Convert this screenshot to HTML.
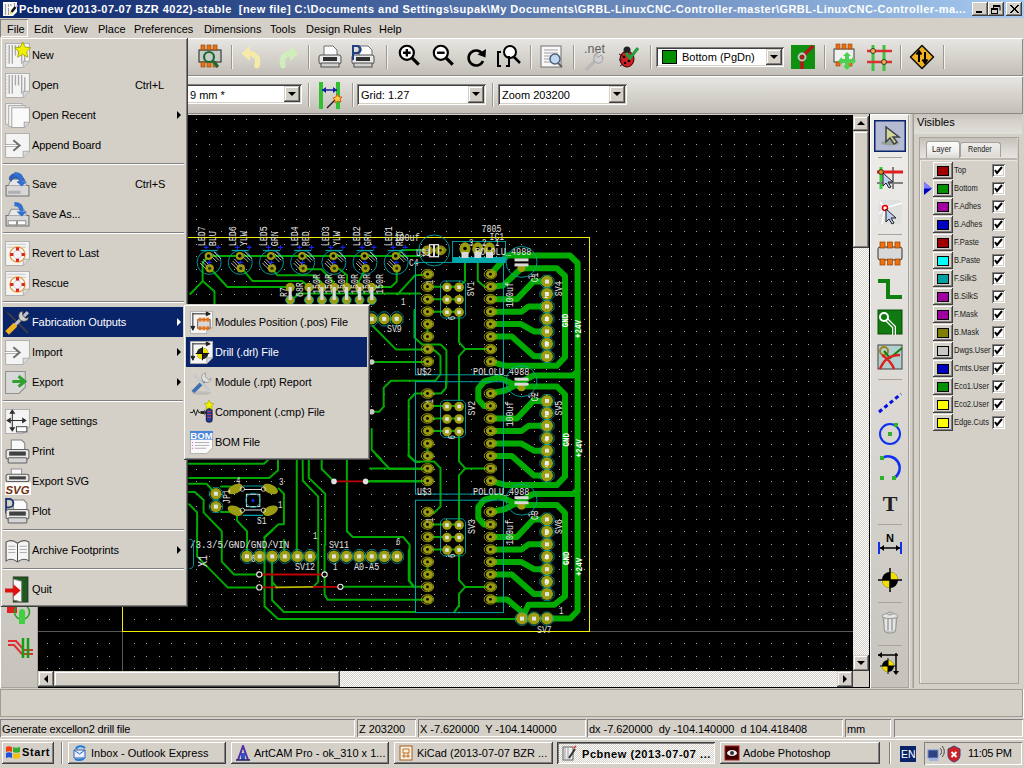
<!DOCTYPE html><html><head><meta charset="utf-8"><style>

*{box-sizing:border-box}
body{margin:0;width:1024px;height:768px;position:relative;overflow:hidden;background:#d4d0c8;font-family:"Liberation Sans",sans-serif;font-size:11px;color:#000}
.a{position:absolute}
.t{position:absolute;white-space:pre;line-height:13px}
.raised{box-shadow:inset -1px -1px #404040,inset 1px 1px #fff,inset -2px -2px #808080}
.menuf{background:#d4d0c8;box-shadow:inset 1px 1px #d4d0c8,inset -1px -1px #404040,inset 2px 2px #fff,inset -2px -2px #808080}
.sunk{box-shadow:inset 1px 1px #808080,inset -1px -1px #fff,inset 2px 2px #404040,inset -2px -2px #d4d0c8}
.tb{position:absolute;left:0;width:1023px;height:38px;background:linear-gradient(#ecebe7 0px,#e6e4e0 2px,#d6d3cd 19px,#c4c0b9 36px);box-shadow:inset 0 1px #fff,inset 0 -1px #8c8984,inset -1px 0 #8c8984}
.sep{position:absolute;width:1px;height:24px;background:#9c9891;box-shadow:1px 0 #f4f3f0}
.combo{position:absolute;background:#fff;box-shadow:inset 1px 1px #808080,inset -1px -1px #fff,inset 2px 2px #404040,inset -2px -2px #d4d0c8}
.cbtn{position:absolute;top:2px;right:2px;width:16px;bottom:2px;background:#d4d0c8;box-shadow:inset -1px -1px #404040,inset 1px 1px #d4d0c8,inset -2px -2px #808080,inset 2px 2px #fff}
.cbtn:after{content:"";position:absolute;left:4px;top:6px;border-left:4px solid transparent;border-right:4px solid transparent;border-top:4px solid #000}
.mi{position:absolute;left:3px;width:180px;height:30px}
.mt{position:absolute;left:29px;top:9px;white-space:pre;line-height:13px;letter-spacing:-0.1px}
.hl{background:#0a246a;color:#fff}
.msep{position:absolute;left:3px;height:2px;width:181px;box-shadow:inset 0 1px #808080, inset 0 -1px #fff}
.arr{position:absolute;width:0;height:0;border-top:4px solid transparent;border-bottom:4px solid transparent;border-left:4px solid #000}
.ic{position:absolute}
.sp{position:absolute;height:18px;box-shadow:inset 1px 1px #808080,inset -1px -1px #fff}
.tbtn{position:absolute;top:3px;height:23px;background:#d4d0c8;box-shadow:inset -1px -1px #404040,inset 1px 1px #fff,inset -2px -2px #808080,inset 2px 2px #d4d0c8}

</style></head><body>
<div class="a" style="left:0;top:0;width:1024px;height:18px;background:linear-gradient(90deg,#0a246a,#a6caf0)"></div>
<svg class="a" style="left:0;top:0" width="18" height="18" viewBox="0 0 18 18">
<path d="M3 2h14v10l-4 4H3z" fill="#fafafa"/><path d="M5.5 4v11M8.5 4v3M8.5 8v7M11 4v2M14.5 3v6" stroke="#a0a0a0" stroke-width="1.2"/>
<path d="M15.5 7L11.5 12" stroke="#101010" stroke-width="2.6"/><circle cx="11" cy="13" r="1.2" fill="#e0e040"/><circle cx="17" cy="6" r="0.9" fill="#f080f0"/></svg>
<div class="t" style="left:19px;top:3px;color:#fff;font-weight:bold;letter-spacing:0.455px">Pcbnew (2013-07-07 BZR 4022)-stable  [new file] C:\Documents and Settings\supak\My Documents\GRBL-LinuxCNC-Controller-master\GRBL-LinuxCNC-Controller-ma...</div>
<div class="a raised" style="left:972px;top:2px;width:16px;height:14px;background:#d4d0c8"></div>
<div class="a raised" style="left:988px;top:2px;width:16px;height:14px;background:#d4d0c8"></div>
<div class="a raised" style="left:1006px;top:2px;width:16px;height:14px;background:#d4d0c8"></div>
<div class="a" style="left:976px;top:11px;width:6px;height:2px;background:#000"></div>
<svg class="a" style="left:988px;top:2px" width="16" height="14"><path d="M6 3.5h6v5M5.5 3v3M6 4.5h6" stroke="#000" fill="none"/><rect x="3.5" y="6.5" width="6" height="5" fill="none" stroke="#000"/><path d="M3 7.5h7" stroke="#000"/></svg>
<svg class="a" style="left:1006px;top:2px" width="16" height="14"><path d="M4 3l8 8M5 3l8 8M12 3l-8 8M13 3l-8 8" stroke="#000" stroke-width="1"/></svg>
<div class="a" style="left:0;top:19px;width:28px;height:18px;box-shadow:inset 1px 1px #808080,inset -1px -1px #fff"></div>
<div class="t" style="left:7px;top:23px">File</div>
<div class="t" style="left:34px;top:23px">Edit</div>
<div class="t" style="left:64px;top:23px">View</div>
<div class="t" style="left:98px;top:23px">Place</div>
<div class="t" style="left:134px;top:23px">Preferences</div>
<div class="t" style="left:204px;top:23px">Dimensions</div>
<div class="t" style="left:270px;top:23px">Tools</div>
<div class="t" style="left:306px;top:23px">Design Rules</div>
<div class="t" style="left:379px;top:23px">Help</div>
<div class="tb" style="top:38px"></div>
<div class="tb" style="top:76px"></div>
<div class="sep" style="left:231px;top:45px"></div>
<div class="sep" style="left:308px;top:45px"></div>
<div class="sep" style="left:386px;top:45px"></div>
<div class="sep" style="left:530px;top:45px"></div>
<div class="sep" style="left:573px;top:45px"></div>
<div class="sep" style="left:650px;top:45px"></div>
<div class="sep" style="left:824px;top:45px"></div>
<div class="sep" style="left:900px;top:45px"></div>
<div class="sep" style="left:943px;top:45px"></div>
<div class="sep" style="left:308px;top:83px"></div>
<div class="sep" style="left:352px;top:83px"></div>
<div class="sep" style="left:492px;top:83px"></div>
<svg class="a" style="left:196px;top:43px" width="28" height="28" viewBox="0 0 28 28"><rect x="3" y="7" width="22" height="12" fill="#c8ccc8" stroke="#202020"/>
<g fill="#f07010" stroke="#804000" stroke-width="0.6"><rect x="5" y="2" width="4" height="5"/><rect x="11" y="2" width="4" height="5"/><rect x="17" y="2" width="4" height="5"/><rect x="5" y="19" width="4" height="5"/><rect x="11" y="19" width="4" height="5"/><rect x="17" y="19" width="4" height="5"/></g>
<circle cx="13" cy="14" r="5" fill="none" stroke="#1a6a30" stroke-width="2.2"/><path d="M17 18l5 6" stroke="#1a6a30" stroke-width="3"/></svg>
<svg class="a" style="left:240px;top:45px" width="24" height="24" viewBox="0 0 24 24"><path d="M1.5 8.5L10 1V16Z" fill="#f6eaa8"/><path d="M8 8.5C16 8.5 19 13 17 20.5" stroke="#f6eaa8" stroke-width="5.5" fill="none" stroke-linecap="round"/></svg>
<svg class="a" style="left:276px;top:45px" width="24" height="24" viewBox="0 0 24 24"><path d="M22.5 8.5L14 1V16Z" fill="#d0eebc"/><path d="M16 8.5C8 8.5 5 13 7 20.5" stroke="#d0eebc" stroke-width="5.5" fill="none" stroke-linecap="round"/></svg>
<svg class="a" style="left:317px;top:44px" width="26" height="26" viewBox="0 0 26 26"><path d="M7 2h9l4 4v7H7z" fill="#fafafa" stroke="#707070"/><rect x="2" y="11" width="22" height="9" rx="2" fill="#e8e8e8" stroke="#505050"/><rect x="6" y="13" width="14" height="4" fill="#303030"/><rect x="4" y="19" width="18" height="4" fill="#d0d0d0" stroke="#505050"/></svg>
<svg class="a" style="left:350px;top:44px" width="26" height="26" viewBox="0 0 26 26"><path d="M9 2h9l4 4v7H9z" fill="#fafafa" stroke="#707070"/><path d="M3 16V2h4a3.5 3.5 0 0 1 0 7H3" fill="none" stroke="#204080" stroke-width="2"/><rect x="2" y="11" width="22" height="9" rx="2" fill="#e8e8e8" stroke="#505050"/><rect x="6" y="13" width="14" height="4" fill="#303030"/><rect x="4" y="19" width="18" height="4" fill="#d0d0d0" stroke="#505050"/><path d="M3 16V2h4a3.5 3.5 0 0 1 0 7H3" fill="none" stroke="#204080" stroke-width="2"/></svg>
<svg class="a" style="left:397px;top:43px" width="24" height="26" viewBox="0 0 22 24"><circle cx="9" cy="9" r="6.5" fill="#fff" stroke="#000" stroke-width="2"/><path d="M14 14l6 6" stroke="#000" stroke-width="3"/><path d="M5.5 9h7M9 5.5v7" stroke="#000" stroke-width="2.2"/></svg>
<svg class="a" style="left:431px;top:43px" width="24" height="26" viewBox="0 0 22 24"><circle cx="9" cy="9" r="6.5" fill="#fff" stroke="#000" stroke-width="2"/><path d="M14 14l6 6" stroke="#000" stroke-width="3"/><path d="M5.5 9h7" stroke="#000" stroke-width="2.2"/></svg>
<svg class="a" style="left:464px;top:44px" width="24" height="26" viewBox="0 0 24 24"><path d="M18.5 9A7.5 7.5 0 1 0 19 16" fill="none" stroke="#000" stroke-width="2.6"/><path d="M13.5 9.5L21.5 12.5L22 4z" fill="#000"/></svg>
<svg class="a" style="left:496px;top:43px" width="26" height="27" viewBox="0 0 26 27"><circle cx="14" cy="9" r="6" fill="#fff" stroke="#000" stroke-width="2"/><path d="M18 14l6 6" stroke="#000" stroke-width="2.5"/><path d="M5 9h-3v14h3M10 23h3V13" fill="none" stroke="#000" stroke-width="2"/></svg>
<svg class="a" style="left:539px;top:43px" width="27" height="28" viewBox="0 0 27 28"><rect x="2" y="3" width="20" height="21" fill="#f8f8f8" stroke="#707070"/><path d="M5 7h14M5 10h14M5 13h8M5 16h8M5 19h8" stroke="#a0a0a0"/><circle cx="16" cy="16" r="5" fill="#c0d8f0" stroke="#506080" stroke-width="1.5"/><path d="M19 20l4 4" stroke="#606060" stroke-width="2"/></svg>
<svg class="a" style="left:582px;top:42px" width="26" height="30" viewBox="0 0 26 30"><text x="2" y="11" font-family="Liberation Sans" font-size="12.5" fill="#606060">.net</text><path d="M5 27l8-8" stroke="#b8b8b8" stroke-width="3.5" stroke-linecap="round"/><path d="M12 16a4.5 4.5 0 1 0 7 -3l-3 2.5-2-2 2.5-3a4.5 4.5 0 0 0 -4.5 5.5z" fill="#d0d0d0" stroke="#909090" stroke-width="0.8"/></svg>
<svg class="a" style="left:615px;top:42px" width="26" height="28" viewBox="0 0 26 28"><ellipse cx="12" cy="17" rx="7" ry="8" fill="#d02020" stroke="#300" /><circle cx="12" cy="8" r="3.5" fill="#202020"/><circle cx="9" cy="15" r="1.3" fill="#000"/><circle cx="14" cy="19" r="1.3" fill="#000"/><circle cx="10" cy="21" r="1.2" fill="#000"/><path d="M4 12l4 2M4 18h3M5 24l3-2M20 12l-4 2" stroke="#202020"/><path d="M11 11l4 5l8-10" stroke="#20a040" stroke-width="3" fill="none"/></svg>
<div class="combo" style="left:656px;top:47px;width:128px;height:20px"><div class="cbtn"></div><div class="a" style="left:6px;top:3px;width:15px;height:14px;background:#009000;border:1px solid #000"></div><div class="t" style="left:26px;top:4px">Bottom (PgDn)</div></div>
<svg class="a" style="left:790px;top:44px" width="26" height="26" viewBox="0 0 26 26"><rect x="1" y="1" width="24" height="24" fill="#109010"/><path d="M23 2L12 13V25" stroke="#b01818" stroke-width="3.5" fill="none"/><circle cx="12" cy="13" r="3.5" fill="none" stroke="#c8c8c8" stroke-width="1.8"/></svg>
<svg class="a" style="left:832px;top:43px" width="27" height="28" viewBox="0 0 27 28"><rect x="2" y="6" width="20" height="13" fill="#f0f0f0" stroke="#404040"/><g fill="#f07010" stroke="#904000" stroke-width="0.6"><rect x="4" y="1" width="4" height="5"/><rect x="10" y="1" width="4" height="5"/><rect x="16" y="1" width="4" height="5"/><rect x="4" y="19" width="4" height="4"/><rect x="16" y="19" width="4" height="4"/></g><path d="M15 9l4 4h-2v3h3v-2l4 4-4 4v-2h-3v3h2l-4 4-4-4h2v-3h-3v2l-4-4 4-4v2h3v-3h-2z" fill="#50d050"/></svg>
<svg class="a" style="left:866px;top:43px" width="27" height="28" viewBox="0 0 27 28"><path d="M7 2v26M18 2v26" stroke="#40c040" stroke-width="3"/><path d="M1 8h25M1 19h25" stroke="#d83030" stroke-width="2.5"/><circle cx="7" cy="8" r="2.5" fill="#f0b050" stroke="#202020" stroke-width="0.8"/><circle cx="18" cy="19" r="2.5" fill="#f0b050" stroke="#202020" stroke-width="0.8"/></svg>
<svg class="a" style="left:909px;top:44px" width="26" height="26" viewBox="0 0 26 26"><path d="M13 1.5L24.5 13L13 24.5L1.5 13Z" fill="#f0b020" stroke="#101010" stroke-width="1.6" stroke-linejoin="round"/><path d="M10 18V8M7.5 10.5L10 7l2.5 3.5M16 8v10M13.5 15.5L16 19l2.5-3.5" stroke="#000" stroke-width="2" fill="none"/></svg>
<div class="combo" style="left:120px;top:84px;width:182px;height:20px"><div class="cbtn"></div><div class="t" style="left:4px;top:4px"></div></div>
<div class="t" style="left:190px;top:89px">9 mm *</div>
<svg class="a" style="left:317px;top:80px" width="26" height="30" viewBox="0 0 26 30"><path d="M4 2v27M21 2v27" stroke="#30c030" stroke-width="4"/><path d="M5 10h15" stroke="#1020a0" stroke-width="1.5"/><path d="M5 10l4-3v6zM20 10l-4-3v6z" fill="#1020a0"/><path d="M10 28l9-9" stroke="#202020" stroke-width="1.5"/><path d="M20 14l2 3 3 0-2 2 1 3-3-1-3 2 0-3-2-2 3-1z" fill="#ffd040" stroke="#e04000" stroke-width="0.8"/></svg>
<div class="combo" style="left:357px;top:84px;width:129px;height:21px"><div class="cbtn"></div><div class="t" style="left:4px;top:5px">Grid: 1.27</div></div>
<div class="combo" style="left:498px;top:84px;width:129px;height:21px"><div class="cbtn"></div><div class="t" style="left:4px;top:5px">Zoom 203200</div></div>
<div class="a" style="left:0;top:114px;width:38px;height:574px;background:linear-gradient(#efeeeb,#dcd9d4 50%,#c6c3bc);box-shadow:inset 1px 0 #fff,inset -1px 0 #a8a49c,inset 0 -1px #a8a49c"></div>
<svg class="a" style="left:6px;top:600px" width="26" height="26" viewBox="0 0 26 26"><rect x="1" y="6" width="10" height="7" fill="#e02020"/><circle cx="16" cy="12" r="7.5" fill="none" stroke="#20a020" stroke-width="1.5"/><circle cx="16" cy="12" r="3" fill="#40d040"/><rect x="13" y="12" width="6" height="12" fill="#40d040"/></svg>
<svg class="a" style="left:7px;top:638px" width="26" height="30" viewBox="0 0 26 30"><path d="M1 3h8l8 9h13M1 7h6l8 9h15" stroke="#e03030" stroke-width="2" fill="none"/><path d="M16 0v20M21 0v20" stroke="#10a010" stroke-width="2.5"/></svg>
<svg class="a" style="left:38px;top:115px" width="815" height="556" viewBox="38 115 815 556">
<rect x="38" y="115" width="815" height="556" fill="#000"/>
<path d="M47 119h1v1h-1zM59 119h1v1h-1zM72 119h1v1h-1zM84 119h1v1h-1zM97 119h1v1h-1zM109 119h1v1h-1zM122 119h1v1h-1zM134 119h1v1h-1zM146 119h1v1h-1zM159 119h1v1h-1zM171 119h1v1h-1zM184 119h1v1h-1zM196 119h1v1h-1zM209 119h1v1h-1zM221 119h1v1h-1zM234 119h1v1h-1zM246 119h1v1h-1zM259 119h1v1h-1zM271 119h1v1h-1zM284 119h1v1h-1zM296 119h1v1h-1zM309 119h1v1h-1zM321 119h1v1h-1zM334 119h1v1h-1zM346 119h1v1h-1zM359 119h1v1h-1zM371 119h1v1h-1zM384 119h1v1h-1zM396 119h1v1h-1zM409 119h1v1h-1zM421 119h1v1h-1zM434 119h1v1h-1zM446 119h1v1h-1zM459 119h1v1h-1zM471 119h1v1h-1zM484 119h1v1h-1zM496 119h1v1h-1zM509 119h1v1h-1zM521 119h1v1h-1zM534 119h1v1h-1zM546 119h1v1h-1zM559 119h1v1h-1zM571 119h1v1h-1zM584 119h1v1h-1zM596 119h1v1h-1zM609 119h1v1h-1zM621 119h1v1h-1zM634 119h1v1h-1zM646 119h1v1h-1zM659 119h1v1h-1zM671 119h1v1h-1zM684 119h1v1h-1zM696 119h1v1h-1zM709 119h1v1h-1zM721 119h1v1h-1zM734 119h1v1h-1zM746 119h1v1h-1zM759 119h1v1h-1zM771 119h1v1h-1zM783 119h1v1h-1zM796 119h1v1h-1zM808 119h1v1h-1zM821 119h1v1h-1zM833 119h1v1h-1zM846 119h1v1h-1zM47 131h1v1h-1zM59 131h1v1h-1zM72 131h1v1h-1zM84 131h1v1h-1zM97 131h1v1h-1zM109 131h1v1h-1zM122 131h1v1h-1zM134 131h1v1h-1zM146 131h1v1h-1zM159 131h1v1h-1zM171 131h1v1h-1zM184 131h1v1h-1zM196 131h1v1h-1zM209 131h1v1h-1zM221 131h1v1h-1zM234 131h1v1h-1zM246 131h1v1h-1zM259 131h1v1h-1zM271 131h1v1h-1zM284 131h1v1h-1zM296 131h1v1h-1zM309 131h1v1h-1zM321 131h1v1h-1zM334 131h1v1h-1zM346 131h1v1h-1zM359 131h1v1h-1zM371 131h1v1h-1zM384 131h1v1h-1zM396 131h1v1h-1zM409 131h1v1h-1zM421 131h1v1h-1zM434 131h1v1h-1zM446 131h1v1h-1zM459 131h1v1h-1zM471 131h1v1h-1zM484 131h1v1h-1zM496 131h1v1h-1zM509 131h1v1h-1zM521 131h1v1h-1zM534 131h1v1h-1zM546 131h1v1h-1zM559 131h1v1h-1zM571 131h1v1h-1zM584 131h1v1h-1zM596 131h1v1h-1zM609 131h1v1h-1zM621 131h1v1h-1zM634 131h1v1h-1zM646 131h1v1h-1zM659 131h1v1h-1zM671 131h1v1h-1zM684 131h1v1h-1zM696 131h1v1h-1zM709 131h1v1h-1zM721 131h1v1h-1zM734 131h1v1h-1zM746 131h1v1h-1zM759 131h1v1h-1zM771 131h1v1h-1zM783 131h1v1h-1zM796 131h1v1h-1zM808 131h1v1h-1zM821 131h1v1h-1zM833 131h1v1h-1zM846 131h1v1h-1zM47 144h1v1h-1zM59 144h1v1h-1zM72 144h1v1h-1zM84 144h1v1h-1zM97 144h1v1h-1zM109 144h1v1h-1zM122 144h1v1h-1zM134 144h1v1h-1zM146 144h1v1h-1zM159 144h1v1h-1zM171 144h1v1h-1zM184 144h1v1h-1zM196 144h1v1h-1zM209 144h1v1h-1zM221 144h1v1h-1zM234 144h1v1h-1zM246 144h1v1h-1zM259 144h1v1h-1zM271 144h1v1h-1zM284 144h1v1h-1zM296 144h1v1h-1zM309 144h1v1h-1zM321 144h1v1h-1zM334 144h1v1h-1zM346 144h1v1h-1zM359 144h1v1h-1zM371 144h1v1h-1zM384 144h1v1h-1zM396 144h1v1h-1zM409 144h1v1h-1zM421 144h1v1h-1zM434 144h1v1h-1zM446 144h1v1h-1zM459 144h1v1h-1zM471 144h1v1h-1zM484 144h1v1h-1zM496 144h1v1h-1zM509 144h1v1h-1zM521 144h1v1h-1zM534 144h1v1h-1zM546 144h1v1h-1zM559 144h1v1h-1zM571 144h1v1h-1zM584 144h1v1h-1zM596 144h1v1h-1zM609 144h1v1h-1zM621 144h1v1h-1zM634 144h1v1h-1zM646 144h1v1h-1zM659 144h1v1h-1zM671 144h1v1h-1zM684 144h1v1h-1zM696 144h1v1h-1zM709 144h1v1h-1zM721 144h1v1h-1zM734 144h1v1h-1zM746 144h1v1h-1zM759 144h1v1h-1zM771 144h1v1h-1zM783 144h1v1h-1zM796 144h1v1h-1zM808 144h1v1h-1zM821 144h1v1h-1zM833 144h1v1h-1zM846 144h1v1h-1zM47 156h1v1h-1zM59 156h1v1h-1zM72 156h1v1h-1zM84 156h1v1h-1zM97 156h1v1h-1zM109 156h1v1h-1zM122 156h1v1h-1zM134 156h1v1h-1zM146 156h1v1h-1zM159 156h1v1h-1zM171 156h1v1h-1zM184 156h1v1h-1zM196 156h1v1h-1zM209 156h1v1h-1zM221 156h1v1h-1zM234 156h1v1h-1zM246 156h1v1h-1zM259 156h1v1h-1zM271 156h1v1h-1zM284 156h1v1h-1zM296 156h1v1h-1zM309 156h1v1h-1zM321 156h1v1h-1zM334 156h1v1h-1zM346 156h1v1h-1zM359 156h1v1h-1zM371 156h1v1h-1zM384 156h1v1h-1zM396 156h1v1h-1zM409 156h1v1h-1zM421 156h1v1h-1zM434 156h1v1h-1zM446 156h1v1h-1zM459 156h1v1h-1zM471 156h1v1h-1zM484 156h1v1h-1zM496 156h1v1h-1zM509 156h1v1h-1zM521 156h1v1h-1zM534 156h1v1h-1zM546 156h1v1h-1zM559 156h1v1h-1zM571 156h1v1h-1zM584 156h1v1h-1zM596 156h1v1h-1zM609 156h1v1h-1zM621 156h1v1h-1zM634 156h1v1h-1zM646 156h1v1h-1zM659 156h1v1h-1zM671 156h1v1h-1zM684 156h1v1h-1zM696 156h1v1h-1zM709 156h1v1h-1zM721 156h1v1h-1zM734 156h1v1h-1zM746 156h1v1h-1zM759 156h1v1h-1zM771 156h1v1h-1zM783 156h1v1h-1zM796 156h1v1h-1zM808 156h1v1h-1zM821 156h1v1h-1zM833 156h1v1h-1zM846 156h1v1h-1zM47 169h1v1h-1zM59 169h1v1h-1zM72 169h1v1h-1zM84 169h1v1h-1zM97 169h1v1h-1zM109 169h1v1h-1zM122 169h1v1h-1zM134 169h1v1h-1zM146 169h1v1h-1zM159 169h1v1h-1zM171 169h1v1h-1zM184 169h1v1h-1zM196 169h1v1h-1zM209 169h1v1h-1zM221 169h1v1h-1zM234 169h1v1h-1zM246 169h1v1h-1zM259 169h1v1h-1zM271 169h1v1h-1zM284 169h1v1h-1zM296 169h1v1h-1zM309 169h1v1h-1zM321 169h1v1h-1zM334 169h1v1h-1zM346 169h1v1h-1zM359 169h1v1h-1zM371 169h1v1h-1zM384 169h1v1h-1zM396 169h1v1h-1zM409 169h1v1h-1zM421 169h1v1h-1zM434 169h1v1h-1zM446 169h1v1h-1zM459 169h1v1h-1zM471 169h1v1h-1zM484 169h1v1h-1zM496 169h1v1h-1zM509 169h1v1h-1zM521 169h1v1h-1zM534 169h1v1h-1zM546 169h1v1h-1zM559 169h1v1h-1zM571 169h1v1h-1zM584 169h1v1h-1zM596 169h1v1h-1zM609 169h1v1h-1zM621 169h1v1h-1zM634 169h1v1h-1zM646 169h1v1h-1zM659 169h1v1h-1zM671 169h1v1h-1zM684 169h1v1h-1zM696 169h1v1h-1zM709 169h1v1h-1zM721 169h1v1h-1zM734 169h1v1h-1zM746 169h1v1h-1zM759 169h1v1h-1zM771 169h1v1h-1zM783 169h1v1h-1zM796 169h1v1h-1zM808 169h1v1h-1zM821 169h1v1h-1zM833 169h1v1h-1zM846 169h1v1h-1zM47 181h1v1h-1zM59 181h1v1h-1zM72 181h1v1h-1zM84 181h1v1h-1zM97 181h1v1h-1zM109 181h1v1h-1zM122 181h1v1h-1zM134 181h1v1h-1zM146 181h1v1h-1zM159 181h1v1h-1zM171 181h1v1h-1zM184 181h1v1h-1zM196 181h1v1h-1zM209 181h1v1h-1zM221 181h1v1h-1zM234 181h1v1h-1zM246 181h1v1h-1zM259 181h1v1h-1zM271 181h1v1h-1zM284 181h1v1h-1zM296 181h1v1h-1zM309 181h1v1h-1zM321 181h1v1h-1zM334 181h1v1h-1zM346 181h1v1h-1zM359 181h1v1h-1zM371 181h1v1h-1zM384 181h1v1h-1zM396 181h1v1h-1zM409 181h1v1h-1zM421 181h1v1h-1zM434 181h1v1h-1zM446 181h1v1h-1zM459 181h1v1h-1zM471 181h1v1h-1zM484 181h1v1h-1zM496 181h1v1h-1zM509 181h1v1h-1zM521 181h1v1h-1zM534 181h1v1h-1zM546 181h1v1h-1zM559 181h1v1h-1zM571 181h1v1h-1zM584 181h1v1h-1zM596 181h1v1h-1zM609 181h1v1h-1zM621 181h1v1h-1zM634 181h1v1h-1zM646 181h1v1h-1zM659 181h1v1h-1zM671 181h1v1h-1zM684 181h1v1h-1zM696 181h1v1h-1zM709 181h1v1h-1zM721 181h1v1h-1zM734 181h1v1h-1zM746 181h1v1h-1zM759 181h1v1h-1zM771 181h1v1h-1zM783 181h1v1h-1zM796 181h1v1h-1zM808 181h1v1h-1zM821 181h1v1h-1zM833 181h1v1h-1zM846 181h1v1h-1zM47 194h1v1h-1zM59 194h1v1h-1zM72 194h1v1h-1zM84 194h1v1h-1zM97 194h1v1h-1zM109 194h1v1h-1zM122 194h1v1h-1zM134 194h1v1h-1zM146 194h1v1h-1zM159 194h1v1h-1zM171 194h1v1h-1zM184 194h1v1h-1zM196 194h1v1h-1zM209 194h1v1h-1zM221 194h1v1h-1zM234 194h1v1h-1zM246 194h1v1h-1zM259 194h1v1h-1zM271 194h1v1h-1zM284 194h1v1h-1zM296 194h1v1h-1zM309 194h1v1h-1zM321 194h1v1h-1zM334 194h1v1h-1zM346 194h1v1h-1zM359 194h1v1h-1zM371 194h1v1h-1zM384 194h1v1h-1zM396 194h1v1h-1zM409 194h1v1h-1zM421 194h1v1h-1zM434 194h1v1h-1zM446 194h1v1h-1zM459 194h1v1h-1zM471 194h1v1h-1zM484 194h1v1h-1zM496 194h1v1h-1zM509 194h1v1h-1zM521 194h1v1h-1zM534 194h1v1h-1zM546 194h1v1h-1zM559 194h1v1h-1zM571 194h1v1h-1zM584 194h1v1h-1zM596 194h1v1h-1zM609 194h1v1h-1zM621 194h1v1h-1zM634 194h1v1h-1zM646 194h1v1h-1zM659 194h1v1h-1zM671 194h1v1h-1zM684 194h1v1h-1zM696 194h1v1h-1zM709 194h1v1h-1zM721 194h1v1h-1zM734 194h1v1h-1zM746 194h1v1h-1zM759 194h1v1h-1zM771 194h1v1h-1zM783 194h1v1h-1zM796 194h1v1h-1zM808 194h1v1h-1zM821 194h1v1h-1zM833 194h1v1h-1zM846 194h1v1h-1zM47 206h1v1h-1zM59 206h1v1h-1zM72 206h1v1h-1zM84 206h1v1h-1zM97 206h1v1h-1zM109 206h1v1h-1zM122 206h1v1h-1zM134 206h1v1h-1zM146 206h1v1h-1zM159 206h1v1h-1zM171 206h1v1h-1zM184 206h1v1h-1zM196 206h1v1h-1zM209 206h1v1h-1zM221 206h1v1h-1zM234 206h1v1h-1zM246 206h1v1h-1zM259 206h1v1h-1zM271 206h1v1h-1zM284 206h1v1h-1zM296 206h1v1h-1zM309 206h1v1h-1zM321 206h1v1h-1zM334 206h1v1h-1zM346 206h1v1h-1zM359 206h1v1h-1zM371 206h1v1h-1zM384 206h1v1h-1zM396 206h1v1h-1zM409 206h1v1h-1zM421 206h1v1h-1zM434 206h1v1h-1zM446 206h1v1h-1zM459 206h1v1h-1zM471 206h1v1h-1zM484 206h1v1h-1zM496 206h1v1h-1zM509 206h1v1h-1zM521 206h1v1h-1zM534 206h1v1h-1zM546 206h1v1h-1zM559 206h1v1h-1zM571 206h1v1h-1zM584 206h1v1h-1zM596 206h1v1h-1zM609 206h1v1h-1zM621 206h1v1h-1zM634 206h1v1h-1zM646 206h1v1h-1zM659 206h1v1h-1zM671 206h1v1h-1zM684 206h1v1h-1zM696 206h1v1h-1zM709 206h1v1h-1zM721 206h1v1h-1zM734 206h1v1h-1zM746 206h1v1h-1zM759 206h1v1h-1zM771 206h1v1h-1zM783 206h1v1h-1zM796 206h1v1h-1zM808 206h1v1h-1zM821 206h1v1h-1zM833 206h1v1h-1zM846 206h1v1h-1zM47 219h1v1h-1zM59 219h1v1h-1zM72 219h1v1h-1zM84 219h1v1h-1zM97 219h1v1h-1zM109 219h1v1h-1zM122 219h1v1h-1zM134 219h1v1h-1zM146 219h1v1h-1zM159 219h1v1h-1zM171 219h1v1h-1zM184 219h1v1h-1zM196 219h1v1h-1zM209 219h1v1h-1zM221 219h1v1h-1zM234 219h1v1h-1zM246 219h1v1h-1zM259 219h1v1h-1zM271 219h1v1h-1zM284 219h1v1h-1zM296 219h1v1h-1zM309 219h1v1h-1zM321 219h1v1h-1zM334 219h1v1h-1zM346 219h1v1h-1zM359 219h1v1h-1zM371 219h1v1h-1zM384 219h1v1h-1zM396 219h1v1h-1zM409 219h1v1h-1zM421 219h1v1h-1zM434 219h1v1h-1zM446 219h1v1h-1zM459 219h1v1h-1zM471 219h1v1h-1zM484 219h1v1h-1zM496 219h1v1h-1zM509 219h1v1h-1zM521 219h1v1h-1zM534 219h1v1h-1zM546 219h1v1h-1zM559 219h1v1h-1zM571 219h1v1h-1zM584 219h1v1h-1zM596 219h1v1h-1zM609 219h1v1h-1zM621 219h1v1h-1zM634 219h1v1h-1zM646 219h1v1h-1zM659 219h1v1h-1zM671 219h1v1h-1zM684 219h1v1h-1zM696 219h1v1h-1zM709 219h1v1h-1zM721 219h1v1h-1zM734 219h1v1h-1zM746 219h1v1h-1zM759 219h1v1h-1zM771 219h1v1h-1zM783 219h1v1h-1zM796 219h1v1h-1zM808 219h1v1h-1zM821 219h1v1h-1zM833 219h1v1h-1zM846 219h1v1h-1zM47 231h1v1h-1zM59 231h1v1h-1zM72 231h1v1h-1zM84 231h1v1h-1zM97 231h1v1h-1zM109 231h1v1h-1zM122 231h1v1h-1zM134 231h1v1h-1zM146 231h1v1h-1zM159 231h1v1h-1zM171 231h1v1h-1zM184 231h1v1h-1zM196 231h1v1h-1zM209 231h1v1h-1zM221 231h1v1h-1zM234 231h1v1h-1zM246 231h1v1h-1zM259 231h1v1h-1zM271 231h1v1h-1zM284 231h1v1h-1zM296 231h1v1h-1zM309 231h1v1h-1zM321 231h1v1h-1zM334 231h1v1h-1zM346 231h1v1h-1zM359 231h1v1h-1zM371 231h1v1h-1zM384 231h1v1h-1zM396 231h1v1h-1zM409 231h1v1h-1zM421 231h1v1h-1zM434 231h1v1h-1zM446 231h1v1h-1zM459 231h1v1h-1zM471 231h1v1h-1zM484 231h1v1h-1zM496 231h1v1h-1zM509 231h1v1h-1zM521 231h1v1h-1zM534 231h1v1h-1zM546 231h1v1h-1zM559 231h1v1h-1zM571 231h1v1h-1zM584 231h1v1h-1zM596 231h1v1h-1zM609 231h1v1h-1zM621 231h1v1h-1zM634 231h1v1h-1zM646 231h1v1h-1zM659 231h1v1h-1zM671 231h1v1h-1zM684 231h1v1h-1zM696 231h1v1h-1zM709 231h1v1h-1zM721 231h1v1h-1zM734 231h1v1h-1zM746 231h1v1h-1zM759 231h1v1h-1zM771 231h1v1h-1zM783 231h1v1h-1zM796 231h1v1h-1zM808 231h1v1h-1zM821 231h1v1h-1zM833 231h1v1h-1zM846 231h1v1h-1zM47 244h1v1h-1zM59 244h1v1h-1zM72 244h1v1h-1zM84 244h1v1h-1zM97 244h1v1h-1zM109 244h1v1h-1zM122 244h1v1h-1zM134 244h1v1h-1zM146 244h1v1h-1zM159 244h1v1h-1zM171 244h1v1h-1zM184 244h1v1h-1zM196 244h1v1h-1zM209 244h1v1h-1zM221 244h1v1h-1zM234 244h1v1h-1zM246 244h1v1h-1zM259 244h1v1h-1zM271 244h1v1h-1zM284 244h1v1h-1zM296 244h1v1h-1zM309 244h1v1h-1zM321 244h1v1h-1zM334 244h1v1h-1zM346 244h1v1h-1zM359 244h1v1h-1zM371 244h1v1h-1zM384 244h1v1h-1zM396 244h1v1h-1zM409 244h1v1h-1zM421 244h1v1h-1zM434 244h1v1h-1zM446 244h1v1h-1zM459 244h1v1h-1zM471 244h1v1h-1zM484 244h1v1h-1zM496 244h1v1h-1zM509 244h1v1h-1zM521 244h1v1h-1zM534 244h1v1h-1zM546 244h1v1h-1zM559 244h1v1h-1zM571 244h1v1h-1zM584 244h1v1h-1zM596 244h1v1h-1zM609 244h1v1h-1zM621 244h1v1h-1zM634 244h1v1h-1zM646 244h1v1h-1zM659 244h1v1h-1zM671 244h1v1h-1zM684 244h1v1h-1zM696 244h1v1h-1zM709 244h1v1h-1zM721 244h1v1h-1zM734 244h1v1h-1zM746 244h1v1h-1zM759 244h1v1h-1zM771 244h1v1h-1zM783 244h1v1h-1zM796 244h1v1h-1zM808 244h1v1h-1zM821 244h1v1h-1zM833 244h1v1h-1zM846 244h1v1h-1zM47 256h1v1h-1zM59 256h1v1h-1zM72 256h1v1h-1zM84 256h1v1h-1zM97 256h1v1h-1zM109 256h1v1h-1zM122 256h1v1h-1zM134 256h1v1h-1zM146 256h1v1h-1zM159 256h1v1h-1zM171 256h1v1h-1zM184 256h1v1h-1zM196 256h1v1h-1zM209 256h1v1h-1zM221 256h1v1h-1zM234 256h1v1h-1zM246 256h1v1h-1zM259 256h1v1h-1zM271 256h1v1h-1zM284 256h1v1h-1zM296 256h1v1h-1zM309 256h1v1h-1zM321 256h1v1h-1zM334 256h1v1h-1zM346 256h1v1h-1zM359 256h1v1h-1zM371 256h1v1h-1zM384 256h1v1h-1zM396 256h1v1h-1zM409 256h1v1h-1zM421 256h1v1h-1zM434 256h1v1h-1zM446 256h1v1h-1zM459 256h1v1h-1zM471 256h1v1h-1zM484 256h1v1h-1zM496 256h1v1h-1zM509 256h1v1h-1zM521 256h1v1h-1zM534 256h1v1h-1zM546 256h1v1h-1zM559 256h1v1h-1zM571 256h1v1h-1zM584 256h1v1h-1zM596 256h1v1h-1zM609 256h1v1h-1zM621 256h1v1h-1zM634 256h1v1h-1zM646 256h1v1h-1zM659 256h1v1h-1zM671 256h1v1h-1zM684 256h1v1h-1zM696 256h1v1h-1zM709 256h1v1h-1zM721 256h1v1h-1zM734 256h1v1h-1zM746 256h1v1h-1zM759 256h1v1h-1zM771 256h1v1h-1zM783 256h1v1h-1zM796 256h1v1h-1zM808 256h1v1h-1zM821 256h1v1h-1zM833 256h1v1h-1zM846 256h1v1h-1zM47 269h1v1h-1zM59 269h1v1h-1zM72 269h1v1h-1zM84 269h1v1h-1zM97 269h1v1h-1zM109 269h1v1h-1zM122 269h1v1h-1zM134 269h1v1h-1zM146 269h1v1h-1zM159 269h1v1h-1zM171 269h1v1h-1zM184 269h1v1h-1zM196 269h1v1h-1zM209 269h1v1h-1zM221 269h1v1h-1zM234 269h1v1h-1zM246 269h1v1h-1zM259 269h1v1h-1zM271 269h1v1h-1zM284 269h1v1h-1zM296 269h1v1h-1zM309 269h1v1h-1zM321 269h1v1h-1zM334 269h1v1h-1zM346 269h1v1h-1zM359 269h1v1h-1zM371 269h1v1h-1zM384 269h1v1h-1zM396 269h1v1h-1zM409 269h1v1h-1zM421 269h1v1h-1zM434 269h1v1h-1zM446 269h1v1h-1zM459 269h1v1h-1zM471 269h1v1h-1zM484 269h1v1h-1zM496 269h1v1h-1zM509 269h1v1h-1zM521 269h1v1h-1zM534 269h1v1h-1zM546 269h1v1h-1zM559 269h1v1h-1zM571 269h1v1h-1zM584 269h1v1h-1zM596 269h1v1h-1zM609 269h1v1h-1zM621 269h1v1h-1zM634 269h1v1h-1zM646 269h1v1h-1zM659 269h1v1h-1zM671 269h1v1h-1zM684 269h1v1h-1zM696 269h1v1h-1zM709 269h1v1h-1zM721 269h1v1h-1zM734 269h1v1h-1zM746 269h1v1h-1zM759 269h1v1h-1zM771 269h1v1h-1zM783 269h1v1h-1zM796 269h1v1h-1zM808 269h1v1h-1zM821 269h1v1h-1zM833 269h1v1h-1zM846 269h1v1h-1zM47 281h1v1h-1zM59 281h1v1h-1zM72 281h1v1h-1zM84 281h1v1h-1zM97 281h1v1h-1zM109 281h1v1h-1zM122 281h1v1h-1zM134 281h1v1h-1zM146 281h1v1h-1zM159 281h1v1h-1zM171 281h1v1h-1zM184 281h1v1h-1zM196 281h1v1h-1zM209 281h1v1h-1zM221 281h1v1h-1zM234 281h1v1h-1zM246 281h1v1h-1zM259 281h1v1h-1zM271 281h1v1h-1zM284 281h1v1h-1zM296 281h1v1h-1zM309 281h1v1h-1zM321 281h1v1h-1zM334 281h1v1h-1zM346 281h1v1h-1zM359 281h1v1h-1zM371 281h1v1h-1zM384 281h1v1h-1zM396 281h1v1h-1zM409 281h1v1h-1zM421 281h1v1h-1zM434 281h1v1h-1zM446 281h1v1h-1zM459 281h1v1h-1zM471 281h1v1h-1zM484 281h1v1h-1zM496 281h1v1h-1zM509 281h1v1h-1zM521 281h1v1h-1zM534 281h1v1h-1zM546 281h1v1h-1zM559 281h1v1h-1zM571 281h1v1h-1zM584 281h1v1h-1zM596 281h1v1h-1zM609 281h1v1h-1zM621 281h1v1h-1zM634 281h1v1h-1zM646 281h1v1h-1zM659 281h1v1h-1zM671 281h1v1h-1zM684 281h1v1h-1zM696 281h1v1h-1zM709 281h1v1h-1zM721 281h1v1h-1zM734 281h1v1h-1zM746 281h1v1h-1zM759 281h1v1h-1zM771 281h1v1h-1zM783 281h1v1h-1zM796 281h1v1h-1zM808 281h1v1h-1zM821 281h1v1h-1zM833 281h1v1h-1zM846 281h1v1h-1zM47 294h1v1h-1zM59 294h1v1h-1zM72 294h1v1h-1zM84 294h1v1h-1zM97 294h1v1h-1zM109 294h1v1h-1zM122 294h1v1h-1zM134 294h1v1h-1zM146 294h1v1h-1zM159 294h1v1h-1zM171 294h1v1h-1zM184 294h1v1h-1zM196 294h1v1h-1zM209 294h1v1h-1zM221 294h1v1h-1zM234 294h1v1h-1zM246 294h1v1h-1zM259 294h1v1h-1zM271 294h1v1h-1zM284 294h1v1h-1zM296 294h1v1h-1zM309 294h1v1h-1zM321 294h1v1h-1zM334 294h1v1h-1zM346 294h1v1h-1zM359 294h1v1h-1zM371 294h1v1h-1zM384 294h1v1h-1zM396 294h1v1h-1zM409 294h1v1h-1zM421 294h1v1h-1zM434 294h1v1h-1zM446 294h1v1h-1zM459 294h1v1h-1zM471 294h1v1h-1zM484 294h1v1h-1zM496 294h1v1h-1zM509 294h1v1h-1zM521 294h1v1h-1zM534 294h1v1h-1zM546 294h1v1h-1zM559 294h1v1h-1zM571 294h1v1h-1zM584 294h1v1h-1zM596 294h1v1h-1zM609 294h1v1h-1zM621 294h1v1h-1zM634 294h1v1h-1zM646 294h1v1h-1zM659 294h1v1h-1zM671 294h1v1h-1zM684 294h1v1h-1zM696 294h1v1h-1zM709 294h1v1h-1zM721 294h1v1h-1zM734 294h1v1h-1zM746 294h1v1h-1zM759 294h1v1h-1zM771 294h1v1h-1zM783 294h1v1h-1zM796 294h1v1h-1zM808 294h1v1h-1zM821 294h1v1h-1zM833 294h1v1h-1zM846 294h1v1h-1zM47 306h1v1h-1zM59 306h1v1h-1zM72 306h1v1h-1zM84 306h1v1h-1zM97 306h1v1h-1zM109 306h1v1h-1zM122 306h1v1h-1zM134 306h1v1h-1zM146 306h1v1h-1zM159 306h1v1h-1zM171 306h1v1h-1zM184 306h1v1h-1zM196 306h1v1h-1zM209 306h1v1h-1zM221 306h1v1h-1zM234 306h1v1h-1zM246 306h1v1h-1zM259 306h1v1h-1zM271 306h1v1h-1zM284 306h1v1h-1zM296 306h1v1h-1zM309 306h1v1h-1zM321 306h1v1h-1zM334 306h1v1h-1zM346 306h1v1h-1zM359 306h1v1h-1zM371 306h1v1h-1zM384 306h1v1h-1zM396 306h1v1h-1zM409 306h1v1h-1zM421 306h1v1h-1zM434 306h1v1h-1zM446 306h1v1h-1zM459 306h1v1h-1zM471 306h1v1h-1zM484 306h1v1h-1zM496 306h1v1h-1zM509 306h1v1h-1zM521 306h1v1h-1zM534 306h1v1h-1zM546 306h1v1h-1zM559 306h1v1h-1zM571 306h1v1h-1zM584 306h1v1h-1zM596 306h1v1h-1zM609 306h1v1h-1zM621 306h1v1h-1zM634 306h1v1h-1zM646 306h1v1h-1zM659 306h1v1h-1zM671 306h1v1h-1zM684 306h1v1h-1zM696 306h1v1h-1zM709 306h1v1h-1zM721 306h1v1h-1zM734 306h1v1h-1zM746 306h1v1h-1zM759 306h1v1h-1zM771 306h1v1h-1zM783 306h1v1h-1zM796 306h1v1h-1zM808 306h1v1h-1zM821 306h1v1h-1zM833 306h1v1h-1zM846 306h1v1h-1zM47 319h1v1h-1zM59 319h1v1h-1zM72 319h1v1h-1zM84 319h1v1h-1zM97 319h1v1h-1zM109 319h1v1h-1zM122 319h1v1h-1zM134 319h1v1h-1zM146 319h1v1h-1zM159 319h1v1h-1zM171 319h1v1h-1zM184 319h1v1h-1zM196 319h1v1h-1zM209 319h1v1h-1zM221 319h1v1h-1zM234 319h1v1h-1zM246 319h1v1h-1zM259 319h1v1h-1zM271 319h1v1h-1zM284 319h1v1h-1zM296 319h1v1h-1zM309 319h1v1h-1zM321 319h1v1h-1zM334 319h1v1h-1zM346 319h1v1h-1zM359 319h1v1h-1zM371 319h1v1h-1zM384 319h1v1h-1zM396 319h1v1h-1zM409 319h1v1h-1zM421 319h1v1h-1zM434 319h1v1h-1zM446 319h1v1h-1zM459 319h1v1h-1zM471 319h1v1h-1zM484 319h1v1h-1zM496 319h1v1h-1zM509 319h1v1h-1zM521 319h1v1h-1zM534 319h1v1h-1zM546 319h1v1h-1zM559 319h1v1h-1zM571 319h1v1h-1zM584 319h1v1h-1zM596 319h1v1h-1zM609 319h1v1h-1zM621 319h1v1h-1zM634 319h1v1h-1zM646 319h1v1h-1zM659 319h1v1h-1zM671 319h1v1h-1zM684 319h1v1h-1zM696 319h1v1h-1zM709 319h1v1h-1zM721 319h1v1h-1zM734 319h1v1h-1zM746 319h1v1h-1zM759 319h1v1h-1zM771 319h1v1h-1zM783 319h1v1h-1zM796 319h1v1h-1zM808 319h1v1h-1zM821 319h1v1h-1zM833 319h1v1h-1zM846 319h1v1h-1zM47 331h1v1h-1zM59 331h1v1h-1zM72 331h1v1h-1zM84 331h1v1h-1zM97 331h1v1h-1zM109 331h1v1h-1zM122 331h1v1h-1zM134 331h1v1h-1zM146 331h1v1h-1zM159 331h1v1h-1zM171 331h1v1h-1zM184 331h1v1h-1zM196 331h1v1h-1zM209 331h1v1h-1zM221 331h1v1h-1zM234 331h1v1h-1zM246 331h1v1h-1zM259 331h1v1h-1zM271 331h1v1h-1zM284 331h1v1h-1zM296 331h1v1h-1zM309 331h1v1h-1zM321 331h1v1h-1zM334 331h1v1h-1zM346 331h1v1h-1zM359 331h1v1h-1zM371 331h1v1h-1zM384 331h1v1h-1zM396 331h1v1h-1zM409 331h1v1h-1zM421 331h1v1h-1zM434 331h1v1h-1zM446 331h1v1h-1zM459 331h1v1h-1zM471 331h1v1h-1zM484 331h1v1h-1zM496 331h1v1h-1zM509 331h1v1h-1zM521 331h1v1h-1zM534 331h1v1h-1zM546 331h1v1h-1zM559 331h1v1h-1zM571 331h1v1h-1zM584 331h1v1h-1zM596 331h1v1h-1zM609 331h1v1h-1zM621 331h1v1h-1zM634 331h1v1h-1zM646 331h1v1h-1zM659 331h1v1h-1zM671 331h1v1h-1zM684 331h1v1h-1zM696 331h1v1h-1zM709 331h1v1h-1zM721 331h1v1h-1zM734 331h1v1h-1zM746 331h1v1h-1zM759 331h1v1h-1zM771 331h1v1h-1zM783 331h1v1h-1zM796 331h1v1h-1zM808 331h1v1h-1zM821 331h1v1h-1zM833 331h1v1h-1zM846 331h1v1h-1zM47 344h1v1h-1zM59 344h1v1h-1zM72 344h1v1h-1zM84 344h1v1h-1zM97 344h1v1h-1zM109 344h1v1h-1zM122 344h1v1h-1zM134 344h1v1h-1zM146 344h1v1h-1zM159 344h1v1h-1zM171 344h1v1h-1zM184 344h1v1h-1zM196 344h1v1h-1zM209 344h1v1h-1zM221 344h1v1h-1zM234 344h1v1h-1zM246 344h1v1h-1zM259 344h1v1h-1zM271 344h1v1h-1zM284 344h1v1h-1zM296 344h1v1h-1zM309 344h1v1h-1zM321 344h1v1h-1zM334 344h1v1h-1zM346 344h1v1h-1zM359 344h1v1h-1zM371 344h1v1h-1zM384 344h1v1h-1zM396 344h1v1h-1zM409 344h1v1h-1zM421 344h1v1h-1zM434 344h1v1h-1zM446 344h1v1h-1zM459 344h1v1h-1zM471 344h1v1h-1zM484 344h1v1h-1zM496 344h1v1h-1zM509 344h1v1h-1zM521 344h1v1h-1zM534 344h1v1h-1zM546 344h1v1h-1zM559 344h1v1h-1zM571 344h1v1h-1zM584 344h1v1h-1zM596 344h1v1h-1zM609 344h1v1h-1zM621 344h1v1h-1zM634 344h1v1h-1zM646 344h1v1h-1zM659 344h1v1h-1zM671 344h1v1h-1zM684 344h1v1h-1zM696 344h1v1h-1zM709 344h1v1h-1zM721 344h1v1h-1zM734 344h1v1h-1zM746 344h1v1h-1zM759 344h1v1h-1zM771 344h1v1h-1zM783 344h1v1h-1zM796 344h1v1h-1zM808 344h1v1h-1zM821 344h1v1h-1zM833 344h1v1h-1zM846 344h1v1h-1zM47 356h1v1h-1zM59 356h1v1h-1zM72 356h1v1h-1zM84 356h1v1h-1zM97 356h1v1h-1zM109 356h1v1h-1zM122 356h1v1h-1zM134 356h1v1h-1zM146 356h1v1h-1zM159 356h1v1h-1zM171 356h1v1h-1zM184 356h1v1h-1zM196 356h1v1h-1zM209 356h1v1h-1zM221 356h1v1h-1zM234 356h1v1h-1zM246 356h1v1h-1zM259 356h1v1h-1zM271 356h1v1h-1zM284 356h1v1h-1zM296 356h1v1h-1zM309 356h1v1h-1zM321 356h1v1h-1zM334 356h1v1h-1zM346 356h1v1h-1zM359 356h1v1h-1zM371 356h1v1h-1zM384 356h1v1h-1zM396 356h1v1h-1zM409 356h1v1h-1zM421 356h1v1h-1zM434 356h1v1h-1zM446 356h1v1h-1zM459 356h1v1h-1zM471 356h1v1h-1zM484 356h1v1h-1zM496 356h1v1h-1zM509 356h1v1h-1zM521 356h1v1h-1zM534 356h1v1h-1zM546 356h1v1h-1zM559 356h1v1h-1zM571 356h1v1h-1zM584 356h1v1h-1zM596 356h1v1h-1zM609 356h1v1h-1zM621 356h1v1h-1zM634 356h1v1h-1zM646 356h1v1h-1zM659 356h1v1h-1zM671 356h1v1h-1zM684 356h1v1h-1zM696 356h1v1h-1zM709 356h1v1h-1zM721 356h1v1h-1zM734 356h1v1h-1zM746 356h1v1h-1zM759 356h1v1h-1zM771 356h1v1h-1zM783 356h1v1h-1zM796 356h1v1h-1zM808 356h1v1h-1zM821 356h1v1h-1zM833 356h1v1h-1zM846 356h1v1h-1zM47 369h1v1h-1zM59 369h1v1h-1zM72 369h1v1h-1zM84 369h1v1h-1zM97 369h1v1h-1zM109 369h1v1h-1zM122 369h1v1h-1zM134 369h1v1h-1zM146 369h1v1h-1zM159 369h1v1h-1zM171 369h1v1h-1zM184 369h1v1h-1zM196 369h1v1h-1zM209 369h1v1h-1zM221 369h1v1h-1zM234 369h1v1h-1zM246 369h1v1h-1zM259 369h1v1h-1zM271 369h1v1h-1zM284 369h1v1h-1zM296 369h1v1h-1zM309 369h1v1h-1zM321 369h1v1h-1zM334 369h1v1h-1zM346 369h1v1h-1zM359 369h1v1h-1zM371 369h1v1h-1zM384 369h1v1h-1zM396 369h1v1h-1zM409 369h1v1h-1zM421 369h1v1h-1zM434 369h1v1h-1zM446 369h1v1h-1zM459 369h1v1h-1zM471 369h1v1h-1zM484 369h1v1h-1zM496 369h1v1h-1zM509 369h1v1h-1zM521 369h1v1h-1zM534 369h1v1h-1zM546 369h1v1h-1zM559 369h1v1h-1zM571 369h1v1h-1zM584 369h1v1h-1zM596 369h1v1h-1zM609 369h1v1h-1zM621 369h1v1h-1zM634 369h1v1h-1zM646 369h1v1h-1zM659 369h1v1h-1zM671 369h1v1h-1zM684 369h1v1h-1zM696 369h1v1h-1zM709 369h1v1h-1zM721 369h1v1h-1zM734 369h1v1h-1zM746 369h1v1h-1zM759 369h1v1h-1zM771 369h1v1h-1zM783 369h1v1h-1zM796 369h1v1h-1zM808 369h1v1h-1zM821 369h1v1h-1zM833 369h1v1h-1zM846 369h1v1h-1zM47 381h1v1h-1zM59 381h1v1h-1zM72 381h1v1h-1zM84 381h1v1h-1zM97 381h1v1h-1zM109 381h1v1h-1zM122 381h1v1h-1zM134 381h1v1h-1zM146 381h1v1h-1zM159 381h1v1h-1zM171 381h1v1h-1zM184 381h1v1h-1zM196 381h1v1h-1zM209 381h1v1h-1zM221 381h1v1h-1zM234 381h1v1h-1zM246 381h1v1h-1zM259 381h1v1h-1zM271 381h1v1h-1zM284 381h1v1h-1zM296 381h1v1h-1zM309 381h1v1h-1zM321 381h1v1h-1zM334 381h1v1h-1zM346 381h1v1h-1zM359 381h1v1h-1zM371 381h1v1h-1zM384 381h1v1h-1zM396 381h1v1h-1zM409 381h1v1h-1zM421 381h1v1h-1zM434 381h1v1h-1zM446 381h1v1h-1zM459 381h1v1h-1zM471 381h1v1h-1zM484 381h1v1h-1zM496 381h1v1h-1zM509 381h1v1h-1zM521 381h1v1h-1zM534 381h1v1h-1zM546 381h1v1h-1zM559 381h1v1h-1zM571 381h1v1h-1zM584 381h1v1h-1zM596 381h1v1h-1zM609 381h1v1h-1zM621 381h1v1h-1zM634 381h1v1h-1zM646 381h1v1h-1zM659 381h1v1h-1zM671 381h1v1h-1zM684 381h1v1h-1zM696 381h1v1h-1zM709 381h1v1h-1zM721 381h1v1h-1zM734 381h1v1h-1zM746 381h1v1h-1zM759 381h1v1h-1zM771 381h1v1h-1zM783 381h1v1h-1zM796 381h1v1h-1zM808 381h1v1h-1zM821 381h1v1h-1zM833 381h1v1h-1zM846 381h1v1h-1zM47 394h1v1h-1zM59 394h1v1h-1zM72 394h1v1h-1zM84 394h1v1h-1zM97 394h1v1h-1zM109 394h1v1h-1zM122 394h1v1h-1zM134 394h1v1h-1zM146 394h1v1h-1zM159 394h1v1h-1zM171 394h1v1h-1zM184 394h1v1h-1zM196 394h1v1h-1zM209 394h1v1h-1zM221 394h1v1h-1zM234 394h1v1h-1zM246 394h1v1h-1zM259 394h1v1h-1zM271 394h1v1h-1zM284 394h1v1h-1zM296 394h1v1h-1zM309 394h1v1h-1zM321 394h1v1h-1zM334 394h1v1h-1zM346 394h1v1h-1zM359 394h1v1h-1zM371 394h1v1h-1zM384 394h1v1h-1zM396 394h1v1h-1zM409 394h1v1h-1zM421 394h1v1h-1zM434 394h1v1h-1zM446 394h1v1h-1zM459 394h1v1h-1zM471 394h1v1h-1zM484 394h1v1h-1zM496 394h1v1h-1zM509 394h1v1h-1zM521 394h1v1h-1zM534 394h1v1h-1zM546 394h1v1h-1zM559 394h1v1h-1zM571 394h1v1h-1zM584 394h1v1h-1zM596 394h1v1h-1zM609 394h1v1h-1zM621 394h1v1h-1zM634 394h1v1h-1zM646 394h1v1h-1zM659 394h1v1h-1zM671 394h1v1h-1zM684 394h1v1h-1zM696 394h1v1h-1zM709 394h1v1h-1zM721 394h1v1h-1zM734 394h1v1h-1zM746 394h1v1h-1zM759 394h1v1h-1zM771 394h1v1h-1zM783 394h1v1h-1zM796 394h1v1h-1zM808 394h1v1h-1zM821 394h1v1h-1zM833 394h1v1h-1zM846 394h1v1h-1zM47 406h1v1h-1zM59 406h1v1h-1zM72 406h1v1h-1zM84 406h1v1h-1zM97 406h1v1h-1zM109 406h1v1h-1zM122 406h1v1h-1zM134 406h1v1h-1zM146 406h1v1h-1zM159 406h1v1h-1zM171 406h1v1h-1zM184 406h1v1h-1zM196 406h1v1h-1zM209 406h1v1h-1zM221 406h1v1h-1zM234 406h1v1h-1zM246 406h1v1h-1zM259 406h1v1h-1zM271 406h1v1h-1zM284 406h1v1h-1zM296 406h1v1h-1zM309 406h1v1h-1zM321 406h1v1h-1zM334 406h1v1h-1zM346 406h1v1h-1zM359 406h1v1h-1zM371 406h1v1h-1zM384 406h1v1h-1zM396 406h1v1h-1zM409 406h1v1h-1zM421 406h1v1h-1zM434 406h1v1h-1zM446 406h1v1h-1zM459 406h1v1h-1zM471 406h1v1h-1zM484 406h1v1h-1zM496 406h1v1h-1zM509 406h1v1h-1zM521 406h1v1h-1zM534 406h1v1h-1zM546 406h1v1h-1zM559 406h1v1h-1zM571 406h1v1h-1zM584 406h1v1h-1zM596 406h1v1h-1zM609 406h1v1h-1zM621 406h1v1h-1zM634 406h1v1h-1zM646 406h1v1h-1zM659 406h1v1h-1zM671 406h1v1h-1zM684 406h1v1h-1zM696 406h1v1h-1zM709 406h1v1h-1zM721 406h1v1h-1zM734 406h1v1h-1zM746 406h1v1h-1zM759 406h1v1h-1zM771 406h1v1h-1zM783 406h1v1h-1zM796 406h1v1h-1zM808 406h1v1h-1zM821 406h1v1h-1zM833 406h1v1h-1zM846 406h1v1h-1zM47 419h1v1h-1zM59 419h1v1h-1zM72 419h1v1h-1zM84 419h1v1h-1zM97 419h1v1h-1zM109 419h1v1h-1zM122 419h1v1h-1zM134 419h1v1h-1zM146 419h1v1h-1zM159 419h1v1h-1zM171 419h1v1h-1zM184 419h1v1h-1zM196 419h1v1h-1zM209 419h1v1h-1zM221 419h1v1h-1zM234 419h1v1h-1zM246 419h1v1h-1zM259 419h1v1h-1zM271 419h1v1h-1zM284 419h1v1h-1zM296 419h1v1h-1zM309 419h1v1h-1zM321 419h1v1h-1zM334 419h1v1h-1zM346 419h1v1h-1zM359 419h1v1h-1zM371 419h1v1h-1zM384 419h1v1h-1zM396 419h1v1h-1zM409 419h1v1h-1zM421 419h1v1h-1zM434 419h1v1h-1zM446 419h1v1h-1zM459 419h1v1h-1zM471 419h1v1h-1zM484 419h1v1h-1zM496 419h1v1h-1zM509 419h1v1h-1zM521 419h1v1h-1zM534 419h1v1h-1zM546 419h1v1h-1zM559 419h1v1h-1zM571 419h1v1h-1zM584 419h1v1h-1zM596 419h1v1h-1zM609 419h1v1h-1zM621 419h1v1h-1zM634 419h1v1h-1zM646 419h1v1h-1zM659 419h1v1h-1zM671 419h1v1h-1zM684 419h1v1h-1zM696 419h1v1h-1zM709 419h1v1h-1zM721 419h1v1h-1zM734 419h1v1h-1zM746 419h1v1h-1zM759 419h1v1h-1zM771 419h1v1h-1zM783 419h1v1h-1zM796 419h1v1h-1zM808 419h1v1h-1zM821 419h1v1h-1zM833 419h1v1h-1zM846 419h1v1h-1zM47 431h1v1h-1zM59 431h1v1h-1zM72 431h1v1h-1zM84 431h1v1h-1zM97 431h1v1h-1zM109 431h1v1h-1zM122 431h1v1h-1zM134 431h1v1h-1zM146 431h1v1h-1zM159 431h1v1h-1zM171 431h1v1h-1zM184 431h1v1h-1zM196 431h1v1h-1zM209 431h1v1h-1zM221 431h1v1h-1zM234 431h1v1h-1zM246 431h1v1h-1zM259 431h1v1h-1zM271 431h1v1h-1zM284 431h1v1h-1zM296 431h1v1h-1zM309 431h1v1h-1zM321 431h1v1h-1zM334 431h1v1h-1zM346 431h1v1h-1zM359 431h1v1h-1zM371 431h1v1h-1zM384 431h1v1h-1zM396 431h1v1h-1zM409 431h1v1h-1zM421 431h1v1h-1zM434 431h1v1h-1zM446 431h1v1h-1zM459 431h1v1h-1zM471 431h1v1h-1zM484 431h1v1h-1zM496 431h1v1h-1zM509 431h1v1h-1zM521 431h1v1h-1zM534 431h1v1h-1zM546 431h1v1h-1zM559 431h1v1h-1zM571 431h1v1h-1zM584 431h1v1h-1zM596 431h1v1h-1zM609 431h1v1h-1zM621 431h1v1h-1zM634 431h1v1h-1zM646 431h1v1h-1zM659 431h1v1h-1zM671 431h1v1h-1zM684 431h1v1h-1zM696 431h1v1h-1zM709 431h1v1h-1zM721 431h1v1h-1zM734 431h1v1h-1zM746 431h1v1h-1zM759 431h1v1h-1zM771 431h1v1h-1zM783 431h1v1h-1zM796 431h1v1h-1zM808 431h1v1h-1zM821 431h1v1h-1zM833 431h1v1h-1zM846 431h1v1h-1zM47 444h1v1h-1zM59 444h1v1h-1zM72 444h1v1h-1zM84 444h1v1h-1zM97 444h1v1h-1zM109 444h1v1h-1zM122 444h1v1h-1zM134 444h1v1h-1zM146 444h1v1h-1zM159 444h1v1h-1zM171 444h1v1h-1zM184 444h1v1h-1zM196 444h1v1h-1zM209 444h1v1h-1zM221 444h1v1h-1zM234 444h1v1h-1zM246 444h1v1h-1zM259 444h1v1h-1zM271 444h1v1h-1zM284 444h1v1h-1zM296 444h1v1h-1zM309 444h1v1h-1zM321 444h1v1h-1zM334 444h1v1h-1zM346 444h1v1h-1zM359 444h1v1h-1zM371 444h1v1h-1zM384 444h1v1h-1zM396 444h1v1h-1zM409 444h1v1h-1zM421 444h1v1h-1zM434 444h1v1h-1zM446 444h1v1h-1zM459 444h1v1h-1zM471 444h1v1h-1zM484 444h1v1h-1zM496 444h1v1h-1zM509 444h1v1h-1zM521 444h1v1h-1zM534 444h1v1h-1zM546 444h1v1h-1zM559 444h1v1h-1zM571 444h1v1h-1zM584 444h1v1h-1zM596 444h1v1h-1zM609 444h1v1h-1zM621 444h1v1h-1zM634 444h1v1h-1zM646 444h1v1h-1zM659 444h1v1h-1zM671 444h1v1h-1zM684 444h1v1h-1zM696 444h1v1h-1zM709 444h1v1h-1zM721 444h1v1h-1zM734 444h1v1h-1zM746 444h1v1h-1zM759 444h1v1h-1zM771 444h1v1h-1zM783 444h1v1h-1zM796 444h1v1h-1zM808 444h1v1h-1zM821 444h1v1h-1zM833 444h1v1h-1zM846 444h1v1h-1zM47 456h1v1h-1zM59 456h1v1h-1zM72 456h1v1h-1zM84 456h1v1h-1zM97 456h1v1h-1zM109 456h1v1h-1zM122 456h1v1h-1zM134 456h1v1h-1zM146 456h1v1h-1zM159 456h1v1h-1zM171 456h1v1h-1zM184 456h1v1h-1zM196 456h1v1h-1zM209 456h1v1h-1zM221 456h1v1h-1zM234 456h1v1h-1zM246 456h1v1h-1zM259 456h1v1h-1zM271 456h1v1h-1zM284 456h1v1h-1zM296 456h1v1h-1zM309 456h1v1h-1zM321 456h1v1h-1zM334 456h1v1h-1zM346 456h1v1h-1zM359 456h1v1h-1zM371 456h1v1h-1zM384 456h1v1h-1zM396 456h1v1h-1zM409 456h1v1h-1zM421 456h1v1h-1zM434 456h1v1h-1zM446 456h1v1h-1zM459 456h1v1h-1zM471 456h1v1h-1zM484 456h1v1h-1zM496 456h1v1h-1zM509 456h1v1h-1zM521 456h1v1h-1zM534 456h1v1h-1zM546 456h1v1h-1zM559 456h1v1h-1zM571 456h1v1h-1zM584 456h1v1h-1zM596 456h1v1h-1zM609 456h1v1h-1zM621 456h1v1h-1zM634 456h1v1h-1zM646 456h1v1h-1zM659 456h1v1h-1zM671 456h1v1h-1zM684 456h1v1h-1zM696 456h1v1h-1zM709 456h1v1h-1zM721 456h1v1h-1zM734 456h1v1h-1zM746 456h1v1h-1zM759 456h1v1h-1zM771 456h1v1h-1zM783 456h1v1h-1zM796 456h1v1h-1zM808 456h1v1h-1zM821 456h1v1h-1zM833 456h1v1h-1zM846 456h1v1h-1zM47 469h1v1h-1zM59 469h1v1h-1zM72 469h1v1h-1zM84 469h1v1h-1zM97 469h1v1h-1zM109 469h1v1h-1zM122 469h1v1h-1zM134 469h1v1h-1zM146 469h1v1h-1zM159 469h1v1h-1zM171 469h1v1h-1zM184 469h1v1h-1zM196 469h1v1h-1zM209 469h1v1h-1zM221 469h1v1h-1zM234 469h1v1h-1zM246 469h1v1h-1zM259 469h1v1h-1zM271 469h1v1h-1zM284 469h1v1h-1zM296 469h1v1h-1zM309 469h1v1h-1zM321 469h1v1h-1zM334 469h1v1h-1zM346 469h1v1h-1zM359 469h1v1h-1zM371 469h1v1h-1zM384 469h1v1h-1zM396 469h1v1h-1zM409 469h1v1h-1zM421 469h1v1h-1zM434 469h1v1h-1zM446 469h1v1h-1zM459 469h1v1h-1zM471 469h1v1h-1zM484 469h1v1h-1zM496 469h1v1h-1zM509 469h1v1h-1zM521 469h1v1h-1zM534 469h1v1h-1zM546 469h1v1h-1zM559 469h1v1h-1zM571 469h1v1h-1zM584 469h1v1h-1zM596 469h1v1h-1zM609 469h1v1h-1zM621 469h1v1h-1zM634 469h1v1h-1zM646 469h1v1h-1zM659 469h1v1h-1zM671 469h1v1h-1zM684 469h1v1h-1zM696 469h1v1h-1zM709 469h1v1h-1zM721 469h1v1h-1zM734 469h1v1h-1zM746 469h1v1h-1zM759 469h1v1h-1zM771 469h1v1h-1zM783 469h1v1h-1zM796 469h1v1h-1zM808 469h1v1h-1zM821 469h1v1h-1zM833 469h1v1h-1zM846 469h1v1h-1zM47 481h1v1h-1zM59 481h1v1h-1zM72 481h1v1h-1zM84 481h1v1h-1zM97 481h1v1h-1zM109 481h1v1h-1zM122 481h1v1h-1zM134 481h1v1h-1zM146 481h1v1h-1zM159 481h1v1h-1zM171 481h1v1h-1zM184 481h1v1h-1zM196 481h1v1h-1zM209 481h1v1h-1zM221 481h1v1h-1zM234 481h1v1h-1zM246 481h1v1h-1zM259 481h1v1h-1zM271 481h1v1h-1zM284 481h1v1h-1zM296 481h1v1h-1zM309 481h1v1h-1zM321 481h1v1h-1zM334 481h1v1h-1zM346 481h1v1h-1zM359 481h1v1h-1zM371 481h1v1h-1zM384 481h1v1h-1zM396 481h1v1h-1zM409 481h1v1h-1zM421 481h1v1h-1zM434 481h1v1h-1zM446 481h1v1h-1zM459 481h1v1h-1zM471 481h1v1h-1zM484 481h1v1h-1zM496 481h1v1h-1zM509 481h1v1h-1zM521 481h1v1h-1zM534 481h1v1h-1zM546 481h1v1h-1zM559 481h1v1h-1zM571 481h1v1h-1zM584 481h1v1h-1zM596 481h1v1h-1zM609 481h1v1h-1zM621 481h1v1h-1zM634 481h1v1h-1zM646 481h1v1h-1zM659 481h1v1h-1zM671 481h1v1h-1zM684 481h1v1h-1zM696 481h1v1h-1zM709 481h1v1h-1zM721 481h1v1h-1zM734 481h1v1h-1zM746 481h1v1h-1zM759 481h1v1h-1zM771 481h1v1h-1zM783 481h1v1h-1zM796 481h1v1h-1zM808 481h1v1h-1zM821 481h1v1h-1zM833 481h1v1h-1zM846 481h1v1h-1zM47 494h1v1h-1zM59 494h1v1h-1zM72 494h1v1h-1zM84 494h1v1h-1zM97 494h1v1h-1zM109 494h1v1h-1zM122 494h1v1h-1zM134 494h1v1h-1zM146 494h1v1h-1zM159 494h1v1h-1zM171 494h1v1h-1zM184 494h1v1h-1zM196 494h1v1h-1zM209 494h1v1h-1zM221 494h1v1h-1zM234 494h1v1h-1zM246 494h1v1h-1zM259 494h1v1h-1zM271 494h1v1h-1zM284 494h1v1h-1zM296 494h1v1h-1zM309 494h1v1h-1zM321 494h1v1h-1zM334 494h1v1h-1zM346 494h1v1h-1zM359 494h1v1h-1zM371 494h1v1h-1zM384 494h1v1h-1zM396 494h1v1h-1zM409 494h1v1h-1zM421 494h1v1h-1zM434 494h1v1h-1zM446 494h1v1h-1zM459 494h1v1h-1zM471 494h1v1h-1zM484 494h1v1h-1zM496 494h1v1h-1zM509 494h1v1h-1zM521 494h1v1h-1zM534 494h1v1h-1zM546 494h1v1h-1zM559 494h1v1h-1zM571 494h1v1h-1zM584 494h1v1h-1zM596 494h1v1h-1zM609 494h1v1h-1zM621 494h1v1h-1zM634 494h1v1h-1zM646 494h1v1h-1zM659 494h1v1h-1zM671 494h1v1h-1zM684 494h1v1h-1zM696 494h1v1h-1zM709 494h1v1h-1zM721 494h1v1h-1zM734 494h1v1h-1zM746 494h1v1h-1zM759 494h1v1h-1zM771 494h1v1h-1zM783 494h1v1h-1zM796 494h1v1h-1zM808 494h1v1h-1zM821 494h1v1h-1zM833 494h1v1h-1zM846 494h1v1h-1zM47 506h1v1h-1zM59 506h1v1h-1zM72 506h1v1h-1zM84 506h1v1h-1zM97 506h1v1h-1zM109 506h1v1h-1zM122 506h1v1h-1zM134 506h1v1h-1zM146 506h1v1h-1zM159 506h1v1h-1zM171 506h1v1h-1zM184 506h1v1h-1zM196 506h1v1h-1zM209 506h1v1h-1zM221 506h1v1h-1zM234 506h1v1h-1zM246 506h1v1h-1zM259 506h1v1h-1zM271 506h1v1h-1zM284 506h1v1h-1zM296 506h1v1h-1zM309 506h1v1h-1zM321 506h1v1h-1zM334 506h1v1h-1zM346 506h1v1h-1zM359 506h1v1h-1zM371 506h1v1h-1zM384 506h1v1h-1zM396 506h1v1h-1zM409 506h1v1h-1zM421 506h1v1h-1zM434 506h1v1h-1zM446 506h1v1h-1zM459 506h1v1h-1zM471 506h1v1h-1zM484 506h1v1h-1zM496 506h1v1h-1zM509 506h1v1h-1zM521 506h1v1h-1zM534 506h1v1h-1zM546 506h1v1h-1zM559 506h1v1h-1zM571 506h1v1h-1zM584 506h1v1h-1zM596 506h1v1h-1zM609 506h1v1h-1zM621 506h1v1h-1zM634 506h1v1h-1zM646 506h1v1h-1zM659 506h1v1h-1zM671 506h1v1h-1zM684 506h1v1h-1zM696 506h1v1h-1zM709 506h1v1h-1zM721 506h1v1h-1zM734 506h1v1h-1zM746 506h1v1h-1zM759 506h1v1h-1zM771 506h1v1h-1zM783 506h1v1h-1zM796 506h1v1h-1zM808 506h1v1h-1zM821 506h1v1h-1zM833 506h1v1h-1zM846 506h1v1h-1zM47 519h1v1h-1zM59 519h1v1h-1zM72 519h1v1h-1zM84 519h1v1h-1zM97 519h1v1h-1zM109 519h1v1h-1zM122 519h1v1h-1zM134 519h1v1h-1zM146 519h1v1h-1zM159 519h1v1h-1zM171 519h1v1h-1zM184 519h1v1h-1zM196 519h1v1h-1zM209 519h1v1h-1zM221 519h1v1h-1zM234 519h1v1h-1zM246 519h1v1h-1zM259 519h1v1h-1zM271 519h1v1h-1zM284 519h1v1h-1zM296 519h1v1h-1zM309 519h1v1h-1zM321 519h1v1h-1zM334 519h1v1h-1zM346 519h1v1h-1zM359 519h1v1h-1zM371 519h1v1h-1zM384 519h1v1h-1zM396 519h1v1h-1zM409 519h1v1h-1zM421 519h1v1h-1zM434 519h1v1h-1zM446 519h1v1h-1zM459 519h1v1h-1zM471 519h1v1h-1zM484 519h1v1h-1zM496 519h1v1h-1zM509 519h1v1h-1zM521 519h1v1h-1zM534 519h1v1h-1zM546 519h1v1h-1zM559 519h1v1h-1zM571 519h1v1h-1zM584 519h1v1h-1zM596 519h1v1h-1zM609 519h1v1h-1zM621 519h1v1h-1zM634 519h1v1h-1zM646 519h1v1h-1zM659 519h1v1h-1zM671 519h1v1h-1zM684 519h1v1h-1zM696 519h1v1h-1zM709 519h1v1h-1zM721 519h1v1h-1zM734 519h1v1h-1zM746 519h1v1h-1zM759 519h1v1h-1zM771 519h1v1h-1zM783 519h1v1h-1zM796 519h1v1h-1zM808 519h1v1h-1zM821 519h1v1h-1zM833 519h1v1h-1zM846 519h1v1h-1zM47 531h1v1h-1zM59 531h1v1h-1zM72 531h1v1h-1zM84 531h1v1h-1zM97 531h1v1h-1zM109 531h1v1h-1zM122 531h1v1h-1zM134 531h1v1h-1zM146 531h1v1h-1zM159 531h1v1h-1zM171 531h1v1h-1zM184 531h1v1h-1zM196 531h1v1h-1zM209 531h1v1h-1zM221 531h1v1h-1zM234 531h1v1h-1zM246 531h1v1h-1zM259 531h1v1h-1zM271 531h1v1h-1zM284 531h1v1h-1zM296 531h1v1h-1zM309 531h1v1h-1zM321 531h1v1h-1zM334 531h1v1h-1zM346 531h1v1h-1zM359 531h1v1h-1zM371 531h1v1h-1zM384 531h1v1h-1zM396 531h1v1h-1zM409 531h1v1h-1zM421 531h1v1h-1zM434 531h1v1h-1zM446 531h1v1h-1zM459 531h1v1h-1zM471 531h1v1h-1zM484 531h1v1h-1zM496 531h1v1h-1zM509 531h1v1h-1zM521 531h1v1h-1zM534 531h1v1h-1zM546 531h1v1h-1zM559 531h1v1h-1zM571 531h1v1h-1zM584 531h1v1h-1zM596 531h1v1h-1zM609 531h1v1h-1zM621 531h1v1h-1zM634 531h1v1h-1zM646 531h1v1h-1zM659 531h1v1h-1zM671 531h1v1h-1zM684 531h1v1h-1zM696 531h1v1h-1zM709 531h1v1h-1zM721 531h1v1h-1zM734 531h1v1h-1zM746 531h1v1h-1zM759 531h1v1h-1zM771 531h1v1h-1zM783 531h1v1h-1zM796 531h1v1h-1zM808 531h1v1h-1zM821 531h1v1h-1zM833 531h1v1h-1zM846 531h1v1h-1zM47 544h1v1h-1zM59 544h1v1h-1zM72 544h1v1h-1zM84 544h1v1h-1zM97 544h1v1h-1zM109 544h1v1h-1zM122 544h1v1h-1zM134 544h1v1h-1zM146 544h1v1h-1zM159 544h1v1h-1zM171 544h1v1h-1zM184 544h1v1h-1zM196 544h1v1h-1zM209 544h1v1h-1zM221 544h1v1h-1zM234 544h1v1h-1zM246 544h1v1h-1zM259 544h1v1h-1zM271 544h1v1h-1zM284 544h1v1h-1zM296 544h1v1h-1zM309 544h1v1h-1zM321 544h1v1h-1zM334 544h1v1h-1zM346 544h1v1h-1zM359 544h1v1h-1zM371 544h1v1h-1zM384 544h1v1h-1zM396 544h1v1h-1zM409 544h1v1h-1zM421 544h1v1h-1zM434 544h1v1h-1zM446 544h1v1h-1zM459 544h1v1h-1zM471 544h1v1h-1zM484 544h1v1h-1zM496 544h1v1h-1zM509 544h1v1h-1zM521 544h1v1h-1zM534 544h1v1h-1zM546 544h1v1h-1zM559 544h1v1h-1zM571 544h1v1h-1zM584 544h1v1h-1zM596 544h1v1h-1zM609 544h1v1h-1zM621 544h1v1h-1zM634 544h1v1h-1zM646 544h1v1h-1zM659 544h1v1h-1zM671 544h1v1h-1zM684 544h1v1h-1zM696 544h1v1h-1zM709 544h1v1h-1zM721 544h1v1h-1zM734 544h1v1h-1zM746 544h1v1h-1zM759 544h1v1h-1zM771 544h1v1h-1zM783 544h1v1h-1zM796 544h1v1h-1zM808 544h1v1h-1zM821 544h1v1h-1zM833 544h1v1h-1zM846 544h1v1h-1zM47 556h1v1h-1zM59 556h1v1h-1zM72 556h1v1h-1zM84 556h1v1h-1zM97 556h1v1h-1zM109 556h1v1h-1zM122 556h1v1h-1zM134 556h1v1h-1zM146 556h1v1h-1zM159 556h1v1h-1zM171 556h1v1h-1zM184 556h1v1h-1zM196 556h1v1h-1zM209 556h1v1h-1zM221 556h1v1h-1zM234 556h1v1h-1zM246 556h1v1h-1zM259 556h1v1h-1zM271 556h1v1h-1zM284 556h1v1h-1zM296 556h1v1h-1zM309 556h1v1h-1zM321 556h1v1h-1zM334 556h1v1h-1zM346 556h1v1h-1zM359 556h1v1h-1zM371 556h1v1h-1zM384 556h1v1h-1zM396 556h1v1h-1zM409 556h1v1h-1zM421 556h1v1h-1zM434 556h1v1h-1zM446 556h1v1h-1zM459 556h1v1h-1zM471 556h1v1h-1zM484 556h1v1h-1zM496 556h1v1h-1zM509 556h1v1h-1zM521 556h1v1h-1zM534 556h1v1h-1zM546 556h1v1h-1zM559 556h1v1h-1zM571 556h1v1h-1zM584 556h1v1h-1zM596 556h1v1h-1zM609 556h1v1h-1zM621 556h1v1h-1zM634 556h1v1h-1zM646 556h1v1h-1zM659 556h1v1h-1zM671 556h1v1h-1zM684 556h1v1h-1zM696 556h1v1h-1zM709 556h1v1h-1zM721 556h1v1h-1zM734 556h1v1h-1zM746 556h1v1h-1zM759 556h1v1h-1zM771 556h1v1h-1zM783 556h1v1h-1zM796 556h1v1h-1zM808 556h1v1h-1zM821 556h1v1h-1zM833 556h1v1h-1zM846 556h1v1h-1zM47 569h1v1h-1zM59 569h1v1h-1zM72 569h1v1h-1zM84 569h1v1h-1zM97 569h1v1h-1zM109 569h1v1h-1zM122 569h1v1h-1zM134 569h1v1h-1zM146 569h1v1h-1zM159 569h1v1h-1zM171 569h1v1h-1zM184 569h1v1h-1zM196 569h1v1h-1zM209 569h1v1h-1zM221 569h1v1h-1zM234 569h1v1h-1zM246 569h1v1h-1zM259 569h1v1h-1zM271 569h1v1h-1zM284 569h1v1h-1zM296 569h1v1h-1zM309 569h1v1h-1zM321 569h1v1h-1zM334 569h1v1h-1zM346 569h1v1h-1zM359 569h1v1h-1zM371 569h1v1h-1zM384 569h1v1h-1zM396 569h1v1h-1zM409 569h1v1h-1zM421 569h1v1h-1zM434 569h1v1h-1zM446 569h1v1h-1zM459 569h1v1h-1zM471 569h1v1h-1zM484 569h1v1h-1zM496 569h1v1h-1zM509 569h1v1h-1zM521 569h1v1h-1zM534 569h1v1h-1zM546 569h1v1h-1zM559 569h1v1h-1zM571 569h1v1h-1zM584 569h1v1h-1zM596 569h1v1h-1zM609 569h1v1h-1zM621 569h1v1h-1zM634 569h1v1h-1zM646 569h1v1h-1zM659 569h1v1h-1zM671 569h1v1h-1zM684 569h1v1h-1zM696 569h1v1h-1zM709 569h1v1h-1zM721 569h1v1h-1zM734 569h1v1h-1zM746 569h1v1h-1zM759 569h1v1h-1zM771 569h1v1h-1zM783 569h1v1h-1zM796 569h1v1h-1zM808 569h1v1h-1zM821 569h1v1h-1zM833 569h1v1h-1zM846 569h1v1h-1zM47 581h1v1h-1zM59 581h1v1h-1zM72 581h1v1h-1zM84 581h1v1h-1zM97 581h1v1h-1zM109 581h1v1h-1zM122 581h1v1h-1zM134 581h1v1h-1zM146 581h1v1h-1zM159 581h1v1h-1zM171 581h1v1h-1zM184 581h1v1h-1zM196 581h1v1h-1zM209 581h1v1h-1zM221 581h1v1h-1zM234 581h1v1h-1zM246 581h1v1h-1zM259 581h1v1h-1zM271 581h1v1h-1zM284 581h1v1h-1zM296 581h1v1h-1zM309 581h1v1h-1zM321 581h1v1h-1zM334 581h1v1h-1zM346 581h1v1h-1zM359 581h1v1h-1zM371 581h1v1h-1zM384 581h1v1h-1zM396 581h1v1h-1zM409 581h1v1h-1zM421 581h1v1h-1zM434 581h1v1h-1zM446 581h1v1h-1zM459 581h1v1h-1zM471 581h1v1h-1zM484 581h1v1h-1zM496 581h1v1h-1zM509 581h1v1h-1zM521 581h1v1h-1zM534 581h1v1h-1zM546 581h1v1h-1zM559 581h1v1h-1zM571 581h1v1h-1zM584 581h1v1h-1zM596 581h1v1h-1zM609 581h1v1h-1zM621 581h1v1h-1zM634 581h1v1h-1zM646 581h1v1h-1zM659 581h1v1h-1zM671 581h1v1h-1zM684 581h1v1h-1zM696 581h1v1h-1zM709 581h1v1h-1zM721 581h1v1h-1zM734 581h1v1h-1zM746 581h1v1h-1zM759 581h1v1h-1zM771 581h1v1h-1zM783 581h1v1h-1zM796 581h1v1h-1zM808 581h1v1h-1zM821 581h1v1h-1zM833 581h1v1h-1zM846 581h1v1h-1zM47 594h1v1h-1zM59 594h1v1h-1zM72 594h1v1h-1zM84 594h1v1h-1zM97 594h1v1h-1zM109 594h1v1h-1zM122 594h1v1h-1zM134 594h1v1h-1zM146 594h1v1h-1zM159 594h1v1h-1zM171 594h1v1h-1zM184 594h1v1h-1zM196 594h1v1h-1zM209 594h1v1h-1zM221 594h1v1h-1zM234 594h1v1h-1zM246 594h1v1h-1zM259 594h1v1h-1zM271 594h1v1h-1zM284 594h1v1h-1zM296 594h1v1h-1zM309 594h1v1h-1zM321 594h1v1h-1zM334 594h1v1h-1zM346 594h1v1h-1zM359 594h1v1h-1zM371 594h1v1h-1zM384 594h1v1h-1zM396 594h1v1h-1zM409 594h1v1h-1zM421 594h1v1h-1zM434 594h1v1h-1zM446 594h1v1h-1zM459 594h1v1h-1zM471 594h1v1h-1zM484 594h1v1h-1zM496 594h1v1h-1zM509 594h1v1h-1zM521 594h1v1h-1zM534 594h1v1h-1zM546 594h1v1h-1zM559 594h1v1h-1zM571 594h1v1h-1zM584 594h1v1h-1zM596 594h1v1h-1zM609 594h1v1h-1zM621 594h1v1h-1zM634 594h1v1h-1zM646 594h1v1h-1zM659 594h1v1h-1zM671 594h1v1h-1zM684 594h1v1h-1zM696 594h1v1h-1zM709 594h1v1h-1zM721 594h1v1h-1zM734 594h1v1h-1zM746 594h1v1h-1zM759 594h1v1h-1zM771 594h1v1h-1zM783 594h1v1h-1zM796 594h1v1h-1zM808 594h1v1h-1zM821 594h1v1h-1zM833 594h1v1h-1zM846 594h1v1h-1zM47 606h1v1h-1zM59 606h1v1h-1zM72 606h1v1h-1zM84 606h1v1h-1zM97 606h1v1h-1zM109 606h1v1h-1zM122 606h1v1h-1zM134 606h1v1h-1zM146 606h1v1h-1zM159 606h1v1h-1zM171 606h1v1h-1zM184 606h1v1h-1zM196 606h1v1h-1zM209 606h1v1h-1zM221 606h1v1h-1zM234 606h1v1h-1zM246 606h1v1h-1zM259 606h1v1h-1zM271 606h1v1h-1zM284 606h1v1h-1zM296 606h1v1h-1zM309 606h1v1h-1zM321 606h1v1h-1zM334 606h1v1h-1zM346 606h1v1h-1zM359 606h1v1h-1zM371 606h1v1h-1zM384 606h1v1h-1zM396 606h1v1h-1zM409 606h1v1h-1zM421 606h1v1h-1zM434 606h1v1h-1zM446 606h1v1h-1zM459 606h1v1h-1zM471 606h1v1h-1zM484 606h1v1h-1zM496 606h1v1h-1zM509 606h1v1h-1zM521 606h1v1h-1zM534 606h1v1h-1zM546 606h1v1h-1zM559 606h1v1h-1zM571 606h1v1h-1zM584 606h1v1h-1zM596 606h1v1h-1zM609 606h1v1h-1zM621 606h1v1h-1zM634 606h1v1h-1zM646 606h1v1h-1zM659 606h1v1h-1zM671 606h1v1h-1zM684 606h1v1h-1zM696 606h1v1h-1zM709 606h1v1h-1zM721 606h1v1h-1zM734 606h1v1h-1zM746 606h1v1h-1zM759 606h1v1h-1zM771 606h1v1h-1zM783 606h1v1h-1zM796 606h1v1h-1zM808 606h1v1h-1zM821 606h1v1h-1zM833 606h1v1h-1zM846 606h1v1h-1zM47 619h1v1h-1zM59 619h1v1h-1zM72 619h1v1h-1zM84 619h1v1h-1zM97 619h1v1h-1zM109 619h1v1h-1zM122 619h1v1h-1zM134 619h1v1h-1zM146 619h1v1h-1zM159 619h1v1h-1zM171 619h1v1h-1zM184 619h1v1h-1zM196 619h1v1h-1zM209 619h1v1h-1zM221 619h1v1h-1zM234 619h1v1h-1zM246 619h1v1h-1zM259 619h1v1h-1zM271 619h1v1h-1zM284 619h1v1h-1zM296 619h1v1h-1zM309 619h1v1h-1zM321 619h1v1h-1zM334 619h1v1h-1zM346 619h1v1h-1zM359 619h1v1h-1zM371 619h1v1h-1zM384 619h1v1h-1zM396 619h1v1h-1zM409 619h1v1h-1zM421 619h1v1h-1zM434 619h1v1h-1zM446 619h1v1h-1zM459 619h1v1h-1zM471 619h1v1h-1zM484 619h1v1h-1zM496 619h1v1h-1zM509 619h1v1h-1zM521 619h1v1h-1zM534 619h1v1h-1zM546 619h1v1h-1zM559 619h1v1h-1zM571 619h1v1h-1zM584 619h1v1h-1zM596 619h1v1h-1zM609 619h1v1h-1zM621 619h1v1h-1zM634 619h1v1h-1zM646 619h1v1h-1zM659 619h1v1h-1zM671 619h1v1h-1zM684 619h1v1h-1zM696 619h1v1h-1zM709 619h1v1h-1zM721 619h1v1h-1zM734 619h1v1h-1zM746 619h1v1h-1zM759 619h1v1h-1zM771 619h1v1h-1zM783 619h1v1h-1zM796 619h1v1h-1zM808 619h1v1h-1zM821 619h1v1h-1zM833 619h1v1h-1zM846 619h1v1h-1zM47 631h1v1h-1zM59 631h1v1h-1zM72 631h1v1h-1zM84 631h1v1h-1zM97 631h1v1h-1zM109 631h1v1h-1zM122 631h1v1h-1zM134 631h1v1h-1zM146 631h1v1h-1zM159 631h1v1h-1zM171 631h1v1h-1zM184 631h1v1h-1zM196 631h1v1h-1zM209 631h1v1h-1zM221 631h1v1h-1zM234 631h1v1h-1zM246 631h1v1h-1zM259 631h1v1h-1zM271 631h1v1h-1zM284 631h1v1h-1zM296 631h1v1h-1zM309 631h1v1h-1zM321 631h1v1h-1zM334 631h1v1h-1zM346 631h1v1h-1zM359 631h1v1h-1zM371 631h1v1h-1zM384 631h1v1h-1zM396 631h1v1h-1zM409 631h1v1h-1zM421 631h1v1h-1zM434 631h1v1h-1zM446 631h1v1h-1zM459 631h1v1h-1zM471 631h1v1h-1zM484 631h1v1h-1zM496 631h1v1h-1zM509 631h1v1h-1zM521 631h1v1h-1zM534 631h1v1h-1zM546 631h1v1h-1zM559 631h1v1h-1zM571 631h1v1h-1zM584 631h1v1h-1zM596 631h1v1h-1zM609 631h1v1h-1zM621 631h1v1h-1zM634 631h1v1h-1zM646 631h1v1h-1zM659 631h1v1h-1zM671 631h1v1h-1zM684 631h1v1h-1zM696 631h1v1h-1zM709 631h1v1h-1zM721 631h1v1h-1zM734 631h1v1h-1zM746 631h1v1h-1zM759 631h1v1h-1zM771 631h1v1h-1zM783 631h1v1h-1zM796 631h1v1h-1zM808 631h1v1h-1zM821 631h1v1h-1zM833 631h1v1h-1zM846 631h1v1h-1zM47 643h1v1h-1zM59 643h1v1h-1zM72 643h1v1h-1zM84 643h1v1h-1zM97 643h1v1h-1zM109 643h1v1h-1zM122 643h1v1h-1zM134 643h1v1h-1zM146 643h1v1h-1zM159 643h1v1h-1zM171 643h1v1h-1zM184 643h1v1h-1zM196 643h1v1h-1zM209 643h1v1h-1zM221 643h1v1h-1zM234 643h1v1h-1zM246 643h1v1h-1zM259 643h1v1h-1zM271 643h1v1h-1zM284 643h1v1h-1zM296 643h1v1h-1zM309 643h1v1h-1zM321 643h1v1h-1zM334 643h1v1h-1zM346 643h1v1h-1zM359 643h1v1h-1zM371 643h1v1h-1zM384 643h1v1h-1zM396 643h1v1h-1zM409 643h1v1h-1zM421 643h1v1h-1zM434 643h1v1h-1zM446 643h1v1h-1zM459 643h1v1h-1zM471 643h1v1h-1zM484 643h1v1h-1zM496 643h1v1h-1zM509 643h1v1h-1zM521 643h1v1h-1zM534 643h1v1h-1zM546 643h1v1h-1zM559 643h1v1h-1zM571 643h1v1h-1zM584 643h1v1h-1zM596 643h1v1h-1zM609 643h1v1h-1zM621 643h1v1h-1zM634 643h1v1h-1zM646 643h1v1h-1zM659 643h1v1h-1zM671 643h1v1h-1zM684 643h1v1h-1zM696 643h1v1h-1zM709 643h1v1h-1zM721 643h1v1h-1zM734 643h1v1h-1zM746 643h1v1h-1zM759 643h1v1h-1zM771 643h1v1h-1zM783 643h1v1h-1zM796 643h1v1h-1zM808 643h1v1h-1zM821 643h1v1h-1zM833 643h1v1h-1zM846 643h1v1h-1zM47 656h1v1h-1zM59 656h1v1h-1zM72 656h1v1h-1zM84 656h1v1h-1zM97 656h1v1h-1zM109 656h1v1h-1zM122 656h1v1h-1zM134 656h1v1h-1zM146 656h1v1h-1zM159 656h1v1h-1zM171 656h1v1h-1zM184 656h1v1h-1zM196 656h1v1h-1zM209 656h1v1h-1zM221 656h1v1h-1zM234 656h1v1h-1zM246 656h1v1h-1zM259 656h1v1h-1zM271 656h1v1h-1zM284 656h1v1h-1zM296 656h1v1h-1zM309 656h1v1h-1zM321 656h1v1h-1zM334 656h1v1h-1zM346 656h1v1h-1zM359 656h1v1h-1zM371 656h1v1h-1zM384 656h1v1h-1zM396 656h1v1h-1zM409 656h1v1h-1zM421 656h1v1h-1zM434 656h1v1h-1zM446 656h1v1h-1zM459 656h1v1h-1zM471 656h1v1h-1zM484 656h1v1h-1zM496 656h1v1h-1zM509 656h1v1h-1zM521 656h1v1h-1zM534 656h1v1h-1zM546 656h1v1h-1zM559 656h1v1h-1zM571 656h1v1h-1zM584 656h1v1h-1zM596 656h1v1h-1zM609 656h1v1h-1zM621 656h1v1h-1zM634 656h1v1h-1zM646 656h1v1h-1zM659 656h1v1h-1zM671 656h1v1h-1zM684 656h1v1h-1zM696 656h1v1h-1zM709 656h1v1h-1zM721 656h1v1h-1zM734 656h1v1h-1zM746 656h1v1h-1zM759 656h1v1h-1zM771 656h1v1h-1zM783 656h1v1h-1zM796 656h1v1h-1zM808 656h1v1h-1zM821 656h1v1h-1zM833 656h1v1h-1zM846 656h1v1h-1zM47 668h1v1h-1zM59 668h1v1h-1zM72 668h1v1h-1zM84 668h1v1h-1zM97 668h1v1h-1zM109 668h1v1h-1zM122 668h1v1h-1zM134 668h1v1h-1zM146 668h1v1h-1zM159 668h1v1h-1zM171 668h1v1h-1zM184 668h1v1h-1zM196 668h1v1h-1zM209 668h1v1h-1zM221 668h1v1h-1zM234 668h1v1h-1zM246 668h1v1h-1zM259 668h1v1h-1zM271 668h1v1h-1zM284 668h1v1h-1zM296 668h1v1h-1zM309 668h1v1h-1zM321 668h1v1h-1zM334 668h1v1h-1zM346 668h1v1h-1zM359 668h1v1h-1zM371 668h1v1h-1zM384 668h1v1h-1zM396 668h1v1h-1zM409 668h1v1h-1zM421 668h1v1h-1zM434 668h1v1h-1zM446 668h1v1h-1zM459 668h1v1h-1zM471 668h1v1h-1zM484 668h1v1h-1zM496 668h1v1h-1zM509 668h1v1h-1zM521 668h1v1h-1zM534 668h1v1h-1zM546 668h1v1h-1zM559 668h1v1h-1zM571 668h1v1h-1zM584 668h1v1h-1zM596 668h1v1h-1zM609 668h1v1h-1zM621 668h1v1h-1zM634 668h1v1h-1zM646 668h1v1h-1zM659 668h1v1h-1zM671 668h1v1h-1zM684 668h1v1h-1zM696 668h1v1h-1zM709 668h1v1h-1zM721 668h1v1h-1zM734 668h1v1h-1zM746 668h1v1h-1zM759 668h1v1h-1zM771 668h1v1h-1zM783 668h1v1h-1zM796 668h1v1h-1zM808 668h1v1h-1zM821 668h1v1h-1zM833 668h1v1h-1zM846 668h1v1h-1z" fill="#a8a8a8"/>
<path d="M122.5 115V671M38 631.5H853" stroke="#585858" stroke-width="1"/>
<rect x="122.5" y="237.5" width="467" height="394" fill="none" stroke="#f0f000" stroke-width="1"/>
<path d="M211 256 L420 256" stroke="#00aa00" stroke-width="2.0" fill="none" stroke-linejoin="round" stroke-linecap="round"/>
<path d="M402.5 250 L446 250" stroke="#00aa00" stroke-width="2.0" fill="none" stroke-linejoin="round" stroke-linecap="round"/>
<path d="M396 256 L402.5 250" stroke="#00aa00" stroke-width="2.0" fill="none" stroke-linejoin="round" stroke-linecap="round"/>
<path d="M208.6 256 L202.6 262.9 L202.6 281.1 L190.3 294" stroke="#00aa00" stroke-width="2.0" fill="none" stroke-linejoin="round" stroke-linecap="round"/>
<path d="M202.6 281.1 L214.5 291.4 L214.5 310" stroke="#00aa00" stroke-width="2.0" fill="none" stroke-linejoin="round" stroke-linecap="round"/>
<path d="M211.8 270 L227.4 287 L290.2 287" stroke="#00aa00" stroke-width="2.0" fill="none" stroke-linejoin="round" stroke-linecap="round"/>
<path d="M241.9 268.3 L252.6 281.1 L302 281.1 L309 287" stroke="#00aa00" stroke-width="2.0" fill="none" stroke-linejoin="round" stroke-linecap="round"/>
<path d="M272 268.3 L277.3 275.2 L313.3 275.2 L321.9 283 L321.9 287" stroke="#00aa00" stroke-width="2.0" fill="none" stroke-linejoin="round" stroke-linecap="round"/>
<path d="M303.1 268.3 L304 269.3 L321.4 269.3 L333.7 282.2 L334.2 287" stroke="#00aa00" stroke-width="2.0" fill="none" stroke-linejoin="round" stroke-linecap="round"/>
<path d="M334.8 268.3 L339.6 269.3 L347.1 275.2 L346.6 287" stroke="#00aa00" stroke-width="2.0" fill="none" stroke-linejoin="round" stroke-linecap="round"/>
<path d="M365.9 268.3 L359 281.1 L359.5 287" stroke="#00aa00" stroke-width="2.0" fill="none" stroke-linejoin="round" stroke-linecap="round"/>
<path d="M396.7 268 L396.7 281.7 L391 286.9 L371.8 287" stroke="#00aa00" stroke-width="2.0" fill="none" stroke-linejoin="round" stroke-linecap="round"/>
<path d="M295 297.3 L298.8 293.5 L420 293.5" stroke="#00aa00" stroke-width="2.0" fill="none" stroke-linejoin="round" stroke-linecap="round"/>
<path d="M427.4 274.2 L415 275.4 L397.8 294.2" stroke="#00aa00" stroke-width="2.0" fill="none" stroke-linejoin="round" stroke-linecap="round"/>
<path d="M372.8 326 L396.2 349.6 L427.5 349.6" stroke="#00aa00" stroke-width="2.0" fill="none" stroke-linejoin="round" stroke-linecap="round"/>
<path d="M371.7 362 L427.5 362" stroke="#00aa00" stroke-width="2.0" fill="none" stroke-linejoin="round" stroke-linecap="round"/>
<path d="M414.4 310 L414.4 337.6 L422.25 344.4 L440.5 344.4 L446.4 350 L446.4 385" stroke="#00aa00" stroke-width="2.0" fill="none" stroke-linejoin="round" stroke-linecap="round"/>
<path d="M427.5 349.6 L434.75 350.6 L440.5 355.8 L440.5 374 L435.3 380.8 L391 380.8 L383.7 387.8 L383.7 406.6 L379 411.8 L371.7 411.8" stroke="#00aa00" stroke-width="2.0" fill="none" stroke-linejoin="round" stroke-linecap="round"/>
<path d="M427.5 393.5 L415 393.5 L408.7 400.3 L408.7 456.3 L415.1 461.5 L434 461.5 L440.5 468 L440.5 506.4 L434 513 L427.5 511.6" stroke="#00aa00" stroke-width="2.0" fill="none" stroke-linejoin="round" stroke-linecap="round"/>
<path d="M427.5 393.5 L441 393.5 L446 388 L446 381" stroke="#00aa00" stroke-width="2.0" fill="none" stroke-linejoin="round" stroke-linecap="round"/>
<path d="M371.7 429 L371.7 449.8 L381.1 459.3" stroke="#00aa00" stroke-width="2.0" fill="none" stroke-linejoin="round" stroke-linecap="round"/>
<path d="M370 468.6 L427.5 468.6" stroke="#00aa00" stroke-width="2.0" fill="none" stroke-linejoin="round" stroke-linecap="round"/>
<path d="M370 481 L427.5 481" stroke="#00aa00" stroke-width="2.0" fill="none" stroke-linejoin="round" stroke-linecap="round"/>
<path d="M189 463.8 L264 463.8 L268 460" stroke="#00aa00" stroke-width="2.0" fill="none" stroke-linejoin="round" stroke-linecap="round"/>
<path d="M189 477.9 L269.2 477.9 L278 470.2 L278 459" stroke="#00aa00" stroke-width="2.0" fill="none" stroke-linejoin="round" stroke-linecap="round"/>
<path d="M189 483.7 L206.5 483.7 L216 494" stroke="#00aa00" stroke-width="2.0" fill="none" stroke-linejoin="round" stroke-linecap="round"/>
<path d="M189 491.9 L194.8 491.9 L203.6 500 L203.6 512.4 L221.75 531.2 L221.75 561.6 L234 574.5 L259.3 574.5" stroke="#00aa00" stroke-width="2.0" fill="none" stroke-linejoin="round" stroke-linecap="round"/>
<path d="M189 504.2 L197.1 512.4 L197.1 556.4 L227.6 587.4 L259.3 587.4" stroke="#00aa00" stroke-width="2.0" fill="none" stroke-linejoin="round" stroke-linecap="round"/>
<path d="M221 486.6 L230.5 486.6" stroke="#00aa00" stroke-width="2.0" fill="none" stroke-linejoin="round" stroke-linecap="round"/>
<path d="M221 511.9 L230 511.9" stroke="#00aa00" stroke-width="2.0" fill="none" stroke-linejoin="round" stroke-linecap="round"/>
<path d="M278.6 488.4 L283.9 493.7 L283.9 524.2 L278.6 524.2 L264.5 537 L264.5 606.2 L278 619 L522 619" stroke="#00aa00" stroke-width="2.0" fill="none" stroke-linejoin="round" stroke-linecap="round"/>
<path d="M237 516 L237 520.6 L247 531.2 L247 556.4" stroke="#00aa00" stroke-width="2.0" fill="none" stroke-linejoin="round" stroke-linecap="round"/>
<path d="M296.8 459 L296.8 556.4" stroke="#00aa00" stroke-width="2.0" fill="none" stroke-linejoin="round" stroke-linecap="round"/>
<path d="M302.6 459 L302.9 480.8 L318.2 496.6 L318.2 581.6 L313.5 586.8" stroke="#00aa00" stroke-width="2.0" fill="none" stroke-linejoin="round" stroke-linecap="round"/>
<path d="M308.8 459 L308.8 477.9 L325.2 493.7 L325.2 545" stroke="#00aa00" stroke-width="2.0" fill="none" stroke-linejoin="round" stroke-linecap="round"/>
<path d="M321.7 459 L321.7 469 L334 481.4" stroke="#00aa00" stroke-width="2.0" fill="none" stroke-linejoin="round" stroke-linecap="round"/>
<path d="M365.6 481.4 L420 481.4" stroke="#00aa00" stroke-width="2.0" fill="none" stroke-linejoin="round" stroke-linecap="round"/>
<path d="M346.9 459 L346.9 531.2 L352.7 537 L403.1 537 L409.6 544.6 L409.6 581 L414.3 586.8" stroke="#00aa00" stroke-width="2.0" fill="none" stroke-linejoin="round" stroke-linecap="round"/>
<path d="M376.2 455 L389.7 469 L427.5 469" stroke="#00aa00" stroke-width="2.0" fill="none" stroke-linejoin="round" stroke-linecap="round"/>
<path d="M408.4 455 L415.4 462 L420 462" stroke="#00aa00" stroke-width="2.0" fill="none" stroke-linejoin="round" stroke-linecap="round"/>
<path d="M272.1 556.4 L272.1 600.3 L283.9 612 L415 612" stroke="#00aa00" stroke-width="2.0" fill="none" stroke-linejoin="round" stroke-linecap="round"/>
<path d="M272.1 581.6 L276.8 587.4" stroke="#00aa00" stroke-width="2.0" fill="none" stroke-linejoin="round" stroke-linecap="round"/>
<path d="M283.9 540 L284.5 556.4" stroke="#00aa00" stroke-width="2.0" fill="none" stroke-linejoin="round" stroke-linecap="round"/>
<path d="M272.7 530 L264.5 537.6" stroke="#00aa00" stroke-width="2.0" fill="none" stroke-linejoin="round" stroke-linecap="round"/>
<path d="M340.4 586.8 L427.9 586.8" stroke="#00aa00" stroke-width="2.0" fill="none" stroke-linejoin="round" stroke-linecap="round"/>
<path d="M324.6 545 L324.6 594.5 L327.5 599.7 L427.9 599.7" stroke="#00aa00" stroke-width="2.0" fill="none" stroke-linejoin="round" stroke-linecap="round"/>
<path d="M408.8 550 L408.8 580.6 L413.4 586.7" stroke="#00aa00" stroke-width="2.0" fill="none" stroke-linejoin="round" stroke-linecap="round"/>
<path d="M427.5 286.68 L459 286.68" stroke="#00aa00" stroke-width="2.0" fill="none" stroke-linejoin="round" stroke-linecap="round"/>
<path d="M427.5 299.16 L459 299.16" stroke="#00aa00" stroke-width="2.0" fill="none" stroke-linejoin="round" stroke-linecap="round"/>
<path d="M427.5 311.64 L459 311.64" stroke="#00aa00" stroke-width="2.0" fill="none" stroke-linejoin="round" stroke-linecap="round"/>
<path d="M427.5 324.12 L427.5 336.6" stroke="#00aa00" stroke-width="2.0" fill="none" stroke-linejoin="round" stroke-linecap="round"/>
<path d="M459 312.2 L459 342.08 L465.2 349.08 L490.4 349.08" stroke="#00aa00" stroke-width="2.0" fill="none" stroke-linejoin="round" stroke-linecap="round"/>
<path d="M465.2 349.08 L459 356.08 L459 393.2" stroke="#00aa00" stroke-width="2.0" fill="none" stroke-linejoin="round" stroke-linecap="round"/>
<path d="M427.5 405.98 L459 405.98" stroke="#00aa00" stroke-width="2.0" fill="none" stroke-linejoin="round" stroke-linecap="round"/>
<path d="M427.5 418.46 L459 418.46" stroke="#00aa00" stroke-width="2.0" fill="none" stroke-linejoin="round" stroke-linecap="round"/>
<path d="M427.5 430.94 L459 430.94" stroke="#00aa00" stroke-width="2.0" fill="none" stroke-linejoin="round" stroke-linecap="round"/>
<path d="M427.5 443.42 L427.5 455.9" stroke="#00aa00" stroke-width="2.0" fill="none" stroke-linejoin="round" stroke-linecap="round"/>
<path d="M459 431.5 L459 461.38 L465.2 468.38 L490.4 468.38" stroke="#00aa00" stroke-width="2.0" fill="none" stroke-linejoin="round" stroke-linecap="round"/>
<path d="M465.2 468.38 L459 475.38 L459 512.5" stroke="#00aa00" stroke-width="2.0" fill="none" stroke-linejoin="round" stroke-linecap="round"/>
<path d="M427.5 524.48 L459 524.48" stroke="#00aa00" stroke-width="2.0" fill="none" stroke-linejoin="round" stroke-linecap="round"/>
<path d="M427.5 536.96 L459 536.96" stroke="#00aa00" stroke-width="2.0" fill="none" stroke-linejoin="round" stroke-linecap="round"/>
<path d="M427.5 549.44 L459 549.44" stroke="#00aa00" stroke-width="2.0" fill="none" stroke-linejoin="round" stroke-linecap="round"/>
<path d="M427.5 561.92 L427.5 574.4" stroke="#00aa00" stroke-width="2.0" fill="none" stroke-linejoin="round" stroke-linecap="round"/>
<path d="M459 550 L459 579.88 L465.2 586.88 L490.4 586.88" stroke="#00aa00" stroke-width="2.0" fill="none" stroke-linejoin="round" stroke-linecap="round"/>
<path d="M465.2 586.88 L459 593.88 L459 605.7 L454.2 612.2" stroke="#00aa00" stroke-width="2.0" fill="none" stroke-linejoin="round" stroke-linecap="round"/>
<path d="M459 612.5 L459 612.5" stroke="#00aa00" stroke-width="2.0" fill="none" stroke-linejoin="round" stroke-linecap="round"/>
<path d="M459 361.5 L459 381 L459 400" stroke="#00aa00" stroke-width="2.0" fill="none" stroke-linejoin="round" stroke-linecap="round"/>
<path d="M459 480 L459 520" stroke="#00aa00" stroke-width="2.0" fill="none" stroke-linejoin="round" stroke-linecap="round"/>
<path d="M465 262 L465 281 L459 287" stroke="#00aa00" stroke-width="2.0" fill="none" stroke-linejoin="round" stroke-linecap="round"/>
<path d="M477.8 262.5 L477.8 281 L485 287 L490.4 286.7" stroke="#00aa00" stroke-width="2.0" fill="none" stroke-linejoin="round" stroke-linecap="round"/>
<path d="M259.3 574.5 L324.6 574.5" stroke="#c00000" stroke-width="1.8" fill="none" stroke-linejoin="round" stroke-linecap="round"/>
<path d="M259.3 587.4 L276.2 587.4" stroke="#c00000" stroke-width="1.8" fill="none" stroke-linejoin="round" stroke-linecap="round"/>
<path d="M276.2 587.4 L313.5 586.8" stroke="#b8b800" stroke-width="1.8" fill="none" stroke-linejoin="round" stroke-linecap="round"/>
<path d="M313.5 586.8 L340.4 586.8" stroke="#c00000" stroke-width="1.8" fill="none" stroke-linejoin="round" stroke-linecap="round"/>
<path d="M334 481.4 L365.6 481.4" stroke="#c00000" stroke-width="1.8" fill="none" stroke-linejoin="round" stroke-linecap="round"/>
<circle cx="259.3" cy="574.5" r="2.6" fill="#000" stroke="#e8e8e8" stroke-width="1.1"/>
<circle cx="324.6" cy="574.5" r="2.6" fill="#000" stroke="#e8e8e8" stroke-width="1.1"/>
<circle cx="259.3" cy="587.4" r="2.6" fill="#000" stroke="#e8e8e8" stroke-width="1.1"/>
<circle cx="340.4" cy="586.8" r="2.6" fill="#000" stroke="#e8e8e8" stroke-width="1.1"/>
<circle cx="334" cy="481.4" r="2.8" fill="#e0e0e0"/>
<circle cx="365.6" cy="481.4" r="2.8" fill="#e0e0e0"/>
<circle cx="371.7" cy="362" r="2.8" fill="#c8c8c8"/><circle cx="371.7" cy="411.8" r="2.8" fill="#c8c8c8"/>
<path d="M491 274 L507 255.5 L570 255.5 L577.6 263 L577.6 611 L570 618.6 L547 618.6" stroke="#00aa00" stroke-width="6.0" fill="none" stroke-linejoin="round" stroke-linecap="round"/>
<path d="M490.4 286.7 L503 285.6 L521.5 268.3 L557 268.3 L565 276 L565 357.2 L556.7 365.8 L506 365.8 L490.4 361.6" stroke="#00aa00" stroke-width="6.0" fill="none" stroke-linejoin="round" stroke-linecap="round"/>
<path d="M490.4 299.16 L516.9 299.16 L533.3 281.6 L547 281.6" stroke="#00aa00" stroke-width="6.0" fill="none" stroke-linejoin="round" stroke-linecap="round"/>
<path d="M490.4 311.64 L521.6 311.64 L528.6 306.5 L547 306.5" stroke="#00aa00" stroke-width="6.0" fill="none" stroke-linejoin="round" stroke-linecap="round"/>
<path d="M490.4 324.12 L521 324.12 L534 331.4 L547 331.4" stroke="#00aa00" stroke-width="6.0" fill="none" stroke-linejoin="round" stroke-linecap="round"/>
<path d="M490.4 336.6 L511.8 336.6 L534 356.3 L547 356.3" stroke="#00aa00" stroke-width="6.0" fill="none" stroke-linejoin="round" stroke-linecap="round"/>
<path d="M490.4 393.5 L505.2 390.5 L533.3 375.5 L573 375.5 L577.6 371.5" stroke="#00aa00" stroke-width="6.0" fill="none" stroke-linejoin="round" stroke-linecap="round"/>
<path d="M521.5 387.5 L498.4 377.5 L484 381.5 L478.3 388.5 L478.3 399.5 L484 406 L490.4 406" stroke="#00aa00" stroke-width="6.0" fill="none" stroke-linejoin="round" stroke-linecap="round"/>
<path d="M526 386.5 L557 386.5 L565 394.5 L565 476.5 L556.7 485.1 L506 485.1 L490.4 480.9" stroke="#00aa00" stroke-width="6.0" fill="none" stroke-linejoin="round" stroke-linecap="round"/>
<path d="M490.4 418.46 L516.9 418.46 L533.3 400.9 L547 400.9" stroke="#00aa00" stroke-width="6.0" fill="none" stroke-linejoin="round" stroke-linecap="round"/>
<path d="M490.4 430.94 L521.6 430.94 L528.6 425.8 L547 425.8" stroke="#00aa00" stroke-width="6.0" fill="none" stroke-linejoin="round" stroke-linecap="round"/>
<path d="M490.4 443.42 L521 443.42 L534 450.7 L547 450.7" stroke="#00aa00" stroke-width="6.0" fill="none" stroke-linejoin="round" stroke-linecap="round"/>
<path d="M490.4 455.9 L511.8 455.9 L534 475.6 L547 475.6" stroke="#00aa00" stroke-width="6.0" fill="none" stroke-linejoin="round" stroke-linecap="round"/>
<path d="M490.4 512 L505.2 509 L533.3 494 L573 494 L577.6 490" stroke="#00aa00" stroke-width="6.0" fill="none" stroke-linejoin="round" stroke-linecap="round"/>
<path d="M521.5 506 L498.4 496 L484 500 L478.3 507 L478.3 518 L484 524.5 L490.4 524.5" stroke="#00aa00" stroke-width="6.0" fill="none" stroke-linejoin="round" stroke-linecap="round"/>
<path d="M526 505 L557 505 L565 513 L565 596.4 L554.4 604.7 L528.4 604.7 L522 619" stroke="#00aa00" stroke-width="6.0" fill="none" stroke-linejoin="round" stroke-linecap="round"/>
<path d="M490.4 536.96 L516.9 536.96 L533.3 519.4 L547 519.4" stroke="#00aa00" stroke-width="6.0" fill="none" stroke-linejoin="round" stroke-linecap="round"/>
<path d="M490.4 549.44 L521.6 549.44 L528.6 544.3 L547 544.3" stroke="#00aa00" stroke-width="6.0" fill="none" stroke-linejoin="round" stroke-linecap="round"/>
<path d="M490.4 561.92 L521 561.92 L534 569.2 L547 569.2" stroke="#00aa00" stroke-width="6.0" fill="none" stroke-linejoin="round" stroke-linecap="round"/>
<path d="M490.4 574.4 L511.8 574.4 L534 594.1 L547 594.1" stroke="#00aa00" stroke-width="6.0" fill="none" stroke-linejoin="round" stroke-linecap="round"/>
<path d="M490.4 599.4 L507 599.4 L522 612 L522 619" stroke="#00aa00" stroke-width="6.0" fill="none" stroke-linejoin="round" stroke-linecap="round"/>
<circle cx="209.1" cy="262.4" r="12" fill="none" stroke="#00a4a4" stroke-width="0.9"/>
<path d="M200.6 250.5h17" stroke="#00a4a4" stroke-width="1.2"/>
<path d="M210.1 255l7 7M212.1 253.5l7 7M214.1 252l7 7M200.1 263l7 7M201.6 261l7 7M203.1 259l7 7" stroke="#e0e0e0" stroke-width="0.8"/>
<circle cx="208.6" cy="256" r="4" fill="#9c9c10"/><circle cx="209.6" cy="268.3" r="4.3" fill="#9c9c10"/>
<circle cx="208.6" cy="256" r="1.8" fill="#000"/><circle cx="209.6" cy="268.3" r="1.6" fill="#303000"/>
<path d="M206.6 262.4h5M209.1 259.9v5" stroke="#1828ff" stroke-width="1"/><path d="M203.6 247.4h5M206.1 244.9v5" stroke="#1828ff" stroke-width="1"/><path d="M215.6 247.4h5M218.1 244.9v5" stroke="#1828ff" stroke-width="1"/>
<text x="204.6" y="246.2" transform="rotate(-90 204.6 246.2)" font-family="Liberation Mono" font-size="10.14" fill="#e0e0e0" textLength="20" lengthAdjust="spacingAndGlyphs">LED7</text>
<text x="215.6" y="246.2" transform="rotate(-90 215.6 246.2)" font-family="Liberation Mono" font-size="10.14" fill="#e0e0e0" textLength="15.1" lengthAdjust="spacingAndGlyphs">BLU</text>
<circle cx="240.28" cy="262.4" r="12" fill="none" stroke="#00a4a4" stroke-width="0.9"/>
<path d="M231.78 250.5h17" stroke="#00a4a4" stroke-width="1.2"/>
<path d="M241.28 255l7 7M243.28 253.5l7 7M245.28 252l7 7M231.28 263l7 7M232.78 261l7 7M234.28 259l7 7" stroke="#e0e0e0" stroke-width="0.8"/>
<circle cx="239.78" cy="256" r="4" fill="#9c9c10"/><circle cx="240.78" cy="268.3" r="4.3" fill="#9c9c10"/>
<circle cx="239.78" cy="256" r="1.8" fill="#000"/><circle cx="240.78" cy="268.3" r="1.6" fill="#303000"/>
<path d="M237.78 262.4h5M240.28 259.9v5" stroke="#1828ff" stroke-width="1"/><path d="M234.78 247.4h5M237.28 244.9v5" stroke="#1828ff" stroke-width="1"/><path d="M246.78 247.4h5M249.28 244.9v5" stroke="#1828ff" stroke-width="1"/>
<text x="235.78" y="246.2" transform="rotate(-90 235.78 246.2)" font-family="Liberation Mono" font-size="10.14" fill="#e0e0e0" textLength="20" lengthAdjust="spacingAndGlyphs">LED6</text>
<text x="246.78" y="246.2" transform="rotate(-90 246.78 246.2)" font-family="Liberation Mono" font-size="10.14" fill="#e0e0e0" textLength="15.1" lengthAdjust="spacingAndGlyphs">YLW</text>
<circle cx="271.46" cy="262.4" r="12" fill="none" stroke="#00a4a4" stroke-width="0.9"/>
<path d="M262.96 250.5h17" stroke="#00a4a4" stroke-width="1.2"/>
<path d="M272.46 255l7 7M274.46 253.5l7 7M276.46 252l7 7M262.46 263l7 7M263.96 261l7 7M265.46 259l7 7" stroke="#e0e0e0" stroke-width="0.8"/>
<circle cx="270.96" cy="256" r="4" fill="#9c9c10"/><circle cx="271.96" cy="268.3" r="4.3" fill="#9c9c10"/>
<circle cx="270.96" cy="256" r="1.8" fill="#000"/><circle cx="271.96" cy="268.3" r="1.6" fill="#303000"/>
<path d="M268.96 262.4h5M271.46 259.9v5" stroke="#1828ff" stroke-width="1"/><path d="M265.96 247.4h5M268.46 244.9v5" stroke="#1828ff" stroke-width="1"/><path d="M277.96 247.4h5M280.46 244.9v5" stroke="#1828ff" stroke-width="1"/>
<text x="266.96" y="246.2" transform="rotate(-90 266.96 246.2)" font-family="Liberation Mono" font-size="10.14" fill="#e0e0e0" textLength="20" lengthAdjust="spacingAndGlyphs">LED5</text>
<text x="277.96" y="246.2" transform="rotate(-90 277.96 246.2)" font-family="Liberation Mono" font-size="10.14" fill="#e0e0e0" textLength="15.1" lengthAdjust="spacingAndGlyphs">GRN</text>
<circle cx="302.64" cy="262.4" r="12" fill="none" stroke="#00a4a4" stroke-width="0.9"/>
<path d="M294.14 250.5h17" stroke="#00a4a4" stroke-width="1.2"/>
<path d="M303.64 255l7 7M305.64 253.5l7 7M307.64 252l7 7M293.64 263l7 7M295.14 261l7 7M296.64 259l7 7" stroke="#e0e0e0" stroke-width="0.8"/>
<circle cx="302.14" cy="256" r="4" fill="#9c9c10"/><circle cx="303.14" cy="268.3" r="4.3" fill="#9c9c10"/>
<circle cx="302.14" cy="256" r="1.8" fill="#000"/><circle cx="303.14" cy="268.3" r="1.6" fill="#303000"/>
<path d="M300.14 262.4h5M302.64 259.9v5" stroke="#1828ff" stroke-width="1"/><path d="M297.14 247.4h5M299.64 244.9v5" stroke="#1828ff" stroke-width="1"/><path d="M309.14 247.4h5M311.64 244.9v5" stroke="#1828ff" stroke-width="1"/>
<text x="298.14" y="246.2" transform="rotate(-90 298.14 246.2)" font-family="Liberation Mono" font-size="10.14" fill="#e0e0e0" textLength="20" lengthAdjust="spacingAndGlyphs">LED4</text>
<text x="309.14" y="246.2" transform="rotate(-90 309.14 246.2)" font-family="Liberation Mono" font-size="10.14" fill="#e0e0e0" textLength="15.1" lengthAdjust="spacingAndGlyphs">RED</text>
<circle cx="333.82" cy="262.4" r="12" fill="none" stroke="#00a4a4" stroke-width="0.9"/>
<path d="M325.32 250.5h17" stroke="#00a4a4" stroke-width="1.2"/>
<path d="M334.82 255l7 7M336.82 253.5l7 7M338.82 252l7 7M324.82 263l7 7M326.32 261l7 7M327.82 259l7 7" stroke="#e0e0e0" stroke-width="0.8"/>
<circle cx="333.32" cy="256" r="4" fill="#9c9c10"/><circle cx="334.32" cy="268.3" r="4.3" fill="#9c9c10"/>
<circle cx="333.32" cy="256" r="1.8" fill="#000"/><circle cx="334.32" cy="268.3" r="1.6" fill="#303000"/>
<path d="M331.32 262.4h5M333.82 259.9v5" stroke="#1828ff" stroke-width="1"/><path d="M328.32 247.4h5M330.82 244.9v5" stroke="#1828ff" stroke-width="1"/><path d="M340.32 247.4h5M342.82 244.9v5" stroke="#1828ff" stroke-width="1"/>
<text x="329.32" y="246.2" transform="rotate(-90 329.32 246.2)" font-family="Liberation Mono" font-size="10.14" fill="#e0e0e0" textLength="20" lengthAdjust="spacingAndGlyphs">LED3</text>
<text x="340.32" y="246.2" transform="rotate(-90 340.32 246.2)" font-family="Liberation Mono" font-size="10.14" fill="#e0e0e0" textLength="15.1" lengthAdjust="spacingAndGlyphs">YLW</text>
<circle cx="365" cy="262.4" r="12" fill="none" stroke="#00a4a4" stroke-width="0.9"/>
<path d="M356.5 250.5h17" stroke="#00a4a4" stroke-width="1.2"/>
<path d="M366 255l7 7M368 253.5l7 7M370 252l7 7M356 263l7 7M357.5 261l7 7M359 259l7 7" stroke="#e0e0e0" stroke-width="0.8"/>
<circle cx="364.5" cy="256" r="4" fill="#9c9c10"/><circle cx="365.5" cy="268.3" r="4.3" fill="#9c9c10"/>
<circle cx="364.5" cy="256" r="1.8" fill="#000"/><circle cx="365.5" cy="268.3" r="1.6" fill="#303000"/>
<path d="M362.5 262.4h5M365 259.9v5" stroke="#1828ff" stroke-width="1"/><path d="M359.5 247.4h5M362 244.9v5" stroke="#1828ff" stroke-width="1"/><path d="M371.5 247.4h5M374 244.9v5" stroke="#1828ff" stroke-width="1"/>
<text x="360.5" y="246.2" transform="rotate(-90 360.5 246.2)" font-family="Liberation Mono" font-size="10.14" fill="#e0e0e0" textLength="20" lengthAdjust="spacingAndGlyphs">LED2</text>
<text x="371.5" y="246.2" transform="rotate(-90 371.5 246.2)" font-family="Liberation Mono" font-size="10.14" fill="#e0e0e0" textLength="15.1" lengthAdjust="spacingAndGlyphs">GRN</text>
<circle cx="396.18" cy="262.4" r="12" fill="none" stroke="#00a4a4" stroke-width="0.9"/>
<path d="M387.68 250.5h17" stroke="#00a4a4" stroke-width="1.2"/>
<path d="M397.18 255l7 7M399.18 253.5l7 7M401.18 252l7 7M387.18 263l7 7M388.68 261l7 7M390.18 259l7 7" stroke="#e0e0e0" stroke-width="0.8"/>
<circle cx="395.68" cy="256" r="4" fill="#9c9c10"/><circle cx="396.68" cy="268.3" r="4.3" fill="#9c9c10"/>
<circle cx="395.68" cy="256" r="1.8" fill="#000"/><circle cx="396.68" cy="268.3" r="1.6" fill="#303000"/>
<path d="M393.68 262.4h5M396.18 259.9v5" stroke="#1828ff" stroke-width="1"/><path d="M390.68 247.4h5M393.18 244.9v5" stroke="#1828ff" stroke-width="1"/><path d="M402.68 247.4h5M405.18 244.9v5" stroke="#1828ff" stroke-width="1"/>
<text x="391.68" y="246.2" transform="rotate(-90 391.68 246.2)" font-family="Liberation Mono" font-size="10.14" fill="#e0e0e0" textLength="20" lengthAdjust="spacingAndGlyphs">LED1</text>
<text x="402.68" y="246.2" transform="rotate(-90 402.68 246.2)" font-family="Liberation Mono" font-size="10.14" fill="#e0e0e0" textLength="15.1" lengthAdjust="spacingAndGlyphs">RED</text>
<circle cx="290.2" cy="287.3" r="4.6" fill="#9c9c10"/>
<circle cx="290.2" cy="300" r="4.5" fill="#9c9c10" stroke="#00a4a4" stroke-width="0.9"/>
<rect x="288.6" y="287" width="3.2" height="13" fill="#d8d8d8"/>
<circle cx="309" cy="287.3" r="4.6" fill="#9c9c10"/>
<circle cx="309" cy="300" r="4.5" fill="#9c9c10" stroke="#00a4a4" stroke-width="0.9"/>
<rect x="307.4" y="287" width="3.2" height="13" fill="#d8d8d8"/>
<circle cx="321.9" cy="287.3" r="4.6" fill="#9c9c10"/>
<circle cx="321.9" cy="300" r="4.5" fill="#9c9c10" stroke="#00a4a4" stroke-width="0.9"/>
<rect x="320.3" y="287" width="3.2" height="13" fill="#d8d8d8"/>
<circle cx="334.2" cy="287.3" r="4.6" fill="#9c9c10"/>
<circle cx="334.2" cy="300" r="4.5" fill="#9c9c10" stroke="#00a4a4" stroke-width="0.9"/>
<rect x="332.6" y="287" width="3.2" height="13" fill="#d8d8d8"/>
<circle cx="346.6" cy="287.3" r="4.6" fill="#9c9c10"/>
<circle cx="346.6" cy="300" r="4.5" fill="#9c9c10" stroke="#00a4a4" stroke-width="0.9"/>
<rect x="345" y="287" width="3.2" height="13" fill="#d8d8d8"/>
<circle cx="359.5" cy="287.3" r="4.6" fill="#9c9c10"/>
<circle cx="359.5" cy="300" r="4.5" fill="#9c9c10" stroke="#00a4a4" stroke-width="0.9"/>
<rect x="357.9" y="287" width="3.2" height="13" fill="#d8d8d8"/>
<circle cx="371.8" cy="287.3" r="4.6" fill="#9c9c10"/>
<circle cx="371.8" cy="300" r="4.5" fill="#9c9c10" stroke="#00a4a4" stroke-width="0.9"/>
<rect x="370.2" y="287" width="3.2" height="13" fill="#d8d8d8"/>
<text x="287" y="297" transform="rotate(-90 287 297)" font-family="Liberation Mono" font-size="10.14" fill="#e0e0e0" textLength="9.6" lengthAdjust="spacingAndGlyphs">R7</text>
<text x="302.5" y="297" transform="rotate(-90 302.5 297)" font-family="Liberation Mono" font-size="10.14" fill="#e0e0e0" textLength="14.8" lengthAdjust="spacingAndGlyphs">68R</text>
<text x="320" y="294" transform="rotate(-90 320 294)" font-family="Liberation Mono" font-size="10.14" fill="#e0e0e0" textLength="20" lengthAdjust="spacingAndGlyphs">150R</text>
<text x="332.4" y="294" transform="rotate(-90 332.4 294)" font-family="Liberation Mono" font-size="10.14" fill="#e0e0e0" textLength="20" lengthAdjust="spacingAndGlyphs">150R</text>
<text x="344.7" y="294" transform="rotate(-90 344.7 294)" font-family="Liberation Mono" font-size="10.14" fill="#e0e0e0" textLength="20" lengthAdjust="spacingAndGlyphs">150R</text>
<text x="357.6" y="294" transform="rotate(-90 357.6 294)" font-family="Liberation Mono" font-size="10.14" fill="#e0e0e0" textLength="20" lengthAdjust="spacingAndGlyphs">150R</text>
<text x="370" y="294" transform="rotate(-90 370 294)" font-family="Liberation Mono" font-size="10.14" fill="#e0e0e0" textLength="20" lengthAdjust="spacingAndGlyphs">150R</text>
<text x="383.4" y="294" transform="rotate(-90 383.4 294)" font-family="Liberation Mono" font-size="10.14" fill="#e0e0e0" textLength="20" lengthAdjust="spacingAndGlyphs">150R</text>
<text x="394.5" y="241" font-family="Liberation Mono" font-size="10.14" fill="#e0e0e0" textLength="25.2" lengthAdjust="spacingAndGlyphs">100uf</text>
<text x="409" y="266" font-family="Liberation Mono" font-size="10.14" fill="#e0e0e0" textLength="9.6" lengthAdjust="spacingAndGlyphs">C4</text>
<circle cx="434.2" cy="250.4" r="15.5" fill="none" stroke="#00a4a4" stroke-width="0.9"/>
<ellipse cx="427.5" cy="250.4" rx="5.5" ry="4.8" fill="#9c9c10"/><ellipse cx="427.5" cy="250.4" rx="4.3" ry="3.6" fill="none" stroke="#6c6c00" stroke-width="0.7"/><circle cx="427.5" cy="250.4" r="1.3" fill="#202000"/><ellipse cx="440.5" cy="250.4" rx="5.5" ry="4.8" fill="#9c9c10"/><ellipse cx="440.5" cy="250.4" rx="4.3" ry="3.6" fill="none" stroke="#6c6c00" stroke-width="0.7"/><circle cx="440.5" cy="250.4" r="1.3" fill="#202000"/>
<rect x="429.5" y="244.7" width="9" height="12" fill="none" stroke="#e0e0e0" stroke-width="1.3"/><rect x="433" y="244.7" width="2" height="12" fill="#e0e0e0"/>
<text x="416" y="256" font-family="Liberation Mono" font-size="10.14" fill="#e0e0e0" textLength="14.8" lengthAdjust="spacingAndGlyphs">U$1</text>
<rect x="452.5" y="241.5" width="53" height="21" fill="none" stroke="#00a4a4" stroke-width="0.9"/>
<rect x="452.5" y="257" width="53" height="6" fill="#00a8ac"/>
<ellipse cx="465" cy="248.8" rx="5.6" ry="6.6" fill="#9c9c10"/><rect x="461.5" y="252" width="7" height="6" fill="#d8d8d8"/><circle cx="465" cy="248.5" r="1.8" fill="#000"/>
<ellipse cx="477.8" cy="248.8" rx="5.6" ry="6.6" fill="#9c9c10"/><rect x="474.3" y="252" width="7" height="6" fill="#d8d8d8"/><circle cx="477.8" cy="248.5" r="1.8" fill="#000"/>
<ellipse cx="489.5" cy="248.8" rx="5.6" ry="6.6" fill="#9c9c10"/><rect x="486" y="252" width="7" height="6" fill="#d8d8d8"/><circle cx="489.5" cy="248.5" r="1.8" fill="#000"/>
<text x="481.5" y="231.5" font-family="Liberation Mono" font-size="10.14" fill="#e0e0e0" textLength="20" lengthAdjust="spacingAndGlyphs">7805</text>
<text x="489.5" y="239.5" font-family="Liberation Mono" font-size="10.14" fill="#e0e0e0" textLength="14.8" lengthAdjust="spacingAndGlyphs">IC1</text>
<text x="475" y="255" font-family="Liberation Mono" font-size="10.14" fill="#e0e0e0" textLength="56.4" lengthAdjust="spacingAndGlyphs">POLOLU_4988</text>
<text x="469" y="246" font-family="Liberation Mono" font-size="10.14" fill="#e0e0e0" textLength="4.4" lengthAdjust="spacingAndGlyphs">3</text><text x="482" y="246" font-family="Liberation Mono" font-size="10.14" fill="#e0e0e0" textLength="4.4" lengthAdjust="spacingAndGlyphs">2</text><text x="495" y="246" font-family="Liberation Mono" font-size="10.14" fill="#e0e0e0" textLength="4.4" lengthAdjust="spacingAndGlyphs">1</text>
<rect x="415.5" y="262.4" width="88" height="112.4" fill="none" stroke="#00a4a4" stroke-width="1"/>
<ellipse cx="427.5" cy="274.2" rx="6.2" ry="4.8" fill="none" stroke="#9c9c10" stroke-width="0.9"/>
<ellipse cx="428" cy="274.2" rx="5" ry="4" fill="#9c9c10"/><circle cx="427.5" cy="274.2" r="1.4" fill="#000"/>
<ellipse cx="427.5" cy="286.68" rx="6.2" ry="4.8" fill="none" stroke="#9c9c10" stroke-width="0.9"/>
<ellipse cx="428" cy="286.68" rx="5" ry="4" fill="#9c9c10"/><circle cx="427.5" cy="286.68" r="1.4" fill="#000"/>
<ellipse cx="427.5" cy="299.16" rx="6.2" ry="4.8" fill="none" stroke="#9c9c10" stroke-width="0.9"/>
<ellipse cx="428" cy="299.16" rx="5" ry="4" fill="#9c9c10"/><circle cx="427.5" cy="299.16" r="1.4" fill="#000"/>
<ellipse cx="427.5" cy="311.64" rx="6.2" ry="4.8" fill="none" stroke="#9c9c10" stroke-width="0.9"/>
<ellipse cx="428" cy="311.64" rx="5" ry="4" fill="#9c9c10"/><circle cx="427.5" cy="311.64" r="1.4" fill="#000"/>
<ellipse cx="427.5" cy="324.12" rx="6.2" ry="4.8" fill="none" stroke="#9c9c10" stroke-width="0.9"/>
<ellipse cx="428" cy="324.12" rx="5" ry="4" fill="#9c9c10"/><circle cx="427.5" cy="324.12" r="1.4" fill="#000"/>
<ellipse cx="427.5" cy="336.6" rx="6.2" ry="4.8" fill="none" stroke="#9c9c10" stroke-width="0.9"/>
<ellipse cx="428" cy="336.6" rx="5" ry="4" fill="#9c9c10"/><circle cx="427.5" cy="336.6" r="1.4" fill="#000"/>
<ellipse cx="427.5" cy="349.08" rx="6.2" ry="4.8" fill="none" stroke="#9c9c10" stroke-width="0.9"/>
<ellipse cx="428" cy="349.08" rx="5" ry="4" fill="#9c9c10"/><circle cx="427.5" cy="349.08" r="1.4" fill="#000"/>
<ellipse cx="427.5" cy="361.56" rx="6.2" ry="4.8" fill="none" stroke="#9c9c10" stroke-width="0.9"/>
<ellipse cx="428" cy="361.56" rx="5" ry="4" fill="#9c9c10"/><circle cx="427.5" cy="361.56" r="1.4" fill="#000"/>
<ellipse cx="490.4" cy="274.2" rx="6.2" ry="4.8" fill="none" stroke="#9c9c10" stroke-width="0.9"/>
<ellipse cx="490.9" cy="274.2" rx="5" ry="4" fill="#9c9c10"/><circle cx="490.4" cy="274.2" r="1.4" fill="#000"/>
<ellipse cx="490.4" cy="286.68" rx="6.2" ry="4.8" fill="none" stroke="#9c9c10" stroke-width="0.9"/>
<ellipse cx="490.9" cy="286.68" rx="5" ry="4" fill="#9c9c10"/><circle cx="490.4" cy="286.68" r="1.4" fill="#000"/>
<ellipse cx="490.4" cy="299.16" rx="6.2" ry="4.8" fill="none" stroke="#9c9c10" stroke-width="0.9"/>
<ellipse cx="490.9" cy="299.16" rx="5" ry="4" fill="#9c9c10"/><circle cx="490.4" cy="299.16" r="1.4" fill="#000"/>
<ellipse cx="490.4" cy="311.64" rx="6.2" ry="4.8" fill="none" stroke="#9c9c10" stroke-width="0.9"/>
<ellipse cx="490.9" cy="311.64" rx="5" ry="4" fill="#9c9c10"/><circle cx="490.4" cy="311.64" r="1.4" fill="#000"/>
<ellipse cx="490.4" cy="324.12" rx="6.2" ry="4.8" fill="none" stroke="#9c9c10" stroke-width="0.9"/>
<ellipse cx="490.9" cy="324.12" rx="5" ry="4" fill="#9c9c10"/><circle cx="490.4" cy="324.12" r="1.4" fill="#000"/>
<ellipse cx="490.4" cy="336.6" rx="6.2" ry="4.8" fill="none" stroke="#9c9c10" stroke-width="0.9"/>
<ellipse cx="490.9" cy="336.6" rx="5" ry="4" fill="#9c9c10"/><circle cx="490.4" cy="336.6" r="1.4" fill="#000"/>
<ellipse cx="490.4" cy="349.08" rx="6.2" ry="4.8" fill="none" stroke="#9c9c10" stroke-width="0.9"/>
<ellipse cx="490.9" cy="349.08" rx="5" ry="4" fill="#9c9c10"/><circle cx="490.4" cy="349.08" r="1.4" fill="#000"/>
<ellipse cx="490.4" cy="361.56" rx="6.2" ry="4.8" fill="none" stroke="#9c9c10" stroke-width="0.9"/>
<ellipse cx="490.9" cy="361.56" rx="5" ry="4" fill="#9c9c10"/><circle cx="490.4" cy="361.56" r="1.4" fill="#000"/>
<path d="M443.5 281h19l3 3v31l-3 3h-19l-3-3v-31z" fill="none" stroke="#00a4a4" stroke-width="0.9"/>
<circle cx="447" cy="287.2" r="4.8" fill="#9c9c10"/><rect x="445.2" y="285.4" width="3.6" height="3.6" fill="#e4e4e4"/>
<circle cx="459.1" cy="287.2" r="4.8" fill="#9c9c10"/><rect x="457.3" y="285.4" width="3.6" height="3.6" fill="#e4e4e4"/>
<circle cx="447" cy="299.7" r="4.8" fill="#9c9c10"/><rect x="445.2" y="297.9" width="3.6" height="3.6" fill="#e4e4e4"/>
<circle cx="459.1" cy="299.7" r="4.8" fill="#9c9c10"/><rect x="457.3" y="297.9" width="3.6" height="3.6" fill="#e4e4e4"/>
<circle cx="447" cy="312.2" r="4.8" fill="#9c9c10"/><rect x="445.2" y="310.4" width="3.6" height="3.6" fill="#e4e4e4"/>
<circle cx="459.1" cy="312.2" r="4.8" fill="#9c9c10"/><rect x="457.3" y="310.4" width="3.6" height="3.6" fill="#e4e4e4"/>
<text x="474.5" y="296.2" transform="rotate(-90 474.5 296.2)" font-family="Liberation Mono" font-size="10.14" fill="#e0e0e0" textLength="14.8" lengthAdjust="spacingAndGlyphs">SV1</text>
<text x="433" y="284.2" transform="rotate(-90 433 284.2)" font-family="Liberation Mono" font-size="10.14" fill="#e0e0e0" textLength="4.4" lengthAdjust="spacingAndGlyphs">1</text>
<text x="455" y="320.2" transform="rotate(-90 455 320.2)" font-family="Liberation Mono" font-size="10.14" fill="#e0e0e0" textLength="4.4" lengthAdjust="spacingAndGlyphs">6</text>
<circle cx="521.5" cy="267.9" r="4" fill="#9c9c10"/>
<rect x="514.5" y="258.4" width="14" height="3" fill="#d8d8d8"/><rect x="514.5" y="263.4" width="14" height="3" fill="#d8d8d8"/>
<circle cx="521.5" cy="261.9" r="15.5" fill="none" stroke="#00a4a4" stroke-width="0.9"/>
<text x="513" y="307.2" transform="rotate(-90 513 307.2)" font-family="Liberation Mono" font-size="10.14" fill="#e0e0e0" textLength="25.2" lengthAdjust="spacingAndGlyphs">100uf</text>
<text x="538" y="282.2" transform="rotate(-90 538 282.2)" font-family="Liberation Mono" font-size="10.14" fill="#e0e0e0" textLength="9.6" lengthAdjust="spacingAndGlyphs">C1</text>
<text x="535" y="279.2" transform="rotate(-90 535 279.2)" font-family="Liberation Mono" font-size="10.14" fill="#e0e0e0" textLength="4.4" lengthAdjust="spacingAndGlyphs">1</text>
<path d="M543.75 275.35H550.25L554 279.1V284.1L550.25 287.85H543.75L540 284.1V279.1Z" fill="none" stroke="#00a4a4" stroke-width="0.8"/>
<circle cx="547" cy="281.6" r="6" fill="#9c9c10"/><rect x="545" y="279.6" width="4" height="4" fill="#e4e4e4"/>
<path d="M543.75 287.8H550.25L554 291.55V296.55L550.25 300.3H543.75L540 296.55V291.55Z" fill="none" stroke="#00a4a4" stroke-width="0.8"/>
<circle cx="547" cy="294.05" r="6" fill="#9c9c10"/><rect x="545" y="292.05" width="4" height="4" fill="#e4e4e4"/>
<path d="M543.75 300.25H550.25L554 304V309L550.25 312.75H543.75L540 309V304Z" fill="none" stroke="#00a4a4" stroke-width="0.8"/>
<circle cx="547" cy="306.5" r="6" fill="#9c9c10"/><rect x="545" y="304.5" width="4" height="4" fill="#e4e4e4"/>
<path d="M543.75 312.7H550.25L554 316.45V321.45L550.25 325.2H543.75L540 321.45V316.45Z" fill="none" stroke="#00a4a4" stroke-width="0.8"/>
<circle cx="547" cy="318.95" r="6" fill="#9c9c10"/><rect x="545" y="316.95" width="4" height="4" fill="#e4e4e4"/>
<path d="M543.75 325.15H550.25L554 328.9V333.9L550.25 337.65H543.75L540 333.9V328.9Z" fill="none" stroke="#00a4a4" stroke-width="0.8"/>
<circle cx="547" cy="331.4" r="6" fill="#9c9c10"/><rect x="545" y="329.4" width="4" height="4" fill="#e4e4e4"/>
<path d="M543.75 337.6H550.25L554 341.35V346.35L550.25 350.1H543.75L540 346.35V341.35Z" fill="none" stroke="#00a4a4" stroke-width="0.8"/>
<circle cx="547" cy="343.85" r="6" fill="#9c9c10"/><rect x="545" y="341.85" width="4" height="4" fill="#e4e4e4"/>
<path d="M543.75 350.05H550.25L554 353.8V358.8L550.25 362.55H543.75L540 358.8V353.8Z" fill="none" stroke="#00a4a4" stroke-width="0.8"/>
<circle cx="547" cy="356.3" r="6" fill="#9c9c10"/><rect x="545" y="354.3" width="4" height="4" fill="#e4e4e4"/>
<text x="544.5" y="297.55" font-family="Liberation Mono" font-size="8.7" fill="#ffffff" textLength="3.7" lengthAdjust="spacingAndGlyphs">2</text>
<text x="544.5" y="322.45" font-family="Liberation Mono" font-size="8.7" fill="#ffffff" textLength="3.7" lengthAdjust="spacingAndGlyphs">4</text>
<text x="544.5" y="347.35" font-family="Liberation Mono" font-size="8.7" fill="#ffffff" textLength="3.7" lengthAdjust="spacingAndGlyphs">6</text>
<text x="562" y="296.2" transform="rotate(-90 562 296.2)" font-family="Liberation Mono" font-size="10.14" fill="#e0e0e0" textLength="14.8" lengthAdjust="spacingAndGlyphs">SV4</text>
<text font-weight="bold" x="568.5" y="327.2" transform="rotate(-90 568.5 327.2)" font-family="Liberation Mono" font-size="9.42" fill="#fff" textLength="13.6" lengthAdjust="spacingAndGlyphs">GND</text>
<text font-weight="bold" x="581.5" y="338.2" transform="rotate(-90 581.5 338.2)" font-family="Liberation Mono" font-size="9.42" fill="#fff" textLength="18.4" lengthAdjust="spacingAndGlyphs">+24V</text>
<text x="417" y="375.2" font-family="Liberation Mono" font-size="10.14" fill="#e0e0e0" textLength="14.8" lengthAdjust="spacingAndGlyphs">U$2</text>
<text x="473" y="375.2" font-family="Liberation Mono" font-size="10.14" fill="#e0e0e0" textLength="56.4" lengthAdjust="spacingAndGlyphs">POLOLU_4988</text>
<rect x="415.5" y="381.7" width="88" height="112.4" fill="none" stroke="#00a4a4" stroke-width="1"/>
<ellipse cx="427.5" cy="393.5" rx="6.2" ry="4.8" fill="none" stroke="#9c9c10" stroke-width="0.9"/>
<ellipse cx="428" cy="393.5" rx="5" ry="4" fill="#9c9c10"/><circle cx="427.5" cy="393.5" r="1.4" fill="#000"/>
<ellipse cx="427.5" cy="405.98" rx="6.2" ry="4.8" fill="none" stroke="#9c9c10" stroke-width="0.9"/>
<ellipse cx="428" cy="405.98" rx="5" ry="4" fill="#9c9c10"/><circle cx="427.5" cy="405.98" r="1.4" fill="#000"/>
<ellipse cx="427.5" cy="418.46" rx="6.2" ry="4.8" fill="none" stroke="#9c9c10" stroke-width="0.9"/>
<ellipse cx="428" cy="418.46" rx="5" ry="4" fill="#9c9c10"/><circle cx="427.5" cy="418.46" r="1.4" fill="#000"/>
<ellipse cx="427.5" cy="430.94" rx="6.2" ry="4.8" fill="none" stroke="#9c9c10" stroke-width="0.9"/>
<ellipse cx="428" cy="430.94" rx="5" ry="4" fill="#9c9c10"/><circle cx="427.5" cy="430.94" r="1.4" fill="#000"/>
<ellipse cx="427.5" cy="443.42" rx="6.2" ry="4.8" fill="none" stroke="#9c9c10" stroke-width="0.9"/>
<ellipse cx="428" cy="443.42" rx="5" ry="4" fill="#9c9c10"/><circle cx="427.5" cy="443.42" r="1.4" fill="#000"/>
<ellipse cx="427.5" cy="455.9" rx="6.2" ry="4.8" fill="none" stroke="#9c9c10" stroke-width="0.9"/>
<ellipse cx="428" cy="455.9" rx="5" ry="4" fill="#9c9c10"/><circle cx="427.5" cy="455.9" r="1.4" fill="#000"/>
<ellipse cx="427.5" cy="468.38" rx="6.2" ry="4.8" fill="none" stroke="#9c9c10" stroke-width="0.9"/>
<ellipse cx="428" cy="468.38" rx="5" ry="4" fill="#9c9c10"/><circle cx="427.5" cy="468.38" r="1.4" fill="#000"/>
<ellipse cx="427.5" cy="480.86" rx="6.2" ry="4.8" fill="none" stroke="#9c9c10" stroke-width="0.9"/>
<ellipse cx="428" cy="480.86" rx="5" ry="4" fill="#9c9c10"/><circle cx="427.5" cy="480.86" r="1.4" fill="#000"/>
<ellipse cx="490.4" cy="393.5" rx="6.2" ry="4.8" fill="none" stroke="#9c9c10" stroke-width="0.9"/>
<ellipse cx="490.9" cy="393.5" rx="5" ry="4" fill="#9c9c10"/><circle cx="490.4" cy="393.5" r="1.4" fill="#000"/>
<ellipse cx="490.4" cy="405.98" rx="6.2" ry="4.8" fill="none" stroke="#9c9c10" stroke-width="0.9"/>
<ellipse cx="490.9" cy="405.98" rx="5" ry="4" fill="#9c9c10"/><circle cx="490.4" cy="405.98" r="1.4" fill="#000"/>
<ellipse cx="490.4" cy="418.46" rx="6.2" ry="4.8" fill="none" stroke="#9c9c10" stroke-width="0.9"/>
<ellipse cx="490.9" cy="418.46" rx="5" ry="4" fill="#9c9c10"/><circle cx="490.4" cy="418.46" r="1.4" fill="#000"/>
<ellipse cx="490.4" cy="430.94" rx="6.2" ry="4.8" fill="none" stroke="#9c9c10" stroke-width="0.9"/>
<ellipse cx="490.9" cy="430.94" rx="5" ry="4" fill="#9c9c10"/><circle cx="490.4" cy="430.94" r="1.4" fill="#000"/>
<ellipse cx="490.4" cy="443.42" rx="6.2" ry="4.8" fill="none" stroke="#9c9c10" stroke-width="0.9"/>
<ellipse cx="490.9" cy="443.42" rx="5" ry="4" fill="#9c9c10"/><circle cx="490.4" cy="443.42" r="1.4" fill="#000"/>
<ellipse cx="490.4" cy="455.9" rx="6.2" ry="4.8" fill="none" stroke="#9c9c10" stroke-width="0.9"/>
<ellipse cx="490.9" cy="455.9" rx="5" ry="4" fill="#9c9c10"/><circle cx="490.4" cy="455.9" r="1.4" fill="#000"/>
<ellipse cx="490.4" cy="468.38" rx="6.2" ry="4.8" fill="none" stroke="#9c9c10" stroke-width="0.9"/>
<ellipse cx="490.9" cy="468.38" rx="5" ry="4" fill="#9c9c10"/><circle cx="490.4" cy="468.38" r="1.4" fill="#000"/>
<ellipse cx="490.4" cy="480.86" rx="6.2" ry="4.8" fill="none" stroke="#9c9c10" stroke-width="0.9"/>
<ellipse cx="490.9" cy="480.86" rx="5" ry="4" fill="#9c9c10"/><circle cx="490.4" cy="480.86" r="1.4" fill="#000"/>
<path d="M443.5 400.3h19l3 3v31l-3 3h-19l-3-3v-31z" fill="none" stroke="#00a4a4" stroke-width="0.9"/>
<circle cx="447" cy="406.5" r="4.8" fill="#9c9c10"/><rect x="445.2" y="404.7" width="3.6" height="3.6" fill="#e4e4e4"/>
<circle cx="459.1" cy="406.5" r="4.8" fill="#9c9c10"/><rect x="457.3" y="404.7" width="3.6" height="3.6" fill="#e4e4e4"/>
<circle cx="447" cy="419" r="4.8" fill="#9c9c10"/><rect x="445.2" y="417.2" width="3.6" height="3.6" fill="#e4e4e4"/>
<circle cx="459.1" cy="419" r="4.8" fill="#9c9c10"/><rect x="457.3" y="417.2" width="3.6" height="3.6" fill="#e4e4e4"/>
<circle cx="447" cy="431.5" r="4.8" fill="#9c9c10"/><rect x="445.2" y="429.7" width="3.6" height="3.6" fill="#e4e4e4"/>
<circle cx="459.1" cy="431.5" r="4.8" fill="#9c9c10"/><rect x="457.3" y="429.7" width="3.6" height="3.6" fill="#e4e4e4"/>
<text x="474.5" y="415.5" transform="rotate(-90 474.5 415.5)" font-family="Liberation Mono" font-size="10.14" fill="#e0e0e0" textLength="14.8" lengthAdjust="spacingAndGlyphs">SV2</text>
<text x="433" y="403.5" transform="rotate(-90 433 403.5)" font-family="Liberation Mono" font-size="10.14" fill="#e0e0e0" textLength="4.4" lengthAdjust="spacingAndGlyphs">1</text>
<text x="455" y="439.5" transform="rotate(-90 455 439.5)" font-family="Liberation Mono" font-size="10.14" fill="#e0e0e0" textLength="4.4" lengthAdjust="spacingAndGlyphs">6</text>
<circle cx="521.5" cy="387.2" r="4" fill="#9c9c10"/>
<rect x="514.5" y="377.7" width="14" height="3" fill="#d8d8d8"/><rect x="514.5" y="382.7" width="14" height="3" fill="#d8d8d8"/>
<circle cx="521.5" cy="381.2" r="15.5" fill="none" stroke="#00a4a4" stroke-width="0.9"/>
<text x="513" y="426.5" transform="rotate(-90 513 426.5)" font-family="Liberation Mono" font-size="10.14" fill="#e0e0e0" textLength="25.2" lengthAdjust="spacingAndGlyphs">100uf</text>
<text x="538" y="401.5" transform="rotate(-90 538 401.5)" font-family="Liberation Mono" font-size="10.14" fill="#e0e0e0" textLength="9.6" lengthAdjust="spacingAndGlyphs">C2</text>
<text x="535" y="398.5" transform="rotate(-90 535 398.5)" font-family="Liberation Mono" font-size="10.14" fill="#e0e0e0" textLength="4.4" lengthAdjust="spacingAndGlyphs">1</text>
<path d="M543.75 394.65H550.25L554 398.4V403.4L550.25 407.15H543.75L540 403.4V398.4Z" fill="none" stroke="#00a4a4" stroke-width="0.8"/>
<circle cx="547" cy="400.9" r="6" fill="#9c9c10"/><rect x="545" y="398.9" width="4" height="4" fill="#e4e4e4"/>
<path d="M543.75 407.1H550.25L554 410.85V415.85L550.25 419.6H543.75L540 415.85V410.85Z" fill="none" stroke="#00a4a4" stroke-width="0.8"/>
<circle cx="547" cy="413.35" r="6" fill="#9c9c10"/><rect x="545" y="411.35" width="4" height="4" fill="#e4e4e4"/>
<path d="M543.75 419.55H550.25L554 423.3V428.3L550.25 432.05H543.75L540 428.3V423.3Z" fill="none" stroke="#00a4a4" stroke-width="0.8"/>
<circle cx="547" cy="425.8" r="6" fill="#9c9c10"/><rect x="545" y="423.8" width="4" height="4" fill="#e4e4e4"/>
<path d="M543.75 432H550.25L554 435.75V440.75L550.25 444.5H543.75L540 440.75V435.75Z" fill="none" stroke="#00a4a4" stroke-width="0.8"/>
<circle cx="547" cy="438.25" r="6" fill="#9c9c10"/><rect x="545" y="436.25" width="4" height="4" fill="#e4e4e4"/>
<path d="M543.75 444.45H550.25L554 448.2V453.2L550.25 456.95H543.75L540 453.2V448.2Z" fill="none" stroke="#00a4a4" stroke-width="0.8"/>
<circle cx="547" cy="450.7" r="6" fill="#9c9c10"/><rect x="545" y="448.7" width="4" height="4" fill="#e4e4e4"/>
<path d="M543.75 456.9H550.25L554 460.65V465.65L550.25 469.4H543.75L540 465.65V460.65Z" fill="none" stroke="#00a4a4" stroke-width="0.8"/>
<circle cx="547" cy="463.15" r="6" fill="#9c9c10"/><rect x="545" y="461.15" width="4" height="4" fill="#e4e4e4"/>
<path d="M543.75 469.35H550.25L554 473.1V478.1L550.25 481.85H543.75L540 478.1V473.1Z" fill="none" stroke="#00a4a4" stroke-width="0.8"/>
<circle cx="547" cy="475.6" r="6" fill="#9c9c10"/><rect x="545" y="473.6" width="4" height="4" fill="#e4e4e4"/>
<text x="544.5" y="416.85" font-family="Liberation Mono" font-size="8.7" fill="#ffffff" textLength="3.7" lengthAdjust="spacingAndGlyphs">2</text>
<text x="544.5" y="441.75" font-family="Liberation Mono" font-size="8.7" fill="#ffffff" textLength="3.7" lengthAdjust="spacingAndGlyphs">4</text>
<text x="544.5" y="466.65" font-family="Liberation Mono" font-size="8.7" fill="#ffffff" textLength="3.7" lengthAdjust="spacingAndGlyphs">6</text>
<text x="562" y="415.5" transform="rotate(-90 562 415.5)" font-family="Liberation Mono" font-size="10.14" fill="#e0e0e0" textLength="14.8" lengthAdjust="spacingAndGlyphs">SV5</text>
<text font-weight="bold" x="568.5" y="446.5" transform="rotate(-90 568.5 446.5)" font-family="Liberation Mono" font-size="9.42" fill="#fff" textLength="13.6" lengthAdjust="spacingAndGlyphs">GND</text>
<text font-weight="bold" x="581.5" y="457.5" transform="rotate(-90 581.5 457.5)" font-family="Liberation Mono" font-size="9.42" fill="#fff" textLength="18.4" lengthAdjust="spacingAndGlyphs">+24V</text>
<text x="417" y="494.5" font-family="Liberation Mono" font-size="10.14" fill="#e0e0e0" textLength="14.8" lengthAdjust="spacingAndGlyphs">U$3</text>
<text x="473" y="494.5" font-family="Liberation Mono" font-size="10.14" fill="#e0e0e0" textLength="56.4" lengthAdjust="spacingAndGlyphs">POLOLU_4988</text>
<rect x="415.5" y="500.2" width="88" height="112.4" fill="none" stroke="#00a4a4" stroke-width="1"/>
<ellipse cx="427.5" cy="512" rx="6.2" ry="4.8" fill="none" stroke="#9c9c10" stroke-width="0.9"/>
<ellipse cx="428" cy="512" rx="5" ry="4" fill="#9c9c10"/><circle cx="427.5" cy="512" r="1.4" fill="#000"/>
<ellipse cx="427.5" cy="524.48" rx="6.2" ry="4.8" fill="none" stroke="#9c9c10" stroke-width="0.9"/>
<ellipse cx="428" cy="524.48" rx="5" ry="4" fill="#9c9c10"/><circle cx="427.5" cy="524.48" r="1.4" fill="#000"/>
<ellipse cx="427.5" cy="536.96" rx="6.2" ry="4.8" fill="none" stroke="#9c9c10" stroke-width="0.9"/>
<ellipse cx="428" cy="536.96" rx="5" ry="4" fill="#9c9c10"/><circle cx="427.5" cy="536.96" r="1.4" fill="#000"/>
<ellipse cx="427.5" cy="549.44" rx="6.2" ry="4.8" fill="none" stroke="#9c9c10" stroke-width="0.9"/>
<ellipse cx="428" cy="549.44" rx="5" ry="4" fill="#9c9c10"/><circle cx="427.5" cy="549.44" r="1.4" fill="#000"/>
<ellipse cx="427.5" cy="561.92" rx="6.2" ry="4.8" fill="none" stroke="#9c9c10" stroke-width="0.9"/>
<ellipse cx="428" cy="561.92" rx="5" ry="4" fill="#9c9c10"/><circle cx="427.5" cy="561.92" r="1.4" fill="#000"/>
<ellipse cx="427.5" cy="574.4" rx="6.2" ry="4.8" fill="none" stroke="#9c9c10" stroke-width="0.9"/>
<ellipse cx="428" cy="574.4" rx="5" ry="4" fill="#9c9c10"/><circle cx="427.5" cy="574.4" r="1.4" fill="#000"/>
<ellipse cx="427.5" cy="586.88" rx="6.2" ry="4.8" fill="none" stroke="#9c9c10" stroke-width="0.9"/>
<ellipse cx="428" cy="586.88" rx="5" ry="4" fill="#9c9c10"/><circle cx="427.5" cy="586.88" r="1.4" fill="#000"/>
<ellipse cx="427.5" cy="599.36" rx="6.2" ry="4.8" fill="none" stroke="#9c9c10" stroke-width="0.9"/>
<ellipse cx="428" cy="599.36" rx="5" ry="4" fill="#9c9c10"/><circle cx="427.5" cy="599.36" r="1.4" fill="#000"/>
<ellipse cx="490.4" cy="512" rx="6.2" ry="4.8" fill="none" stroke="#9c9c10" stroke-width="0.9"/>
<ellipse cx="490.9" cy="512" rx="5" ry="4" fill="#9c9c10"/><circle cx="490.4" cy="512" r="1.4" fill="#000"/>
<ellipse cx="490.4" cy="524.48" rx="6.2" ry="4.8" fill="none" stroke="#9c9c10" stroke-width="0.9"/>
<ellipse cx="490.9" cy="524.48" rx="5" ry="4" fill="#9c9c10"/><circle cx="490.4" cy="524.48" r="1.4" fill="#000"/>
<ellipse cx="490.4" cy="536.96" rx="6.2" ry="4.8" fill="none" stroke="#9c9c10" stroke-width="0.9"/>
<ellipse cx="490.9" cy="536.96" rx="5" ry="4" fill="#9c9c10"/><circle cx="490.4" cy="536.96" r="1.4" fill="#000"/>
<ellipse cx="490.4" cy="549.44" rx="6.2" ry="4.8" fill="none" stroke="#9c9c10" stroke-width="0.9"/>
<ellipse cx="490.9" cy="549.44" rx="5" ry="4" fill="#9c9c10"/><circle cx="490.4" cy="549.44" r="1.4" fill="#000"/>
<ellipse cx="490.4" cy="561.92" rx="6.2" ry="4.8" fill="none" stroke="#9c9c10" stroke-width="0.9"/>
<ellipse cx="490.9" cy="561.92" rx="5" ry="4" fill="#9c9c10"/><circle cx="490.4" cy="561.92" r="1.4" fill="#000"/>
<ellipse cx="490.4" cy="574.4" rx="6.2" ry="4.8" fill="none" stroke="#9c9c10" stroke-width="0.9"/>
<ellipse cx="490.9" cy="574.4" rx="5" ry="4" fill="#9c9c10"/><circle cx="490.4" cy="574.4" r="1.4" fill="#000"/>
<ellipse cx="490.4" cy="586.88" rx="6.2" ry="4.8" fill="none" stroke="#9c9c10" stroke-width="0.9"/>
<ellipse cx="490.9" cy="586.88" rx="5" ry="4" fill="#9c9c10"/><circle cx="490.4" cy="586.88" r="1.4" fill="#000"/>
<ellipse cx="490.4" cy="599.36" rx="6.2" ry="4.8" fill="none" stroke="#9c9c10" stroke-width="0.9"/>
<ellipse cx="490.9" cy="599.36" rx="5" ry="4" fill="#9c9c10"/><circle cx="490.4" cy="599.36" r="1.4" fill="#000"/>
<path d="M443.5 518.8h19l3 3v31l-3 3h-19l-3-3v-31z" fill="none" stroke="#00a4a4" stroke-width="0.9"/>
<circle cx="447" cy="525" r="4.8" fill="#9c9c10"/><rect x="445.2" y="523.2" width="3.6" height="3.6" fill="#e4e4e4"/>
<circle cx="459.1" cy="525" r="4.8" fill="#9c9c10"/><rect x="457.3" y="523.2" width="3.6" height="3.6" fill="#e4e4e4"/>
<circle cx="447" cy="537.5" r="4.8" fill="#9c9c10"/><rect x="445.2" y="535.7" width="3.6" height="3.6" fill="#e4e4e4"/>
<circle cx="459.1" cy="537.5" r="4.8" fill="#9c9c10"/><rect x="457.3" y="535.7" width="3.6" height="3.6" fill="#e4e4e4"/>
<circle cx="447" cy="550" r="4.8" fill="#9c9c10"/><rect x="445.2" y="548.2" width="3.6" height="3.6" fill="#e4e4e4"/>
<circle cx="459.1" cy="550" r="4.8" fill="#9c9c10"/><rect x="457.3" y="548.2" width="3.6" height="3.6" fill="#e4e4e4"/>
<text x="474.5" y="534" transform="rotate(-90 474.5 534)" font-family="Liberation Mono" font-size="10.14" fill="#e0e0e0" textLength="14.8" lengthAdjust="spacingAndGlyphs">SV3</text>
<text x="433" y="522" transform="rotate(-90 433 522)" font-family="Liberation Mono" font-size="10.14" fill="#e0e0e0" textLength="4.4" lengthAdjust="spacingAndGlyphs">1</text>
<text x="455" y="558" transform="rotate(-90 455 558)" font-family="Liberation Mono" font-size="10.14" fill="#e0e0e0" textLength="4.4" lengthAdjust="spacingAndGlyphs">6</text>
<circle cx="521.5" cy="505.7" r="4" fill="#9c9c10"/>
<rect x="514.5" y="496.2" width="14" height="3" fill="#d8d8d8"/><rect x="514.5" y="501.2" width="14" height="3" fill="#d8d8d8"/>
<circle cx="521.5" cy="499.7" r="15.5" fill="none" stroke="#00a4a4" stroke-width="0.9"/>
<text x="513" y="545" transform="rotate(-90 513 545)" font-family="Liberation Mono" font-size="10.14" fill="#e0e0e0" textLength="25.2" lengthAdjust="spacingAndGlyphs">100uf</text>
<text x="538" y="520" transform="rotate(-90 538 520)" font-family="Liberation Mono" font-size="10.14" fill="#e0e0e0" textLength="9.6" lengthAdjust="spacingAndGlyphs">C3</text>
<text x="535" y="517" transform="rotate(-90 535 517)" font-family="Liberation Mono" font-size="10.14" fill="#e0e0e0" textLength="4.4" lengthAdjust="spacingAndGlyphs">1</text>
<path d="M543.75 513.15H550.25L554 516.9V521.9L550.25 525.65H543.75L540 521.9V516.9Z" fill="none" stroke="#00a4a4" stroke-width="0.8"/>
<circle cx="547" cy="519.4" r="6" fill="#9c9c10"/><rect x="545" y="517.4" width="4" height="4" fill="#e4e4e4"/>
<path d="M543.75 525.6H550.25L554 529.35V534.35L550.25 538.1H543.75L540 534.35V529.35Z" fill="none" stroke="#00a4a4" stroke-width="0.8"/>
<circle cx="547" cy="531.85" r="6" fill="#9c9c10"/><rect x="545" y="529.85" width="4" height="4" fill="#e4e4e4"/>
<path d="M543.75 538.05H550.25L554 541.8V546.8L550.25 550.55H543.75L540 546.8V541.8Z" fill="none" stroke="#00a4a4" stroke-width="0.8"/>
<circle cx="547" cy="544.3" r="6" fill="#9c9c10"/><rect x="545" y="542.3" width="4" height="4" fill="#e4e4e4"/>
<path d="M543.75 550.5H550.25L554 554.25V559.25L550.25 563H543.75L540 559.25V554.25Z" fill="none" stroke="#00a4a4" stroke-width="0.8"/>
<circle cx="547" cy="556.75" r="6" fill="#9c9c10"/><rect x="545" y="554.75" width="4" height="4" fill="#e4e4e4"/>
<path d="M543.75 562.95H550.25L554 566.7V571.7L550.25 575.45H543.75L540 571.7V566.7Z" fill="none" stroke="#00a4a4" stroke-width="0.8"/>
<circle cx="547" cy="569.2" r="6" fill="#9c9c10"/><rect x="545" y="567.2" width="4" height="4" fill="#e4e4e4"/>
<path d="M543.75 575.4H550.25L554 579.15V584.15L550.25 587.9H543.75L540 584.15V579.15Z" fill="none" stroke="#00a4a4" stroke-width="0.8"/>
<circle cx="547" cy="581.65" r="6" fill="#9c9c10"/><rect x="545" y="579.65" width="4" height="4" fill="#e4e4e4"/>
<path d="M543.75 587.85H550.25L554 591.6V596.6L550.25 600.35H543.75L540 596.6V591.6Z" fill="none" stroke="#00a4a4" stroke-width="0.8"/>
<circle cx="547" cy="594.1" r="6" fill="#9c9c10"/><rect x="545" y="592.1" width="4" height="4" fill="#e4e4e4"/>
<text x="544.5" y="535.35" font-family="Liberation Mono" font-size="8.7" fill="#ffffff" textLength="3.7" lengthAdjust="spacingAndGlyphs">2</text>
<text x="544.5" y="560.25" font-family="Liberation Mono" font-size="8.7" fill="#ffffff" textLength="3.7" lengthAdjust="spacingAndGlyphs">4</text>
<text x="544.5" y="585.15" font-family="Liberation Mono" font-size="8.7" fill="#ffffff" textLength="3.7" lengthAdjust="spacingAndGlyphs">6</text>
<text x="562" y="534" transform="rotate(-90 562 534)" font-family="Liberation Mono" font-size="10.14" fill="#e0e0e0" textLength="14.8" lengthAdjust="spacingAndGlyphs">SV6</text>
<text font-weight="bold" x="568.5" y="565" transform="rotate(-90 568.5 565)" font-family="Liberation Mono" font-size="9.42" fill="#fff" textLength="13.6" lengthAdjust="spacingAndGlyphs">GND</text>
<text font-weight="bold" x="581.5" y="576" transform="rotate(-90 581.5 576)" font-family="Liberation Mono" font-size="9.42" fill="#fff" textLength="18.4" lengthAdjust="spacingAndGlyphs">+24V</text>
<path d="M369.2 311.9H374.2L377.95 315.65V322.15L374.2 325.9H369.2L365.45 322.15V315.65Z" fill="none" stroke="#00a4a4" stroke-width="0.8"/><circle cx="371.7" cy="318.9" r="5.6" fill="#9c9c10"/><rect x="369.7" y="316.9" width="4" height="4" fill="#e4e4e4"/>
<path d="M381.7 311.9H386.7L390.45 315.65V322.15L386.7 325.9H381.7L377.95 322.15V315.65Z" fill="none" stroke="#00a4a4" stroke-width="0.8"/><circle cx="384.2" cy="318.9" r="5.6" fill="#9c9c10"/><rect x="382.2" y="316.9" width="4" height="4" fill="#e4e4e4"/>
<path d="M394.2 311.9H399.2L402.95 315.65V322.15L399.2 325.9H394.2L390.45 322.15V315.65Z" fill="none" stroke="#00a4a4" stroke-width="0.8"/><circle cx="396.7" cy="318.9" r="5.6" fill="#9c9c10"/><rect x="394.7" y="316.9" width="4" height="4" fill="#e4e4e4"/>
<text x="387" y="332.4" font-family="Liberation Mono" font-size="10.14" fill="#e0e0e0" textLength="14.8" lengthAdjust="spacingAndGlyphs">SV9</text>
<text x="401" y="304.5" font-family="Liberation Mono" font-size="10.14" fill="#e0e0e0" textLength="4.4" lengthAdjust="spacingAndGlyphs">1</text>
<path d="M213 487.7H218.8L222.4 491.3V496.1L218.8 499.7H213L209.4 496.1V491.3Z" fill="none" stroke="#00a4a4" stroke-width="0.8"/><path d="M213 500.6H218.8L222.4 504.2V509L218.8 512.6H213L209.4 509V504.2Z" fill="none" stroke="#00a4a4" stroke-width="0.8"/>
<circle cx="215.9" cy="493.7" r="5.6" fill="#9c9c10"/><rect x="213.9" y="491.7" width="4" height="4" fill="#e4e4e4"/><circle cx="215.9" cy="506.6" r="5.6" fill="#9c9c10"/><rect x="213.9" y="504.6" width="4" height="4" fill="#e4e4e4"/>
<ellipse cx="235.2" cy="489" rx="8" ry="4.5" fill="#9c9c10" transform="rotate(-25 235.2 489)"/>
<ellipse cx="270.4" cy="489" rx="8" ry="4.5" fill="#9c9c10" transform="rotate(25 270.4 489)"/>
<ellipse cx="235.2" cy="510.7" rx="8" ry="4.5" fill="#9c9c10" transform="rotate(25 235.2 510.7)"/>
<ellipse cx="270.4" cy="510.7" rx="8" ry="4.5" fill="#9c9c10" transform="rotate(-25 270.4 510.7)"/>
<circle cx="242.3" cy="489.1" r="2.2" fill="none" stroke="#e0e0e0" stroke-width="0.8"/>
<circle cx="263.4" cy="489.1" r="2.2" fill="none" stroke="#e0e0e0" stroke-width="0.8"/>
<circle cx="242.3" cy="510.3" r="2.2" fill="none" stroke="#e0e0e0" stroke-width="0.8"/>
<circle cx="263.4" cy="510.3" r="2.2" fill="none" stroke="#e0e0e0" stroke-width="0.8"/>
<path d="M243 486H263M243 515.4H263" stroke="#00a4a4" stroke-width="1.2"/><path d="M244 489.5H262M244 510H262" stroke="#e0e0e0" stroke-width="1"/>
<rect x="246.4" y="494.3" width="13.4" height="12.3" fill="none" stroke="#e0e0e0" stroke-width="1"/><circle cx="253" cy="500.4" r="7.2" fill="none" stroke="#00a4a4" stroke-width="0.9"/><circle cx="253" cy="500.4" r="1.5" fill="#1828ff"/>
<text x="230" y="504" transform="rotate(-90 230 504)" font-family="Liberation Mono" font-size="10.14" fill="#e0e0e0" textLength="14.8" lengthAdjust="spacingAndGlyphs">JP1</text>
<text x="257" y="524" font-family="Liberation Mono" font-size="10.14" fill="#e0e0e0" textLength="9.6" lengthAdjust="spacingAndGlyphs">S1</text><text x="236" y="484" font-family="Liberation Mono" font-size="10.14" fill="#e0e0e0" textLength="4.4" lengthAdjust="spacingAndGlyphs">4</text><text x="279" y="485" font-family="Liberation Mono" font-size="10.14" fill="#e0e0e0" textLength="4.4" lengthAdjust="spacingAndGlyphs">3</text><text x="278" y="508" font-family="Liberation Mono" font-size="10.14" fill="#e0e0e0" textLength="4.4" lengthAdjust="spacingAndGlyphs">1</text>
<path d="M244.5 549.65H249.5L253.25 553.4V559.4L249.5 563.15H244.5L240.75 559.4V553.4Z" fill="none" stroke="#00a4a4" stroke-width="0.8"/><circle cx="247" cy="556.4" r="5.8" fill="#9c9c10"/><rect x="245" y="554.4" width="4" height="4" fill="#e4e4e4"/>
<path d="M331.4 549.65H336.4L340.15 553.4V559.4L336.4 563.15H331.4L327.65 559.4V553.4Z" fill="none" stroke="#00a4a4" stroke-width="0.8"/><circle cx="333.9" cy="556.4" r="5.8" fill="#9c9c10"/><rect x="331.9" y="554.4" width="4" height="4" fill="#e4e4e4"/>
<path d="M257.12 549.65H262.12L265.87 553.4V559.4L262.12 563.15H257.12L253.37 559.4V553.4Z" fill="none" stroke="#00a4a4" stroke-width="0.8"/><circle cx="259.62" cy="556.4" r="5.8" fill="#9c9c10"/><rect x="257.62" y="554.4" width="4" height="4" fill="#e4e4e4"/>
<path d="M344.02 549.65H349.02L352.77 553.4V559.4L349.02 563.15H344.02L340.27 559.4V553.4Z" fill="none" stroke="#00a4a4" stroke-width="0.8"/><circle cx="346.52" cy="556.4" r="5.8" fill="#9c9c10"/><rect x="344.52" y="554.4" width="4" height="4" fill="#e4e4e4"/>
<path d="M269.74 549.65H274.74L278.49 553.4V559.4L274.74 563.15H269.74L265.99 559.4V553.4Z" fill="none" stroke="#00a4a4" stroke-width="0.8"/><circle cx="272.24" cy="556.4" r="5.8" fill="#9c9c10"/><rect x="270.24" y="554.4" width="4" height="4" fill="#e4e4e4"/>
<path d="M356.64 549.65H361.64L365.39 553.4V559.4L361.64 563.15H356.64L352.89 559.4V553.4Z" fill="none" stroke="#00a4a4" stroke-width="0.8"/><circle cx="359.14" cy="556.4" r="5.8" fill="#9c9c10"/><rect x="357.14" y="554.4" width="4" height="4" fill="#e4e4e4"/>
<path d="M282.36 549.65H287.36L291.11 553.4V559.4L287.36 563.15H282.36L278.61 559.4V553.4Z" fill="none" stroke="#00a4a4" stroke-width="0.8"/><circle cx="284.86" cy="556.4" r="5.8" fill="#9c9c10"/><rect x="282.86" y="554.4" width="4" height="4" fill="#e4e4e4"/>
<path d="M369.26 549.65H374.26L378.01 553.4V559.4L374.26 563.15H369.26L365.51 559.4V553.4Z" fill="none" stroke="#00a4a4" stroke-width="0.8"/><circle cx="371.76" cy="556.4" r="5.8" fill="#9c9c10"/><rect x="369.76" y="554.4" width="4" height="4" fill="#e4e4e4"/>
<path d="M294.98 549.65H299.98L303.73 553.4V559.4L299.98 563.15H294.98L291.23 559.4V553.4Z" fill="none" stroke="#00a4a4" stroke-width="0.8"/><circle cx="297.48" cy="556.4" r="5.8" fill="#9c9c10"/><rect x="295.48" y="554.4" width="4" height="4" fill="#e4e4e4"/>
<path d="M381.88 549.65H386.88L390.63 553.4V559.4L386.88 563.15H381.88L378.13 559.4V553.4Z" fill="none" stroke="#00a4a4" stroke-width="0.8"/><circle cx="384.38" cy="556.4" r="5.8" fill="#9c9c10"/><rect x="382.38" y="554.4" width="4" height="4" fill="#e4e4e4"/>
<path d="M307.6 549.65H312.6L316.35 553.4V559.4L312.6 563.15H307.6L303.85 559.4V553.4Z" fill="none" stroke="#00a4a4" stroke-width="0.8"/><circle cx="310.1" cy="556.4" r="5.8" fill="#9c9c10"/><rect x="308.1" y="554.4" width="4" height="4" fill="#e4e4e4"/>
<path d="M394.5 549.65H399.5L403.25 553.4V559.4L399.5 563.15H394.5L390.75 559.4V553.4Z" fill="none" stroke="#00a4a4" stroke-width="0.8"/><circle cx="397" cy="556.4" r="5.8" fill="#9c9c10"/><rect x="395" y="554.4" width="4" height="4" fill="#e4e4e4"/>
<text x="190" y="548.2" font-family="Liberation Mono" font-size="10.14" fill="#e0e0e0" textLength="99.28" lengthAdjust="spacingAndGlyphs">/3.3/5/GND/GND/VIN</text>
<text x="295" y="570" font-family="Liberation Mono" font-size="10.14" fill="#e0e0e0" textLength="20" lengthAdjust="spacingAndGlyphs">SV12</text><text x="329" y="548" font-family="Liberation Mono" font-size="10.14" fill="#e0e0e0" textLength="20" lengthAdjust="spacingAndGlyphs">SV11</text><text x="354" y="570" font-family="Liberation Mono" font-size="10.14" fill="#e0e0e0" textLength="25.2" lengthAdjust="spacingAndGlyphs">A0-A5</text>
<text x="313" y="539" font-family="Liberation Mono" font-size="10.14" fill="#e0e0e0" textLength="4.4" lengthAdjust="spacingAndGlyphs">1</text><text x="396" y="545" font-family="Liberation Mono" font-size="10.14" fill="#e0e0e0" textLength="4.4" lengthAdjust="spacingAndGlyphs">6</text><text x="251" y="562" font-family="Liberation Mono" font-size="10.14" fill="#e0e0e0" textLength="4.4" lengthAdjust="spacingAndGlyphs">6</text><text x="333" y="570" font-family="Liberation Mono" font-size="10.14" fill="#e0e0e0" textLength="4.4" lengthAdjust="spacingAndGlyphs">1</text>
<path d="M189.5 539.4h2l2 3v23l-2 3h-2" fill="none" stroke="#00a4a4" stroke-width="0.9"/>
<text x="207" y="567" transform="rotate(-90 207 567)" font-family="Liberation Mono" font-size="13.04" fill="#e0e0e0" textLength="12.2" lengthAdjust="spacingAndGlyphs">X1</text>
<path d="M519.4 612.1H524.6L528.5 616V621.2L524.6 625.1H519.4L515.5 621.2V616Z" fill="none" stroke="#00a4a4" stroke-width="0.8"/><circle cx="522" cy="618.6" r="6" fill="#9c9c10"/><rect x="520" y="616.6" width="4" height="4" fill="#e4e4e4"/>
<path d="M531.4 612.1H536.6L540.5 616V621.2L536.6 625.1H531.4L527.5 621.2V616Z" fill="none" stroke="#00a4a4" stroke-width="0.8"/><circle cx="534" cy="618.6" r="6" fill="#9c9c10"/><rect x="532" y="616.6" width="4" height="4" fill="#e4e4e4"/>
<path d="M544.4 612.1H549.6L553.5 616V621.2L549.6 625.1H544.4L540.5 621.2V616Z" fill="none" stroke="#00a4a4" stroke-width="0.8"/><circle cx="547" cy="618.6" r="6" fill="#9c9c10"/><rect x="545" y="616.6" width="4" height="4" fill="#e4e4e4"/>
<text x="537" y="632.6" font-family="Liberation Mono" font-size="10.14" fill="#e0e0e0" textLength="14.8" lengthAdjust="spacingAndGlyphs">SV7</text><text x="559" y="614" font-family="Liberation Mono" font-size="10.14" fill="#e0e0e0" textLength="4.4" lengthAdjust="spacingAndGlyphs">1</text>
</svg>
<div class="a" style="left:853px;top:116px;width:16px;height:555px;background:repeating-conic-gradient(#fff 0 25%,#d4d0c8 0 50%) 0 0/2px 2px"></div>
<div class="a raised" style="left:853px;top:116px;width:16px;height:15px;background:#d4d0c8;box-shadow:inset -1px -1px #404040,inset 1px 1px #d4d0c8,inset -2px -2px #808080,inset 2px 2px #fff"></div>
<div class="a" style="left:857px;top:121px;border-left:4px solid transparent;border-right:4px solid transparent;border-bottom:4px solid #000"></div>
<div class="a" style="left:853px;top:131px;width:16px;height:117px;background:#d4d0c8;box-shadow:inset -1px -1px #404040,inset 1px 1px #d4d0c8,inset -2px -2px #808080,inset 2px 2px #fff"></div>
<div class="a" style="left:853px;top:655px;width:16px;height:16px;background:#d4d0c8;box-shadow:inset -1px -1px #404040,inset 1px 1px #d4d0c8,inset -2px -2px #808080,inset 2px 2px #fff"></div>
<div class="a" style="left:857px;top:661px;border-left:4px solid transparent;border-right:4px solid transparent;border-top:4px solid #000"></div>
<div class="a" style="left:869px;top:114px;width:1px;height:574px;background:#000"></div>
<div class="a" style="left:38px;top:671px;width:815px;height:16px;background:repeating-conic-gradient(#fff 0 25%,#d4d0c8 0 50%) 0 0/2px 2px"></div>
<div class="a" style="left:38px;top:671px;width:16px;height:16px;background:#d4d0c8;box-shadow:inset -1px -1px #404040,inset 1px 1px #d4d0c8,inset -2px -2px #808080,inset 2px 2px #fff"></div>
<div class="a" style="left:44px;top:675px;border-top:4px solid transparent;border-bottom:4px solid transparent;border-right:4px solid #000"></div>
<div class="a" style="left:54px;top:671px;width:286px;height:16px;background:#d4d0c8;box-shadow:inset -1px -1px #404040,inset 1px 1px #d4d0c8,inset -2px -2px #808080,inset 2px 2px #fff"></div>
<div class="a" style="left:837px;top:671px;width:16px;height:16px;background:#d4d0c8;box-shadow:inset -1px -1px #404040,inset 1px 1px #d4d0c8,inset -2px -2px #808080,inset 2px 2px #fff"></div>
<div class="a" style="left:843px;top:675px;border-top:4px solid transparent;border-bottom:4px solid transparent;border-left:4px solid #000"></div>
<div class="a" style="left:853px;top:671px;width:16px;height:16px;background:#d4d0c8"></div>
<div class="a" style="left:38px;top:687px;width:832px;height:1px;background:#000"></div>
<div class="a" style="left:870px;top:114px;width:39px;height:574px;background:linear-gradient(#efeeeb,#dcd9d4 50%,#c6c3bc);box-shadow:inset 1px 1px #fff,inset -1px 0 #a8a49c,inset 0 -1px #a8a49c"></div>
<div class="a" style="left:874px;top:120px;width:32px;height:32px;background:#b4bbd2;border:1px solid #0a246a;box-shadow:inset 0 0 0 0.5px #0a246a"></div>
<div class="a" style="left:878px;top:157px;width:24px;height:1px;background:#a8a49c"></div>
<div class="a" style="left:878px;top:234px;width:24px;height:1px;background:#a8a49c"></div>
<div class="a" style="left:878px;top:379px;width:24px;height:1px;background:#a8a49c"></div>
<div class="a" style="left:878px;top:524px;width:24px;height:1px;background:#a8a49c"></div>
<div class="a" style="left:878px;top:602px;width:24px;height:1px;background:#a8a49c"></div>
<div class="a" style="left:878px;top:645px;width:24px;height:1px;background:#a8a49c"></div>
<svg class="a" style="left:876px;top:122px" width="28" height="28" viewBox="0 0 28 28"><ellipse cx="14" cy="21" rx="9" ry="2.5" fill="#8c9a80" opacity="0.7"/><path d="M10 5v15l4-4 4 6 3-2-4-5h6z" fill="#d0d8a0" stroke="#404040" stroke-width="1.5"/></svg>
<svg class="a" style="left:876px;top:164px" width="28" height="28" viewBox="0 0 28 28"><path d="M5 3v22" stroke="#30d030" stroke-width="3"/><path d="M17 3v22" stroke="#808080" stroke-width="2"/><path d="M1 8h26" stroke="#e02020" stroke-width="3"/><path d="M1 19h26" stroke="#808080" stroke-width="2"/><circle cx="5" cy="8" r="2.5" fill="#f08020" stroke="#202020" stroke-width="0.8"/><path d="M7 9v13l3-3 3 5 2-1-3-5h5z" fill="#c0d0f0" stroke="#202020"/></svg>
<svg class="a" style="left:876px;top:198px" width="28" height="28" viewBox="0 0 28 28"><rect x="2" y="2" width="24" height="24" rx="4" fill="#e0e0e0"/><path d="M9 10L4 4M9 10L26 5M9 10L3 16M9 10L6 26" stroke="#fff" stroke-width="1.5"/><circle cx="9" cy="10" r="2.5" fill="none" stroke="#e00000" stroke-width="1.5"/><path d="M10 11v13l3-3 3 5 2-1-3-5h5z" fill="#c0d0f0" stroke="#202020"/></svg>
<svg class="a" style="left:876px;top:240px" width="28" height="28" viewBox="0 0 28 28"><rect x="2" y="7" width="24" height="13" rx="2" fill="#d8d8d8" stroke="#303030"/><g fill="#f07010" stroke="#904000" stroke-width="0.7"><rect x="4" y="2" width="5" height="6"/><rect x="11.5" y="2" width="5" height="6"/><rect x="19" y="2" width="5" height="6"/><rect x="4" y="19" width="5" height="6"/><rect x="11.5" y="19" width="5" height="6"/><rect x="19" y="19" width="5" height="6"/></g></svg>
<svg class="a" style="left:876px;top:276px" width="28" height="28" viewBox="0 0 28 28"><path d="M2 5h10v16h14" stroke="#108010" stroke-width="4" fill="none"/></svg>
<svg class="a" style="left:876px;top:308px" width="28" height="28" viewBox="0 0 28 28"><rect x="2" y="2" width="24" height="24" fill="#107a10" stroke="#0a4a0a"/><path d="M8 9l10 10v8" stroke="#fff" stroke-width="4" fill="none"/><path d="M8 9l10 10v8" stroke="#107a10" stroke-width="1.5" fill="none"/><circle cx="8" cy="9" r="4" fill="#107a10" stroke="#fff" stroke-width="2"/></svg>
<svg class="a" style="left:876px;top:343px" width="28" height="28" viewBox="0 0 28 28"><rect x="2" y="2" width="24" height="24" fill="#b0d0d0" stroke="#404040"/><circle cx="8" cy="8" r="4" fill="none" stroke="#a08020" stroke-width="2"/><path d="M8 8l6 7 12-10" stroke="#108010" stroke-width="2" fill="none"/><path d="M4 26c4-10 10-14 20-14M6 12c6 4 10 8 12 14" stroke="#e02020" stroke-width="2.5" fill="none"/></svg>
<svg class="a" style="left:876px;top:388px" width="28" height="28" viewBox="0 0 28 28"><path d="M3 24L25 6" stroke="#0010e0" stroke-width="3" stroke-dasharray="4 3"/></svg>
<svg class="a" style="left:876px;top:420px" width="28" height="28" viewBox="0 0 28 28"><circle cx="14" cy="14" r="10" fill="none" stroke="#1030f0" stroke-width="2"/><rect x="12" y="12" width="4" height="4" fill="#30b030"/><rect x="18" y="3" width="4" height="4" fill="#30b030"/></svg>
<svg class="a" style="left:876px;top:454px" width="28" height="28" viewBox="0 0 28 28"><path d="M6 4a11 11 0 0 1 12 20" fill="none" stroke="#1030f0" stroke-width="2.5"/><rect x="4" y="2" width="4" height="4" fill="#30b030"/><rect x="16" y="22" width="4" height="4" fill="#30b030"/><rect x="4" y="22" width="4" height="4" fill="#30b030"/></svg>
<svg class="a" style="left:876px;top:489px" width="28" height="28" viewBox="0 0 28 28"><text x="14" y="22" text-anchor="middle" font-family="Liberation Serif" font-weight="bold" font-size="22" fill="#202020">T</text></svg>
<svg class="a" style="left:876px;top:530px" width="28" height="28" viewBox="0 0 28 28"><path d="M3 12v12M25 12v12" stroke="#1030f0" stroke-width="2"/><path d="M4 18h20" stroke="#000" stroke-width="1.5"/><path d="M4 18l4-3v6zM24 18l-4-3v6z" fill="#000"/><text x="14" y="12" text-anchor="middle" font-family="Liberation Sans" font-weight="bold" font-size="11">N</text></svg>
<svg class="a" style="left:876px;top:566px" width="28" height="28" viewBox="0 0 28 28"><circle cx="14" cy="14" r="8" fill="#000"/><path d="M14 6a8 8 0 0 1 8 8h-8zM14 22a8 8 0 0 1 -8 -8h8z" fill="#f0e000"/><path d="M14 2v24M2 14h24" stroke="#000" stroke-width="1.5"/></svg>
<svg class="a" style="left:876px;top:607px" width="28" height="28" viewBox="0 0 28 28"><path d="M7 10h14l-1.5 14c0 1-2 2-5.5 2s-5.5-1-5.5-2z" fill="#c8c8c8" stroke="#888" stroke-width="0.8"/><ellipse cx="14" cy="9" rx="8" ry="2.5" fill="#e4e4e4" stroke="#888" stroke-width="0.8"/><ellipse cx="14" cy="6.5" rx="2.5" ry="1.5" fill="#d0d0d0" stroke="#888" stroke-width="0.8"/><path d="M10 12v11M14 12v12M18 12v11" stroke="#f0f0f0" stroke-width="1.5"/><path d="M12 12v11M16 12v11" stroke="#999"/></svg>
<svg class="a" style="left:876px;top:650px" width="28" height="28" viewBox="0 0 28 28"><path d="M2 5h20M20 3v20" stroke="#000" stroke-width="1.5"/><path d="M2 5l4-3v6zM20 25l-3-4h6z" fill="#000"/><circle cx="12" cy="16" r="6" fill="#000"/><path d="M12 10a6 6 0 0 1 6 6h-6zM12 22a6 6 0 0 1 -6 -6h6z" fill="#f0e000"/><path d="M12 8v16M4 16h16" stroke="#000"/></svg>
<div class="a" style="left:909px;top:114px;width:4px;height:574px;background:#d4d0c8;box-shadow:inset 1px 0 #e4e2dd,inset -1px 0 #bcb8b0"></div>
<div class="a" style="left:913px;top:114px;width:111px;height:574px;background:#d4d0c8;box-shadow:inset 1px 0 #a09c94"></div>
<div class="a" style="left:914px;top:114px;width:108px;height:20px;background:linear-gradient(#c8c5be,#d8d5cf 50%,#e0ded9)"></div>
<div class="t" style="left:917px;top:116px">Visibles</div>
<div class="a" style="left:919px;top:137px;width:100px;height:547px;border:1px solid #a8a49c;box-shadow:inset 1px 1px #f0efec"></div>
<div class="a" style="left:920px;top:138px;width:97px;height:20px;background:linear-gradient(#c4c1ba,#dcd9d4 60%,#e6e4e0)"></div>
<div class="a" style="left:926px;top:141px;width:34px;height:17px;background:linear-gradient(#fcfcfb,#f0efec 60%,#dcdad6);border:1px solid #a4a09a;border-bottom:none;border-radius:3px 3px 0 0"></div>
<div class="a" style="left:960px;top:142px;width:41px;height:15px;background:linear-gradient(#eeedea,#dedbd6);border:1px solid #a4a09a;border-bottom:none;border-radius:3px 3px 0 0"></div>
<div class="t" style="left:932px;top:143px;font-size:9px;color:#202020;transform:scaleX(0.86);transform-origin:0 0">Layer</div>
<div class="t" style="left:968px;top:143px;font-size:9px;color:#202020;transform:scaleX(0.8);transform-origin:0 0">Render</div>
<div class="a" style="left:920px;top:158px;width:97px;height:2px;background:#bcb8b0;box-shadow:0 1px #e8e6e2"></div>
<div class="a" style="left:933px;top:162px;width:20px;height:17px;background:#d4d0c8;box-shadow:inset -1px -1px #404040,inset 1px 1px #fff,inset -2px -2px #808080"></div>
<div class="a" style="left:937px;top:166px;width:12px;height:10px;background:#a00000;border:1px solid #000"></div>
<div class="t" style="left:954px;top:164px;font-size:9px;color:#202020;transform:scaleX(0.83);transform-origin:0 0">Top</div>
<div class="a" style="left:992px;top:164px;width:13px;height:13px;background:#fff;box-shadow:inset 1px 1px #808080,inset -1px -1px #fff,inset 2px 2px #404040,inset -2px -2px #d4d0c8"></div>
<svg class="a" style="left:992px;top:164px" width="13" height="13"><path d="M3 6l2 3 5-6" stroke="#000" stroke-width="2" fill="none"/></svg>
<div class="a" style="left:933px;top:180px;width:20px;height:17px;background:#d4d0c8;box-shadow:inset -1px -1px #404040,inset 1px 1px #fff,inset -2px -2px #808080"></div>
<div class="a" style="left:937px;top:184px;width:12px;height:10px;background:#009000;border:1px solid #000"></div>
<div class="t" style="left:954px;top:182px;font-size:9px;color:#202020;transform:scaleX(0.83);transform-origin:0 0">Bottom</div>
<div class="a" style="left:992px;top:182px;width:13px;height:13px;background:#fff;box-shadow:inset 1px 1px #808080,inset -1px -1px #fff,inset 2px 2px #404040,inset -2px -2px #d4d0c8"></div>
<svg class="a" style="left:992px;top:182px" width="13" height="13"><path d="M3 6l2 3 5-6" stroke="#000" stroke-width="2" fill="none"/></svg>
<div class="a" style="left:933px;top:198px;width:20px;height:17px;background:#d4d0c8;box-shadow:inset -1px -1px #404040,inset 1px 1px #fff,inset -2px -2px #808080"></div>
<div class="a" style="left:937px;top:202px;width:12px;height:10px;background:#a000a0;border:1px solid #000"></div>
<div class="t" style="left:954px;top:200px;font-size:9px;color:#202020;transform:scaleX(0.83);transform-origin:0 0">F.Adhes</div>
<div class="a" style="left:992px;top:200px;width:13px;height:13px;background:#fff;box-shadow:inset 1px 1px #808080,inset -1px -1px #fff,inset 2px 2px #404040,inset -2px -2px #d4d0c8"></div>
<svg class="a" style="left:992px;top:200px" width="13" height="13"><path d="M3 6l2 3 5-6" stroke="#000" stroke-width="2" fill="none"/></svg>
<div class="a" style="left:933px;top:216px;width:20px;height:17px;background:#d4d0c8;box-shadow:inset -1px -1px #404040,inset 1px 1px #fff,inset -2px -2px #808080"></div>
<div class="a" style="left:937px;top:220px;width:12px;height:10px;background:#0000c0;border:1px solid #000"></div>
<div class="t" style="left:954px;top:218px;font-size:9px;color:#202020;transform:scaleX(0.83);transform-origin:0 0">B.Adhes</div>
<div class="a" style="left:992px;top:218px;width:13px;height:13px;background:#fff;box-shadow:inset 1px 1px #808080,inset -1px -1px #fff,inset 2px 2px #404040,inset -2px -2px #d4d0c8"></div>
<svg class="a" style="left:992px;top:218px" width="13" height="13"><path d="M3 6l2 3 5-6" stroke="#000" stroke-width="2" fill="none"/></svg>
<div class="a" style="left:933px;top:234px;width:20px;height:17px;background:#d4d0c8;box-shadow:inset -1px -1px #404040,inset 1px 1px #fff,inset -2px -2px #808080"></div>
<div class="a" style="left:937px;top:238px;width:12px;height:10px;background:#a00000;border:1px solid #000"></div>
<div class="t" style="left:954px;top:236px;font-size:9px;color:#202020;transform:scaleX(0.83);transform-origin:0 0">F.Paste</div>
<div class="a" style="left:992px;top:236px;width:13px;height:13px;background:#fff;box-shadow:inset 1px 1px #808080,inset -1px -1px #fff,inset 2px 2px #404040,inset -2px -2px #d4d0c8"></div>
<svg class="a" style="left:992px;top:236px" width="13" height="13"><path d="M3 6l2 3 5-6" stroke="#000" stroke-width="2" fill="none"/></svg>
<div class="a" style="left:933px;top:252px;width:20px;height:17px;background:#d4d0c8;box-shadow:inset -1px -1px #404040,inset 1px 1px #fff,inset -2px -2px #808080"></div>
<div class="a" style="left:937px;top:256px;width:12px;height:10px;background:#00ffff;border:1px solid #000"></div>
<div class="t" style="left:954px;top:254px;font-size:9px;color:#202020;transform:scaleX(0.83);transform-origin:0 0">B.Paste</div>
<div class="a" style="left:992px;top:254px;width:13px;height:13px;background:#fff;box-shadow:inset 1px 1px #808080,inset -1px -1px #fff,inset 2px 2px #404040,inset -2px -2px #d4d0c8"></div>
<svg class="a" style="left:992px;top:254px" width="13" height="13"><path d="M3 6l2 3 5-6" stroke="#000" stroke-width="2" fill="none"/></svg>
<div class="a" style="left:933px;top:270px;width:20px;height:17px;background:#d4d0c8;box-shadow:inset -1px -1px #404040,inset 1px 1px #fff,inset -2px -2px #808080"></div>
<div class="a" style="left:937px;top:274px;width:12px;height:10px;background:#00a0a0;border:1px solid #000"></div>
<div class="t" style="left:954px;top:272px;font-size:9px;color:#202020;transform:scaleX(0.83);transform-origin:0 0">F.SilkS</div>
<div class="a" style="left:992px;top:272px;width:13px;height:13px;background:#fff;box-shadow:inset 1px 1px #808080,inset -1px -1px #fff,inset 2px 2px #404040,inset -2px -2px #d4d0c8"></div>
<svg class="a" style="left:992px;top:272px" width="13" height="13"><path d="M3 6l2 3 5-6" stroke="#000" stroke-width="2" fill="none"/></svg>
<div class="a" style="left:933px;top:288px;width:20px;height:17px;background:#d4d0c8;box-shadow:inset -1px -1px #404040,inset 1px 1px #fff,inset -2px -2px #808080"></div>
<div class="a" style="left:937px;top:292px;width:12px;height:10px;background:#a000a0;border:1px solid #000"></div>
<div class="t" style="left:954px;top:290px;font-size:9px;color:#202020;transform:scaleX(0.83);transform-origin:0 0">B.SilkS</div>
<div class="a" style="left:992px;top:290px;width:13px;height:13px;background:#fff;box-shadow:inset 1px 1px #808080,inset -1px -1px #fff,inset 2px 2px #404040,inset -2px -2px #d4d0c8"></div>
<svg class="a" style="left:992px;top:290px" width="13" height="13"><path d="M3 6l2 3 5-6" stroke="#000" stroke-width="2" fill="none"/></svg>
<div class="a" style="left:933px;top:306px;width:20px;height:17px;background:#d4d0c8;box-shadow:inset -1px -1px #404040,inset 1px 1px #fff,inset -2px -2px #808080"></div>
<div class="a" style="left:937px;top:310px;width:12px;height:10px;background:#a000a0;border:1px solid #000"></div>
<div class="t" style="left:954px;top:308px;font-size:9px;color:#202020;transform:scaleX(0.83);transform-origin:0 0">F.Mask</div>
<div class="a" style="left:992px;top:308px;width:13px;height:13px;background:#fff;box-shadow:inset 1px 1px #808080,inset -1px -1px #fff,inset 2px 2px #404040,inset -2px -2px #d4d0c8"></div>
<svg class="a" style="left:992px;top:308px" width="13" height="13"><path d="M3 6l2 3 5-6" stroke="#000" stroke-width="2" fill="none"/></svg>
<div class="a" style="left:933px;top:324px;width:20px;height:17px;background:#d4d0c8;box-shadow:inset -1px -1px #404040,inset 1px 1px #fff,inset -2px -2px #808080"></div>
<div class="a" style="left:937px;top:328px;width:12px;height:10px;background:#808000;border:1px solid #000"></div>
<div class="t" style="left:954px;top:326px;font-size:9px;color:#202020;transform:scaleX(0.83);transform-origin:0 0">B.Mask</div>
<div class="a" style="left:992px;top:326px;width:13px;height:13px;background:#fff;box-shadow:inset 1px 1px #808080,inset -1px -1px #fff,inset 2px 2px #404040,inset -2px -2px #d4d0c8"></div>
<svg class="a" style="left:992px;top:326px" width="13" height="13"><path d="M3 6l2 3 5-6" stroke="#000" stroke-width="2" fill="none"/></svg>
<div class="a" style="left:933px;top:342px;width:20px;height:17px;background:#d4d0c8;box-shadow:inset -1px -1px #404040,inset 1px 1px #fff,inset -2px -2px #808080"></div>
<div class="a" style="left:937px;top:346px;width:12px;height:10px;background:#c8c8c8;border:1px solid #000"></div>
<div class="t" style="left:954px;top:344px;font-size:9px;color:#202020;transform:scaleX(0.83);transform-origin:0 0">Dwgs.User</div>
<div class="a" style="left:992px;top:344px;width:13px;height:13px;background:#fff;box-shadow:inset 1px 1px #808080,inset -1px -1px #fff,inset 2px 2px #404040,inset -2px -2px #d4d0c8"></div>
<svg class="a" style="left:992px;top:344px" width="13" height="13"><path d="M3 6l2 3 5-6" stroke="#000" stroke-width="2" fill="none"/></svg>
<div class="a" style="left:933px;top:360px;width:20px;height:17px;background:#d4d0c8;box-shadow:inset -1px -1px #404040,inset 1px 1px #fff,inset -2px -2px #808080"></div>
<div class="a" style="left:937px;top:364px;width:12px;height:10px;background:#0000c0;border:1px solid #000"></div>
<div class="t" style="left:954px;top:362px;font-size:9px;color:#202020;transform:scaleX(0.83);transform-origin:0 0">Cmts.User</div>
<div class="a" style="left:992px;top:362px;width:13px;height:13px;background:#fff;box-shadow:inset 1px 1px #808080,inset -1px -1px #fff,inset 2px 2px #404040,inset -2px -2px #d4d0c8"></div>
<svg class="a" style="left:992px;top:362px" width="13" height="13"><path d="M3 6l2 3 5-6" stroke="#000" stroke-width="2" fill="none"/></svg>
<div class="a" style="left:933px;top:378px;width:20px;height:17px;background:#d4d0c8;box-shadow:inset -1px -1px #404040,inset 1px 1px #fff,inset -2px -2px #808080"></div>
<div class="a" style="left:937px;top:382px;width:12px;height:10px;background:#009000;border:1px solid #000"></div>
<div class="t" style="left:954px;top:380px;font-size:9px;color:#202020;transform:scaleX(0.83);transform-origin:0 0">Eco1.User</div>
<div class="a" style="left:992px;top:380px;width:13px;height:13px;background:#fff;box-shadow:inset 1px 1px #808080,inset -1px -1px #fff,inset 2px 2px #404040,inset -2px -2px #d4d0c8"></div>
<svg class="a" style="left:992px;top:380px" width="13" height="13"><path d="M3 6l2 3 5-6" stroke="#000" stroke-width="2" fill="none"/></svg>
<div class="a" style="left:933px;top:396px;width:20px;height:17px;background:#d4d0c8;box-shadow:inset -1px -1px #404040,inset 1px 1px #fff,inset -2px -2px #808080"></div>
<div class="a" style="left:937px;top:400px;width:12px;height:10px;background:#ffff00;border:1px solid #000"></div>
<div class="t" style="left:954px;top:398px;font-size:9px;color:#202020;transform:scaleX(0.83);transform-origin:0 0">Eco2.User</div>
<div class="a" style="left:992px;top:398px;width:13px;height:13px;background:#fff;box-shadow:inset 1px 1px #808080,inset -1px -1px #fff,inset 2px 2px #404040,inset -2px -2px #d4d0c8"></div>
<svg class="a" style="left:992px;top:398px" width="13" height="13"><path d="M3 6l2 3 5-6" stroke="#000" stroke-width="2" fill="none"/></svg>
<div class="a" style="left:933px;top:414px;width:20px;height:17px;background:#d4d0c8;box-shadow:inset -1px -1px #404040,inset 1px 1px #fff,inset -2px -2px #808080"></div>
<div class="a" style="left:937px;top:418px;width:12px;height:10px;background:#ffff00;border:1px solid #000"></div>
<div class="t" style="left:954px;top:416px;font-size:9px;color:#202020;transform:scaleX(0.83);transform-origin:0 0">Edge.Cuts</div>
<div class="a" style="left:992px;top:416px;width:13px;height:13px;background:#fff;box-shadow:inset 1px 1px #808080,inset -1px -1px #fff,inset 2px 2px #404040,inset -2px -2px #d4d0c8"></div>
<svg class="a" style="left:992px;top:416px" width="13" height="13"><path d="M3 6l2 3 5-6" stroke="#000" stroke-width="2" fill="none"/></svg>
<svg class="a" style="left:923px;top:181px" width="10" height="16"><path d="M1 1L9 7.5L1 14Z" fill="#0000c0"/><path d="M1 1L9 7.5H1Z" fill="#8080ff"/></svg>
<div class="a" style="left:0;top:689px;width:1023px;height:28px;background:#d4d0c8;border:1px solid #a09c94"></div><div class="a" style="left:1023px;top:689px;width:1px;height:29px;background:#fff"></div>
<div class="sp" style="left:0px;top:719px;width:355px"><div class="t" style="left:2px;top:4px;letter-spacing:-0.15px">Generate excellon2 drill file</div></div>
<div class="sp" style="left:357px;top:719px;width:59px"><div class="t" style="left:2px;top:4px;letter-spacing:-0.05px">Z 203200</div></div>
<div class="sp" style="left:418px;top:719px;width:168px"><div class="t" style="left:2px;top:4px;letter-spacing:-0.05px">X -7.620000  Y -104.140000</div></div>
<div class="sp" style="left:587px;top:719px;width:256px"><div class="t" style="left:2px;top:4px;letter-spacing:-0.05px">dx -7.620000  dy -104.140000  d 104.418408</div></div>
<div class="sp" style="left:845px;top:719px;width:46px"><div class="t" style="left:2px;top:4px;letter-spacing:-0.05px">mm</div></div>
<div class="sp" style="left:894px;top:719px;width:129px"><div class="t" style="left:2px;top:4px;letter-spacing:-0.05px"></div></div>
<div class="a" style="left:0;top:738px;width:1024px;height:30px;background:#d4d0c8;box-shadow:inset 0 1px #d4d0c8,inset 0 2px #fff"></div>
<div class="a" style="left:2px;top:742px;width:52px;height:22px;background:#d4d0c8;box-shadow:inset -1px -1px #404040,inset 1px 1px #fff,inset -2px -2px #808080"></div>
<svg class="a" style="left:5px;top:744px" width="16" height="16" viewBox="0 0 16 16"><path d="M1 3c2-1 4-1 6 0v5c-2-1-4-1-6 0z" fill="#f04010"/><path d="M8 3c2 1 4 1 7 0v5c-3 1-5 1-7 0z" fill="#30b030"/><path d="M1 9c2-1 4-1 6 0v5c-2-1-4-1-6 0z" fill="#2050e0"/><path d="M8 9c2 1 4 1 7 0v5c-3 1-5 1-7 0z" fill="#f0c010"/></svg>
<div class="t" style="left:22px;top:746px;font-weight:bold;letter-spacing:0.6px">Start</div>
<div class="a" style="left:61px;top:742px;width:2px;height:22px;box-shadow:inset 1px 0 #808080,inset -1px 0 #fff"></div>
<div class="a" style="left:68px;top:742px;width:158px;height:22px;background:#d4d0c8;box-shadow:inset -1px -1px #404040,inset 1px 1px #fff,inset -2px -2px #808080"></div>
<div class="t" style="left:91px;top:747px">Inbox - Outlook Express</div>
<svg class="a" style="left:72px;top:745px" width="16" height="16" viewBox="0 0 16 16"><path d="M2 5h11v8H2z" fill="#e8f0ff" stroke="#3060b0"/><path d="M2 5l5.5 4 5.5-4" stroke="#3060b0" fill="none"/><path d="M4 4c1-3 6-4 9-1" stroke="#2080e0" stroke-width="2" fill="none"/><path d="M12 13c-1 2-6 3-9 1" stroke="#2080e0" stroke-width="2" fill="none"/></svg>
<div class="a" style="left:231px;top:742px;width:158px;height:22px;background:#d4d0c8;box-shadow:inset -1px -1px #404040,inset 1px 1px #fff,inset -2px -2px #808080"></div>
<div class="t" style="left:254px;top:747px">ArtCAM Pro - ok_310 x 1...</div>
<svg class="a" style="left:235px;top:745px" width="16" height="16" viewBox="0 0 16 16"><path d="M3 15L8 1l5 14" stroke="#5030a0" stroke-width="2" fill="none"/><rect x="6" y="8" width="4" height="7" fill="#3050d0"/><path d="M1 15h14" stroke="#202060" stroke-width="1.5"/></svg>
<div class="a" style="left:394px;top:742px;width:159px;height:22px;background:#d4d0c8;box-shadow:inset -1px -1px #404040,inset 1px 1px #fff,inset -2px -2px #808080"></div>
<div class="t" style="left:417px;top:747px">KiCad (2013-07-07 BZR ...</div>
<svg class="a" style="left:398px;top:745px" width="16" height="16" viewBox="0 0 16 16"><rect x="2" y="1" width="12" height="14" fill="#f8f0e0" stroke="#a06020"/><path d="M5 4h6v4H5z" fill="none" stroke="#c07020"/><path d="M4 11h8M6 8v5M10 8v5" stroke="#c07020"/></svg>
<div class="a" style="left:557px;top:742px;width:158px;height:22px;background:repeating-conic-gradient(#fff 0 25%,#d4d0c8 0 50%) 0 0/2px 2px;box-shadow:inset 1px 1px #404040,inset -1px -1px #fff,inset 2px 2px #808080"></div>
<div class="t" style="left:582px;top:748px;font-weight:bold;letter-spacing:0.55px">Pcbnew (2013-07-07 ...</div>
<svg class="a" style="left:561px;top:745px" width="16" height="16" viewBox="0 0 16 16"><rect x="2" y="2" width="10" height="13" fill="#f0f0f0" stroke="#606060"/><path d="M4 3v11M7 3v11" stroke="#a0a0a0"/><path d="M8 13l6-9" stroke="#303030" stroke-width="2"/><path d="M13 3l2-2" stroke="#d02020" stroke-width="1.5"/></svg>
<div class="a" style="left:720px;top:742px;width:160px;height:22px;background:#d4d0c8;box-shadow:inset -1px -1px #404040,inset 1px 1px #fff,inset -2px -2px #808080"></div>
<div class="t" style="left:743px;top:747px">Adobe Photoshop</div>
<svg class="a" style="left:724px;top:745px" width="16" height="16" viewBox="0 0 16 16"><rect x="1" y="1" width="14" height="14" fill="#400000" stroke="#a02020"/><ellipse cx="8" cy="8" rx="5" ry="3" fill="#f0f0f0"/><circle cx="8" cy="8" r="2" fill="#303030"/></svg>
<div class="a" style="left:889px;top:742px;width:2px;height:22px;box-shadow:inset 1px 0 #808080,inset -1px 0 #fff"></div>
<div class="a" style="left:900px;top:746px;width:16px;height:16px;background:#0a246a"></div>
<div class="t" style="left:901px;top:748px;color:#fff;font-size:10.5px">EN</div>
<div class="a" style="left:924px;top:742px;width:98px;height:23px;box-shadow:inset 1px 1px #808080,inset -1px -1px #fff"></div>
<svg class="a" style="left:927px;top:745px" width="18" height="18" viewBox="0 0 18 18"><rect x="1" y="5" width="10" height="8" fill="#304080" stroke="#7090d0"/><rect x="2" y="13" width="9" height="3" fill="#a0b0e0"/><path d="M13 3c2 2 2 5 0 7M15 1c3 3 3 8 0 11" stroke="#404040" fill="none"/></svg>
<svg class="a" style="left:946px;top:745px" width="16" height="18" viewBox="0 0 16 18"><path d="M8 1l6 3v6c0 4-3 6-6 7-3-1-6-3-6-7V4z" fill="#d02020" stroke="#404080"/><path d="M5.5 7l5 5M10.5 7l-5 5" stroke="#fff" stroke-width="1.8"/></svg>
<div class="t" style="left:968px;top:747px;letter-spacing:-0.35px">11:05 PM</div>
<div class="a menuf" style="left:0;top:37px;width:188px;height:570px"></div>
<div class="mi" style="top:40px"><div class="mt" style="left:29px">New</div></div>
<svg class="a" style="left:4px;top:42px" width="27" height="27" viewBox="0 0 26 26"><path d="M1.5 1.5h23v17l-6 6h-17z" fill="#f4f4f4" stroke="#b0b0b0"/><path d="M24.5 18.5h-6v6" fill="#d8d8d8" stroke="#b0b0b0"/><path d="M5 3v18M8 3v18M11 3v10M14 3v10M17 3v18M20 5v14" stroke="#a8a8a8" stroke-width="1.3"/><path d="M3 4v18" stroke="#c8c8c8" stroke-dasharray="1 2"/><path d="M18 0l2.4 5 5.4 0.6-4 3.7 1.1 5.3-4.9-2.7-4.9 2.7 1.1-5.3-4-3.7 5.4-0.6z" fill="#f0f000" stroke="#a0a000" stroke-width="0.8"/></svg>
<div class="mi" style="top:70px"><div class="mt" style="left:29px">Open</div><div class="mt" style="left:132px">Ctrl+L</div></div>
<svg class="a" style="left:4px;top:72px" width="27" height="27" viewBox="0 0 26 26"><path d="M1.5 1.5h23v17l-6 6h-17z" fill="#f4f4f4" stroke="#b0b0b0"/><path d="M24.5 18.5h-6v6" fill="#d8d8d8" stroke="#b0b0b0"/><path d="M5 3v18M8 3v18M11 3v10M14 3v10M17 3v18M20 5v14" stroke="#a8a8a8" stroke-width="1.3"/><path d="M3 4v18" stroke="#c8c8c8" stroke-dasharray="1 2"/></svg>
<div class="mi" style="top:100px"><div class="mt" style="left:29px">Open Recent</div><div class="arr" style="left:174px;top:11px;border-left-color:#000"></div></div>
<svg class="a" style="left:4px;top:102px" width="27" height="27" viewBox="0 0 26 26"><path d="M1.5 1.5h16v20h-16z" fill="#f0f0f0" stroke="#b0b0b0"/><path d="M4.5 3.5h16v20h-16z" fill="#f4f4f4" stroke="#b0b0b0"/><path d="M7.5 5.5h17v14l-5 5h-12z" fill="#fafafa" stroke="#a8a8a8"/><path d="M24.5 19.5h-5v5" fill="#dcdcdc" stroke="#a8a8a8"/></svg>
<div class="mi" style="top:130px"><div class="mt" style="left:29px">Append Board</div></div>
<svg class="a" style="left:4px;top:132px" width="27" height="27" viewBox="0 0 26 26"><path d="M1.5 1.5h23v17l-6 6h-17z" fill="#f4f4f4" stroke="#b0b0b0"/><path d="M24.5 18.5h-6v6" fill="#d8d8d8" stroke="#b0b0b0"/><path d="M1 13h12M9 8l6 5-6 5" stroke="#707070" stroke-width="2" fill="#fff"/><path d="M1 13h12" stroke="#fff" stroke-width="1"/></svg>
<div class="msep" style="top:163px"></div>
<div class="mi" style="top:169px"><div class="mt" style="left:29px">Save</div><div class="mt" style="left:132px">Ctrl+S</div></div>
<svg class="a" style="left:4px;top:171px" width="27" height="27" viewBox="0 0 26 26"><path d="M2 14h22v10H2z" fill="#d8d8d8" stroke="#707070"/><path d="M4 14l3-6h12l3 6" fill="#e8e8e8" stroke="#909090"/><rect x="4" y="19" width="12" height="3" fill="#b0b0b0"/><path d="M5 8c0-6 8-7 11-3v-2l4 6-7 2 2-2c-2-3-7-3-8 1z" fill="#3060c0" stroke="#204080" stroke-width="0.6"/><path d="M10 3q7 0 7 7" stroke="#3070d0" stroke-width="4" fill="none"/><path d="M12 10l5 5 5-5z" fill="#3070d0"/></svg>
<div class="mi" style="top:199px"><div class="mt" style="left:29px">Save As...</div></div>
<svg class="a" style="left:4px;top:201px" width="27" height="27" viewBox="0 0 26 26"><path d="M2 14h22v10H2z" fill="#d8d8d8" stroke="#707070"/><path d="M4 14l3-6h12l3 6" fill="#e8e8e8" stroke="#909090"/><rect x="4" y="19" width="8" height="4" fill="#fff" stroke="#909090"/><rect x="13" y="19" width="8" height="4" fill="#fff" stroke="#909090"/><path d="M10 3q7 0 7 7" stroke="#3070d0" stroke-width="4" fill="none"/><path d="M12 10l5 5 5-5z" fill="#3070d0"/></svg>
<div class="msep" style="top:232px"></div>
<div class="mi" style="top:238px"><div class="mt" style="left:29px">Revert to Last</div></div>
<svg class="a" style="left:4px;top:240px" width="27" height="27" viewBox="0 0 26 26"><path d="M1.5 1.5h23v17l-6 6h-17z" fill="#f4f4f4" stroke="#b0b0b0"/><path d="M24.5 18.5h-6v6" fill="#d8d8d8" stroke="#b0b0b0"/><path d="M3 4h18M3 7h18" stroke="#c8c8c8"/><circle cx="13" cy="14" r="8" fill="#f0c030"/><circle cx="13" cy="14" r="7" fill="#fff" stroke="#e04040" stroke-width="0.5"/><circle cx="13" cy="14" r="4" fill="#f4f4f4" stroke="#d0d0d0"/><path d="M13 7v3M13 18v3M6 14h3M17 14h3" stroke="#e02020" stroke-width="3"/></svg>
<div class="mi" style="top:268px"><div class="mt" style="left:29px">Rescue</div></div>
<svg class="a" style="left:4px;top:270px" width="27" height="27" viewBox="0 0 26 26"><path d="M1.5 1.5h23v17l-6 6h-17z" fill="#f4f4f4" stroke="#b0b0b0"/><path d="M24.5 18.5h-6v6" fill="#d8d8d8" stroke="#b0b0b0"/><path d="M3 4h18M3 7h18" stroke="#c8c8c8"/><circle cx="13" cy="14" r="8" fill="#f0c030"/><circle cx="13" cy="14" r="7" fill="#fff" stroke="#e04040" stroke-width="0.5"/><circle cx="13" cy="14" r="4" fill="#f4f4f4" stroke="#d0d0d0"/><path d="M13 7v3M13 18v3M6 14h3M17 14h3" stroke="#e02020" stroke-width="3"/></svg>
<div class="msep" style="top:301px"></div>
<div class="mi hl" style="top:307px"><div class="mt" style="left:29px">Fabrication Outputs</div><div class="arr" style="left:174px;top:11px;border-left-color:#fff"></div></div>
<svg class="a" style="left:4px;top:309px" width="27" height="27" viewBox="0 0 26 26"><path d="M3 3l20 20" stroke="#404040" stroke-width="2"/><path d="M23 3L9 17" stroke="#c0c0c0" stroke-width="3"/><path d="M18 2a5 5 0 1 0 6 6l-3 1-3-3z" fill="#d0d0d0" stroke="#404040" stroke-width="0.8"/><path d="M3 23l8-8" stroke="#f0b020" stroke-width="5"/><path d="M2 2l3 1-1 2z" fill="#303030"/></svg>
<div class="mi" style="top:337px"><div class="mt" style="left:29px">Import</div><div class="arr" style="left:174px;top:11px;border-left-color:#000"></div></div>
<svg class="a" style="left:4px;top:339px" width="27" height="27" viewBox="0 0 26 26"><path d="M1.5 1.5h23v17l-6 6h-17z" fill="#f4f4f4" stroke="#b0b0b0"/><path d="M24.5 18.5h-6v6" fill="#d8d8d8" stroke="#b0b0b0"/><path d="M1 13h12M9 8l6 5-6 5" stroke="#707070" stroke-width="2" fill="#fff"/><path d="M1 13h12" stroke="#fff" stroke-width="1"/></svg>
<div class="mi" style="top:367px"><div class="mt" style="left:29px">Export</div><div class="arr" style="left:174px;top:11px;border-left-color:#000"></div></div>
<svg class="a" style="left:4px;top:369px" width="27" height="27" viewBox="0 0 26 26"><path d="M1.5 2.5h19v15l-6 6h-13z" fill="#d8d8d8" stroke="#909090"/><path d="M8 12h10M14 7l6 5-6 5" stroke="#30a030" stroke-width="3" fill="none"/></svg>
<div class="msep" style="top:400px"></div>
<div class="mi" style="top:406px"><div class="mt" style="left:29px">Page settings</div></div>
<svg class="a" style="left:4px;top:408px" width="27" height="27" viewBox="0 0 26 26"><path d="M1.5 1.5h23v17l-6 6h-17z" fill="#f4f4f4" stroke="#b0b0b0"/><path d="M24.5 18.5h-6v6" fill="#d8d8d8" stroke="#b0b0b0"/><path d="M3 12h18M3 12l3-2v4zM21 12l-3-2v4zM8 2v20M8 2l-2 3h4zM8 22l-2-3h4z" stroke="#303030" stroke-width="1" fill="#303030"/><rect x="12" y="18" width="10" height="5" fill="#fff" stroke="#505050"/></svg>
<div class="mi" style="top:436px"><div class="mt" style="left:29px">Print</div></div>
<svg class="a" style="left:4px;top:438px" width="27" height="27" viewBox="0 0 26 26"><path d="M7 2h10l3 3v7H7z" fill="#fafafa" stroke="#808080"/><rect x="2" y="11" width="22" height="9" rx="2" fill="#e8e8e8" stroke="#606060"/><rect x="5" y="13" width="16" height="4" fill="#404040"/><rect x="4" y="19" width="18" height="5" rx="1" fill="#d4d4d4" stroke="#606060"/></svg>
<div class="mi" style="top:466px"><div class="mt" style="left:29px">Export SVG</div></div>
<svg class="a" style="left:4px;top:468px" width="27" height="27" viewBox="0 0 26 26"><path d="M7 1h10v6H7z" fill="#fafafa" stroke="#909090"/><rect x="2" y="6" width="22" height="7" rx="2" fill="#e8e8e8" stroke="#606060"/><rect x="5" y="8" width="16" height="3" fill="#404040"/><rect x="1" y="14" width="25" height="12" fill="#fff"/><text x="13" y="25" text-anchor="middle" font-family="Liberation Sans" font-style="italic" font-weight="bold" font-size="11" fill="#703010">SVG</text></svg>
<div class="mi" style="top:496px"><div class="mt" style="left:29px">Plot</div></div>
<svg class="a" style="left:4px;top:498px" width="27" height="27" viewBox="0 0 26 26"><path d="M9 2h10l3 3v7H9z" fill="#fafafa" stroke="#808080"/><path d="M2 15V1h3a4 4 0 0 1 0 8H2" fill="none" stroke="#203870" stroke-width="1.8"/><rect x="2" y="11" width="22" height="9" rx="2" fill="#e8e8e8" stroke="#606060"/><rect x="5" y="13" width="16" height="4" fill="#404040"/><rect x="4" y="19" width="18" height="5" rx="1" fill="#d4d4d4" stroke="#606060"/></svg>
<div class="msep" style="top:529px"></div>
<div class="mi" style="top:535px"><div class="mt" style="left:29px">Archive Footprints</div><div class="arr" style="left:174px;top:11px;border-left-color:#000"></div></div>
<svg class="a" style="left:4px;top:537px" width="27" height="27" viewBox="0 0 26 26"><rect x="1" y="20" width="24" height="5" fill="#c8c8c8" opacity="0.4"/><path d="M13 6c-4-3-8-3-11-1v18c3-2 7-2 11 1c4-3 8-3 11-1V5c-3-2-7-2-11 1z" fill="#f4f4f4" stroke="#505050"/><path d="M13 6v18" stroke="#505050"/><path d="M4 9h7M4 12h7M4 15h7M15 9h7M15 12h7M15 15h7" stroke="#b0b0b0"/></svg>
<div class="msep" style="top:568px"></div>
<div class="mi" style="top:574px"><div class="mt" style="left:29px">Quit</div></div>
<svg class="a" style="left:4px;top:576px" width="27" height="27" viewBox="0 0 26 26"><path d="M9 1h14v24H9z" fill="#1a5a1a" stroke="#203020"/><path d="M9 3l8 2v20l-8-2z" fill="#f8f8f8" stroke="#808080"/><path d="M1 12h8v-4l7 6-7 6v-4H1z" fill="#e01010"/></svg>
<div class="a menuf" style="left:183px;top:304px;width:187px;height:156px"></div>
<div class="a" style="left:186px;top:307px;width:181px;height:30px"><div class="mt" style="left:29px">Modules Position (.pos) File</div></div>
<svg class="a" style="left:189px;top:310px" width="25" height="25" viewBox="0 0 26 26"><path d="M1.5 1.5h23v17l-6 6h-17z" fill="#f4f4f4" stroke="#b0b0b0"/><path d="M24.5 18.5h-6v6" fill="#d8d8d8" stroke="#b0b0b0"/><path d="M4 3v18M4 21l-2-4h4zM4 4h18M22 4l-4-2v4z" stroke="#202020" fill="#202020"/><rect x="9" y="10" width="13" height="9" fill="#d8d8d8" stroke="#606060"/><g fill="#f07010"><rect x="10" y="8" width="3" height="4"/><rect x="14" y="8" width="3" height="4"/><rect x="18" y="8" width="3" height="4"/><rect x="10" y="17" width="3" height="4"/><rect x="14" y="17" width="3" height="4"/><rect x="18" y="17" width="3" height="4"/></g></svg>
<div class="a hl" style="left:186px;top:337px;width:181px;height:30px"><div class="mt" style="left:29px">Drill (.drl) File</div></div>
<svg class="a" style="left:189px;top:340px" width="25" height="25" viewBox="0 0 26 26"><path d="M1.5 1.5h23v17l-6 6h-17z" fill="#f4f4f4" stroke="#b0b0b0"/><path d="M24.5 18.5h-6v6" fill="#d8d8d8" stroke="#b0b0b0"/><path d="M4 3v18M4 21l-2-4h4zM4 4h18M22 4l-4-2v4z" stroke="#202020" fill="#202020"/><circle cx="14" cy="14" r="6" fill="#202020"/><path d="M14 8a6 6 0 0 1 6 6h-6zM14 20a6 6 0 0 1 -6 -6h6z" fill="#f0e000"/><path d="M14 7v14M7 14h14" stroke="#000"/></svg>
<div class="a" style="left:186px;top:367px;width:181px;height:30px"><div class="mt" style="left:29px">Module (.rpt) Report</div></div>
<svg class="a" style="left:189px;top:370px" width="25" height="25" viewBox="0 0 26 26"><path d="M4 23L18 9" stroke="#4070b0" stroke-width="4"/><path d="M5 5l16 16" stroke="#c8c8c8" stroke-width="3"/><path d="M17 3a5 5 0 1 0 6 6l-3 1-3-3z" fill="#e0e0e0" stroke="#909090" stroke-width="0.8"/><ellipse cx="13" cy="24" rx="10" ry="2" fill="#a0a0a0" opacity="0.4"/></svg>
<div class="a" style="left:186px;top:397px;width:181px;height:30px"><div class="mt" style="left:29px">Component (.cmp) File</div></div>
<svg class="a" style="left:189px;top:400px" width="25" height="25" viewBox="0 0 26 26"><path d="M1 13h3l1-3 2 6 2-6 1 3h2" stroke="#202020" fill="none"/><path d="M12 13h4" stroke="#202020" stroke-width="3"/><path d="M16 10l2 3-2 3z" fill="#202020"/><rect x="18" y="9" width="6" height="14" rx="2" fill="#2040a0" stroke="#101030"/><path d="M19 12h4M19 15h4M19 18h4" stroke="#e04040"/><path d="M21 0l1.6 3.4 3.6 0.4-2.7 2.5 0.8 3.6-3.3-1.9-3.3 1.9 0.8-3.6-2.7-2.5 3.6-0.4z" fill="#f0f000" stroke="#a0a000" stroke-width="0.6"/></svg>
<div class="a" style="left:186px;top:427px;width:181px;height:30px"><div class="mt" style="left:29px">BOM File</div></div>
<svg class="a" style="left:189px;top:430px" width="25" height="25" viewBox="0 0 26 26"><path d="M1.5 8.5h23v10l-6 6h-17z" fill="#fafafa" stroke="#b0b0b0"/><rect x="1" y="1" width="24" height="9" fill="#4a86d8"/><text x="13" y="9.5" text-anchor="middle" font-family="Liberation Sans" font-weight="bold" font-size="10" fill="#fff">BOM</text><path d="M6 13h15M6 16h15M6 19h12" stroke="#b0b0b0"/><path d="M3 13h1M3 16h1M3 19h1" stroke="#e020e0"/></svg>
</body></html>
